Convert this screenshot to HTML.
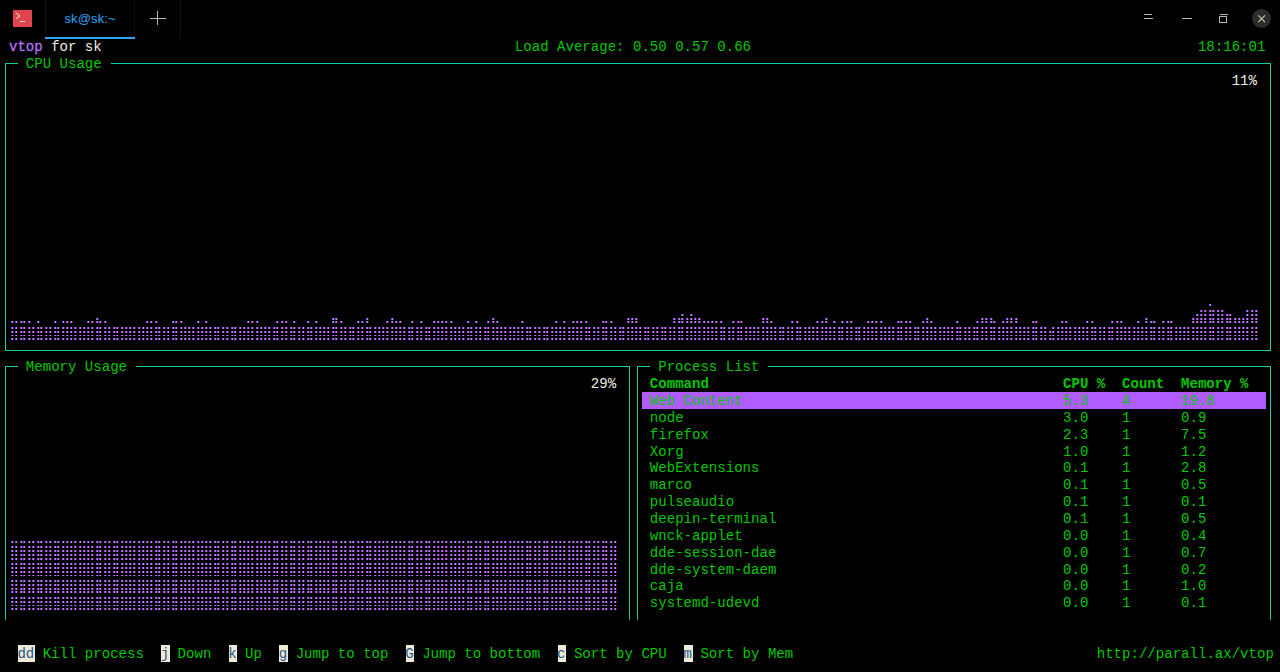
<!DOCTYPE html>
<html><head><meta charset="utf-8"><style>
html,body{margin:0;padding:0;background:#000;}
body{width:1280px;height:672px;position:relative;overflow:hidden;}
.t{position:absolute;white-space:pre;font-family:"Liberation Mono",monospace;font-size:14.0px;letter-spacing:0.032px;line-height:16.857px;}
.r{position:absolute;}
.ic{position:absolute;}
.ch{position:absolute;left:0;top:0;}
.tab{position:absolute;font-family:"Liberation Sans",sans-serif;font-size:13px;letter-spacing:0.15px;color:#2aa6f5;line-height:20px;white-space:pre;}
</style></head><body>
<div class="r" style="left:13px;top:10px;width:19px;height:17px;background:#e0444f"></div><svg class="ic" style="left:13px;top:10px" width="19" height="17" viewBox="0 0 19 17"><path d="M2.9 3.1 L7 5.9 L2.9 8.75" stroke="#f3ead8" stroke-width="1" fill="none"/><rect x="7" y="11" width="5" height="1" fill="#f3ead8"/></svg><div class="r" style="left:45px;top:0;width:1px;height:37px;background:#111211"></div><div class="r" style="left:134px;top:0;width:1px;height:37px;background:#111211"></div><div class="r" style="left:180px;top:0;width:1px;height:37px;background:#111211"></div><div class="r" style="left:45px;top:37px;width:90px;height:2px;background:#2aa6f5"></div><div class="tab" style="left:64.4px;top:8.6px;">sk@sk:~</div><div class="r" style="left:157px;top:11px;width:1px;height:14px;background:#b8b8b8"></div><div class="r" style="left:150px;top:18px;width:16px;height:1px;background:#b8b8b8"></div><div class="r" style="left:1144px;top:14px;width:8px;height:1px;background:#b4b4b4"></div><div class="r" style="left:1144px;top:18px;width:9px;height:1px;background:#b4b4b4"></div><div class="r" style="left:1182px;top:18px;width:10px;height:1px;background:#b4b4b4"></div><div class="r" style="left:1220px;top:14px;width:8px;height:1px;background:#b4b4b4"></div><div class="r" style="left:1219px;top:16px;width:6px;height:5px;border:1px solid #b4b4b4"></div><div class="r" style="left:1252px;top:9px;width:19px;height:19px;border-radius:50%;background:#2c2c2c"></div><svg class="ic" style="left:1252px;top:9px" width="19" height="19" viewBox="0 0 19 19"><path d="M6.2 6.4 L13 13.2 M13 6.4 L6.2 13.2" stroke="#d6cab4" stroke-width="1.05"/></svg>
<div class="t" style="left:8.97px;top:38.98px;color:#b874f8;-webkit-text-stroke:0.3px #b070f0;">vtop</div><div class="t" style="left:51.13px;top:38.98px;color:#f2eee0;">for sk</div><div class="t" style="left:514.91px;top:38.98px;color:#00c800;">Load Average: 0.50 0.57 0.66</div><div class="t" style="left:1197.94px;top:38.98px;color:#00c800;">18:16:01</div><div class="r" style="left:5.00px;top:63.00px;width:13.00px;height:1.00px;background:#16cea4;"></div><div class="r" style="left:111.00px;top:63.00px;width:1160.00px;height:1.00px;background:#16cea4;"></div><div class="r" style="left:5.00px;top:63.00px;width:1.00px;height:288.00px;background:#16cea4;"></div><div class="r" style="left:1270.00px;top:63.00px;width:1.00px;height:288.00px;background:#16cea4;"></div><div class="r" style="left:5.00px;top:350.00px;width:1266.00px;height:1.00px;background:#16cea4;"></div><div class="t" style="left:25.83px;top:55.84px;color:#00c800;">CPU Usage</div><div class="r" style="left:5.00px;top:366.00px;width:13.00px;height:1.00px;background:#16cea4;"></div><div class="r" style="left:136.00px;top:366.00px;width:494.00px;height:1.00px;background:#16cea4;"></div><div class="r" style="left:5.00px;top:366.00px;width:1.00px;height:254.00px;background:#16cea4;"></div><div class="r" style="left:629.00px;top:366.00px;width:1.00px;height:254.00px;background:#16cea4;"></div><div class="t" style="left:25.83px;top:359.26px;color:#00c800;">Memory Usage</div><div class="r" style="left:637.00px;top:366.00px;width:13.00px;height:1.00px;background:#16cea4;"></div><div class="r" style="left:768.00px;top:366.00px;width:503.00px;height:1.00px;background:#16cea4;"></div><div class="r" style="left:637.00px;top:366.00px;width:1.00px;height:254.00px;background:#16cea4;"></div><div class="r" style="left:1270.00px;top:366.00px;width:1.00px;height:254.00px;background:#16cea4;"></div><div class="t" style="left:658.26px;top:359.26px;color:#00c800;">Process List</div><div class="t" style="left:1231.67px;top:72.69px;color:#f2eee0;">11%</div><div class="t" style="left:590.80px;top:376.12px;color:#f2eee0;">29%</div><div class="t" style="left:649.83px;top:376.12px;color:#00c800;font-weight:bold;">Command</div><div class="t" style="left:1063.02px;top:376.12px;color:#00c800;font-weight:bold;">CPU %</div><div class="t" style="left:1122.04px;top:376.12px;color:#00c800;font-weight:bold;">Count</div><div class="t" style="left:1181.07px;top:376.12px;color:#00c800;font-weight:bold;">Memory %</div><div class="r" style="left:642.00px;top:392.04px;width:624.00px;height:16.86px;background:#b05cff;"></div><div class="t" style="left:649.83px;top:392.98px;color:#00c800;">Web Content</div><div class="t" style="left:1063.02px;top:392.98px;color:#00c800;">5.3</div><div class="t" style="left:1122.04px;top:392.98px;color:#00c800;">4</div><div class="t" style="left:1181.07px;top:392.98px;color:#00c800;">19.8</div><div class="t" style="left:649.83px;top:409.83px;color:#00c800;">node</div><div class="t" style="left:1063.02px;top:409.83px;color:#00c800;">3.0</div><div class="t" style="left:1122.04px;top:409.83px;color:#00c800;">1</div><div class="t" style="left:1181.07px;top:409.83px;color:#00c800;">0.9</div><div class="t" style="left:649.83px;top:426.69px;color:#00c800;">firefox</div><div class="t" style="left:1063.02px;top:426.69px;color:#00c800;">2.3</div><div class="t" style="left:1122.04px;top:426.69px;color:#00c800;">1</div><div class="t" style="left:1181.07px;top:426.69px;color:#00c800;">7.5</div><div class="t" style="left:649.83px;top:443.55px;color:#00c800;">Xorg</div><div class="t" style="left:1063.02px;top:443.55px;color:#00c800;">1.0</div><div class="t" style="left:1122.04px;top:443.55px;color:#00c800;">1</div><div class="t" style="left:1181.07px;top:443.55px;color:#00c800;">1.2</div><div class="t" style="left:649.83px;top:460.40px;color:#00c800;">WebExtensions</div><div class="t" style="left:1063.02px;top:460.40px;color:#00c800;">0.1</div><div class="t" style="left:1122.04px;top:460.40px;color:#00c800;">1</div><div class="t" style="left:1181.07px;top:460.40px;color:#00c800;">2.8</div><div class="t" style="left:649.83px;top:477.26px;color:#00c800;">marco</div><div class="t" style="left:1063.02px;top:477.26px;color:#00c800;">0.1</div><div class="t" style="left:1122.04px;top:477.26px;color:#00c800;">1</div><div class="t" style="left:1181.07px;top:477.26px;color:#00c800;">0.5</div><div class="t" style="left:649.83px;top:494.12px;color:#00c800;">pulseaudio</div><div class="t" style="left:1063.02px;top:494.12px;color:#00c800;">0.1</div><div class="t" style="left:1122.04px;top:494.12px;color:#00c800;">1</div><div class="t" style="left:1181.07px;top:494.12px;color:#00c800;">0.1</div><div class="t" style="left:649.83px;top:510.98px;color:#00c800;">deepin-terminal</div><div class="t" style="left:1063.02px;top:510.98px;color:#00c800;">0.1</div><div class="t" style="left:1122.04px;top:510.98px;color:#00c800;">1</div><div class="t" style="left:1181.07px;top:510.98px;color:#00c800;">0.5</div><div class="t" style="left:649.83px;top:527.83px;color:#00c800;">wnck-applet</div><div class="t" style="left:1063.02px;top:527.83px;color:#00c800;">0.0</div><div class="t" style="left:1122.04px;top:527.83px;color:#00c800;">1</div><div class="t" style="left:1181.07px;top:527.83px;color:#00c800;">0.4</div><div class="t" style="left:649.83px;top:544.69px;color:#00c800;">dde-session-dae</div><div class="t" style="left:1063.02px;top:544.69px;color:#00c800;">0.0</div><div class="t" style="left:1122.04px;top:544.69px;color:#00c800;">1</div><div class="t" style="left:1181.07px;top:544.69px;color:#00c800;">0.7</div><div class="t" style="left:649.83px;top:561.55px;color:#00c800;">dde-system-daem</div><div class="t" style="left:1063.02px;top:561.55px;color:#00c800;">0.0</div><div class="t" style="left:1122.04px;top:561.55px;color:#00c800;">1</div><div class="t" style="left:1181.07px;top:561.55px;color:#00c800;">0.2</div><div class="t" style="left:649.83px;top:578.40px;color:#00c800;">caja</div><div class="t" style="left:1063.02px;top:578.40px;color:#00c800;">0.0</div><div class="t" style="left:1122.04px;top:578.40px;color:#00c800;">1</div><div class="t" style="left:1181.07px;top:578.40px;color:#00c800;">1.0</div><div class="t" style="left:649.83px;top:595.26px;color:#00c800;">systemd-udevd</div><div class="t" style="left:1063.02px;top:595.26px;color:#00c800;">0.0</div><div class="t" style="left:1122.04px;top:595.26px;color:#00c800;">1</div><div class="t" style="left:1181.07px;top:595.26px;color:#00c800;">0.1</div><div class="r" style="left:18.00px;top:644.89px;width:16.86px;height:16.86px;background:#efe9d8;"></div><div class="t" style="left:17.40px;top:645.83px;color:#1d5a86;">dd</div><div class="t" style="left:34.26px;top:645.83px;color:#00c800;"> Kill process</div><div class="r" style="left:161.35px;top:644.89px;width:8.43px;height:16.86px;background:#efe9d8;"></div><div class="t" style="left:160.75px;top:645.83px;color:#1d5a86;">j</div><div class="t" style="left:169.18px;top:645.83px;color:#00c800;"> Down</div><div class="r" style="left:228.81px;top:644.89px;width:8.43px;height:16.86px;background:#efe9d8;"></div><div class="t" style="left:228.21px;top:645.83px;color:#1d5a86;">k</div><div class="t" style="left:236.64px;top:645.83px;color:#00c800;"> Up</div><div class="r" style="left:279.40px;top:644.89px;width:8.43px;height:16.86px;background:#efe9d8;"></div><div class="t" style="left:278.80px;top:645.83px;color:#1d5a86;">g</div><div class="t" style="left:287.24px;top:645.83px;color:#00c800;"> Jump to top</div><div class="r" style="left:405.89px;top:644.89px;width:8.43px;height:16.86px;background:#efe9d8;"></div><div class="t" style="left:405.29px;top:645.83px;color:#1d5a86;">G</div><div class="t" style="left:413.72px;top:645.83px;color:#00c800;"> Jump to bottom</div><div class="r" style="left:557.67px;top:644.89px;width:8.43px;height:16.86px;background:#efe9d8;"></div><div class="t" style="left:557.07px;top:645.83px;color:#1d5a86;">c</div><div class="t" style="left:565.51px;top:645.83px;color:#00c800;"> Sort by CPU</div><div class="r" style="left:684.16px;top:644.89px;width:8.43px;height:16.86px;background:#efe9d8;"></div><div class="t" style="left:683.56px;top:645.83px;color:#1d5a86;">m</div><div class="t" style="left:691.99px;top:645.83px;color:#00c800;"> Sort by Mem</div><div class="t" style="left:1096.75px;top:645.83px;color:#00c800;">http://parall.ax/vtop</div>
<svg class="ch" width="1280" height="672" viewBox="0 0 1280 672"><path d="M1209 304h1v2h-1zM1200 310h1v2h-1zm4 0h1v2h-1zm5 0h1v2h-1zm3 0h1v2h-1zm5 0h1v2h-1zm4 0h1v2h-1zm25 0h1v2h-1zm5 0h1v2h-1zm4 0h1v2h-1zM681 314h1v2h-1zm9 0h1v2h-1zm506 0h1v2h-1zm4 0h1v2h-1zm4 0h1v2h-1zm5 0h1v2h-1zm3 0h1v2h-1zm5 0h1v2h-1zm4 0h1v2h-1zm5 0h1v2h-1zm3 0h1v2h-1zm17 0h1v2h-1zm5 0h1v2h-1zm4 0h1v2h-1zM96 318h1v2h-1zm236 0h1v2h-1zm3 0h1v2h-1zm31 0h1v2h-1zm25 0h1v2h-1zm101 0h1v2h-1zm135 0h1v2h-1zm4 0h1v2h-1zm4 0h1v2h-1zm38 0h1v2h-1zm5 0h1v2h-1zm3 0h1v2h-1zm5 0h1v2h-1zm4 0h1v2h-1zm4 0h1v2h-1zm4 0h1v2h-1zm64 0h1v2h-1zm4 0h1v2h-1zm59 0h1v2h-1zm101 0h1v2h-1zm55 0h1v2h-1zm4 0h1v2h-1zm5 0h1v2h-1zm16 0h1v2h-1zm4 0h1v2h-1zm5 0h1v2h-1zm130 0h1v2h-1zm47 0h1v2h-1zm4 0h1v2h-1zm4 0h1v2h-1zm4 0h1v2h-1zm5 0h1v2h-1zm3 0h1v2h-1zm5 0h1v2h-1zm4 0h1v2h-1zm5 0h1v2h-1zm3 0h1v2h-1zm5 0h1v2h-1zm4 0h1v2h-1zm4 0h1v2h-1zm4 0h1v2h-1zm5 0h1v2h-1zm4 0h1v2h-1zM11 321h1v2h-1zm4 0h1v2h-1zm5 0h1v2h-1zm3 0h1v2h-1zm5 0h1v2h-1zm9 0h1v2h-1zm17 0h1v2h-1zm8 0h1v2h-1zm4 0h1v2h-1zm4 0h1v2h-1zm17 0h1v2h-1zm4 0h1v2h-1zm5 0h1v2h-1zm3 0h1v2h-1zm5 0h1v2h-1zm42 0h1v2h-1zm4 0h1v2h-1zm5 0h1v2h-1zm17 0h1v2h-1zm3 0h1v2h-1zm5 0h1v2h-1zm17 0h1v2h-1zm8 0h1v2h-1zm42 0h1v2h-1zm4 0h1v2h-1zm5 0h1v2h-1zm20 0h1v2h-1zm5 0h1v2h-1zm4 0h1v2h-1zm8 0h1v2h-1zm14 0h1v2h-1zm8 0h1v2h-1zm17 0h1v2h-1zm3 0h1v2h-1zm5 0h1v2h-1zm17 0h1v2h-1zm4 0h1v2h-1zm5 0h1v2h-1zm20 0h1v2h-1zm5 0h1v2h-1zm4 0h1v2h-1zm4 0h1v2h-1zm12 0h1v2h-1zm9 0h1v2h-1zm13 0h1v2h-1zm4 0h1v2h-1zm4 0h1v2h-1zm4 0h1v2h-1zm5 0h1v2h-1zm17 0h1v2h-1zm8 0h1v2h-1zm12 0h1v2h-1zm5 0h1v2h-1zm4 0h1v2h-1zm25 0h1v2h-1zm34 0h1v2h-1zm8 0h1v2h-1zm9 0h1v2h-1zm4 0h1v2h-1zm4 0h1v2h-1zm5 0h1v2h-1zm17 0h1v2h-1zm3 0h1v2h-1zm5 0h1v2h-1zm17 0h1v2h-1zm4 0h1v2h-1zm4 0h1v2h-1zm38 0h1v2h-1zm5 0h1v2h-1zm3 0h1v2h-1zm5 0h1v2h-1zm4 0h1v2h-1zm4 0h1v2h-1zm4 0h1v2h-1zm5 0h1v2h-1zm4 0h1v2h-1zm4 0h1v2h-1zm4 0h1v2h-1zm5 0h1v2h-1zm12 0h1v2h-1zm5 0h1v2h-1zm3 0h1v2h-1zm22 0h1v2h-1zm4 0h1v2h-1zm4 0h1v2h-1zm21 0h1v2h-1zm5 0h1v2h-1zm20 0h1v2h-1zm5 0h1v2h-1zm4 0h1v2h-1zm8 0h1v2h-1zm8 0h1v2h-1zm5 0h1v2h-1zm4 0h1v2h-1zm17 0h1v2h-1zm4 0h1v2h-1zm4 0h1v2h-1zm5 0h1v2h-1zm17 0h1v2h-1zm3 0h1v2h-1zm5 0h1v2h-1zm4 0h1v2h-1zm13 0h1v2h-1zm4 0h1v2h-1zm4 0h1v2h-1zm26 0h1v2h-1zm20 0h1v2h-1zm5 0h1v2h-1zm4 0h1v2h-1zm5 0h1v2h-1zm3 0h1v2h-1zm9 0h1v2h-1zm4 0h1v2h-1zm4 0h1v2h-1zm5 0h1v2h-1zm17 0h1v2h-1zm3 0h1v2h-1zm26 0h1v2h-1zm4 0h1v2h-1zm21 0h1v2h-1zm5 0h1v2h-1zm20 0h1v2h-1zm5 0h1v2h-1zm4 0h1v2h-1zm17 0h1v2h-1zm8 0h1v2h-1zm5 0h1v2h-1zm3 0h1v2h-1zm9 0h1v2h-1zm5 0h1v2h-1zm3 0h1v2h-1zm22 0h1v2h-1zm4 0h1v2h-1zm4 0h1v2h-1zm4 0h1v2h-1zm5 0h1v2h-1zm3 0h1v2h-1zm5 0h1v2h-1zm4 0h1v2h-1zm5 0h1v2h-1zm3 0h1v2h-1zm5 0h1v2h-1zm4 0h1v2h-1zm4 0h1v2h-1zm4 0h1v2h-1zm5 0h1v2h-1zm4 0h1v2h-1zM11 327h1v2h-1zm4 0h1v2h-1zm5 0h1v2h-1zm3 0h1v2h-1zm5 0h1v2h-1zm4 0h1v2h-1zm5 0h1v2h-1zm3 0h1v2h-1zm5 0h1v2h-1zm4 0h1v2h-1zm5 0h1v2h-1zm3 0h1v2h-1zm5 0h1v2h-1zm4 0h1v2h-1zm4 0h1v2h-1zm4 0h1v2h-1zm5 0h1v2h-1zm4 0h1v2h-1zm4 0h1v2h-1zm4 0h1v2h-1zm5 0h1v2h-1zm3 0h1v2h-1zm5 0h1v2h-1zm4 0h1v2h-1zm5 0h1v2h-1zm3 0h1v2h-1zm5 0h1v2h-1zm4 0h1v2h-1zm4 0h1v2h-1zm4 0h1v2h-1zm5 0h1v2h-1zm4 0h1v2h-1zm4 0h1v2h-1zm4 0h1v2h-1zm5 0h1v2h-1zm3 0h1v2h-1zm5 0h1v2h-1zm4 0h1v2h-1zm5 0h1v2h-1zm3 0h1v2h-1zm5 0h1v2h-1zm4 0h1v2h-1zm4 0h1v2h-1zm4 0h1v2h-1zm5 0h1v2h-1zm4 0h1v2h-1zm4 0h1v2h-1zm4 0h1v2h-1zm5 0h1v2h-1zm3 0h1v2h-1zm5 0h1v2h-1zm4 0h1v2h-1zm5 0h1v2h-1zm3 0h1v2h-1zm5 0h1v2h-1zm4 0h1v2h-1zm4 0h1v2h-1zm4 0h1v2h-1zm5 0h1v2h-1zm4 0h1v2h-1zm4 0h1v2h-1zm4 0h1v2h-1zm5 0h1v2h-1zm3 0h1v2h-1zm5 0h1v2h-1zm4 0h1v2h-1zm5 0h1v2h-1zm3 0h1v2h-1zm5 0h1v2h-1zm4 0h1v2h-1zm5 0h1v2h-1zm3 0h1v2h-1zm5 0h1v2h-1zm4 0h1v2h-1zm4 0h1v2h-1zm4 0h1v2h-1zm5 0h1v2h-1zm3 0h1v2h-1zm5 0h1v2h-1zm4 0h1v2h-1zm5 0h1v2h-1zm3 0h1v2h-1zm5 0h1v2h-1zm4 0h1v2h-1zm5 0h1v2h-1zm3 0h1v2h-1zm5 0h1v2h-1zm4 0h1v2h-1zm4 0h1v2h-1zm4 0h1v2h-1zm5 0h1v2h-1zm4 0h1v2h-1zm4 0h1v2h-1zm4 0h1v2h-1zm5 0h1v2h-1zm3 0h1v2h-1zm5 0h1v2h-1zm4 0h1v2h-1zm5 0h1v2h-1zm3 0h1v2h-1zm5 0h1v2h-1zm4 0h1v2h-1zm4 0h1v2h-1zm4 0h1v2h-1zm5 0h1v2h-1zm4 0h1v2h-1zm4 0h1v2h-1zm4 0h1v2h-1zm5 0h1v2h-1zm3 0h1v2h-1zm5 0h1v2h-1zm4 0h1v2h-1zm5 0h1v2h-1zm3 0h1v2h-1zm5 0h1v2h-1zm4 0h1v2h-1zm4 0h1v2h-1zm4 0h1v2h-1zm5 0h1v2h-1zm4 0h1v2h-1zm4 0h1v2h-1zm4 0h1v2h-1zm5 0h1v2h-1zm3 0h1v2h-1zm5 0h1v2h-1zm4 0h1v2h-1zm5 0h1v2h-1zm3 0h1v2h-1zm5 0h1v2h-1zm4 0h1v2h-1zm4 0h1v2h-1zm4 0h1v2h-1zm5 0h1v2h-1zm4 0h1v2h-1zm4 0h1v2h-1zm4 0h1v2h-1zm5 0h1v2h-1zm3 0h1v2h-1zm5 0h1v2h-1zm4 0h1v2h-1zm5 0h1v2h-1zm3 0h1v2h-1zm5 0h1v2h-1zm4 0h1v2h-1zm5 0h1v2h-1zm3 0h1v2h-1zm5 0h1v2h-1zm4 0h1v2h-1zm4 0h1v2h-1zm4 0h1v2h-1zm5 0h1v2h-1zm3 0h1v2h-1zm5 0h1v2h-1zm4 0h1v2h-1zm5 0h1v2h-1zm3 0h1v2h-1zm5 0h1v2h-1zm4 0h1v2h-1zm5 0h1v2h-1zm3 0h1v2h-1zm5 0h1v2h-1zm4 0h1v2h-1zm4 0h1v2h-1zm4 0h1v2h-1zm5 0h1v2h-1zm4 0h1v2h-1zm4 0h1v2h-1zm4 0h1v2h-1zm5 0h1v2h-1zm3 0h1v2h-1zm5 0h1v2h-1zm4 0h1v2h-1zm5 0h1v2h-1zm3 0h1v2h-1zm5 0h1v2h-1zm4 0h1v2h-1zm4 0h1v2h-1zm4 0h1v2h-1zm5 0h1v2h-1zm4 0h1v2h-1zm4 0h1v2h-1zm4 0h1v2h-1zm5 0h1v2h-1zm3 0h1v2h-1zm5 0h1v2h-1zm4 0h1v2h-1zm5 0h1v2h-1zm3 0h1v2h-1zm5 0h1v2h-1zm4 0h1v2h-1zm4 0h1v2h-1zm4 0h1v2h-1zm5 0h1v2h-1zm4 0h1v2h-1zm4 0h1v2h-1zm4 0h1v2h-1zm5 0h1v2h-1zm3 0h1v2h-1zm5 0h1v2h-1zm4 0h1v2h-1zm5 0h1v2h-1zm3 0h1v2h-1zm5 0h1v2h-1zm4 0h1v2h-1zm4 0h1v2h-1zm4 0h1v2h-1zm5 0h1v2h-1zm4 0h1v2h-1zm4 0h1v2h-1zm4 0h1v2h-1zm5 0h1v2h-1zm3 0h1v2h-1zm5 0h1v2h-1zm4 0h1v2h-1zm5 0h1v2h-1zm3 0h1v2h-1zm5 0h1v2h-1zm4 0h1v2h-1zm4 0h1v2h-1zm4 0h1v2h-1zm5 0h1v2h-1zm4 0h1v2h-1zm4 0h1v2h-1zm4 0h1v2h-1zm5 0h1v2h-1zm3 0h1v2h-1zm5 0h1v2h-1zm4 0h1v2h-1zm5 0h1v2h-1zm3 0h1v2h-1zm5 0h1v2h-1zm4 0h1v2h-1zm5 0h1v2h-1zm3 0h1v2h-1zm5 0h1v2h-1zm4 0h1v2h-1zm4 0h1v2h-1zm4 0h1v2h-1zm5 0h1v2h-1zm4 0h1v2h-1zm4 0h1v2h-1zm4 0h1v2h-1zm5 0h1v2h-1zm3 0h1v2h-1zm5 0h1v2h-1zm4 0h1v2h-1zm8 0h1v2h-1zm5 0h1v2h-1zm4 0h1v2h-1zm4 0h1v2h-1zm4 0h1v2h-1zm5 0h1v2h-1zm4 0h1v2h-1zm4 0h1v2h-1zm4 0h1v2h-1zm5 0h1v2h-1zm3 0h1v2h-1zm5 0h1v2h-1zm4 0h1v2h-1zm5 0h1v2h-1zm3 0h1v2h-1zm5 0h1v2h-1zm4 0h1v2h-1zm4 0h1v2h-1zm4 0h1v2h-1zm5 0h1v2h-1zm4 0h1v2h-1zm4 0h1v2h-1zm4 0h1v2h-1zm5 0h1v2h-1zm3 0h1v2h-1zm5 0h1v2h-1zm4 0h1v2h-1zm5 0h1v2h-1zm3 0h1v2h-1zm5 0h1v2h-1zm4 0h1v2h-1zm4 0h1v2h-1zm4 0h1v2h-1zm5 0h1v2h-1zm4 0h1v2h-1zm4 0h1v2h-1zm4 0h1v2h-1zm5 0h1v2h-1zm3 0h1v2h-1zm5 0h1v2h-1zm4 0h1v2h-1zm5 0h1v2h-1zm3 0h1v2h-1zm5 0h1v2h-1zm4 0h1v2h-1zm4 0h1v2h-1zm4 0h1v2h-1zm5 0h1v2h-1zm4 0h1v2h-1zM11 331h1v2h-1zm4 0h1v2h-1zm5 0h1v2h-1zm3 0h1v2h-1zm5 0h1v2h-1zm4 0h1v2h-1zm5 0h1v2h-1zm3 0h1v2h-1zm5 0h1v2h-1zm4 0h1v2h-1zm5 0h1v2h-1zm3 0h1v2h-1zm5 0h1v2h-1zm4 0h1v2h-1zm4 0h1v2h-1zm4 0h1v2h-1zm5 0h1v2h-1zm4 0h1v2h-1zm4 0h1v2h-1zm4 0h1v2h-1zm5 0h1v2h-1zm3 0h1v2h-1zm5 0h1v2h-1zm4 0h1v2h-1zm5 0h1v2h-1zm3 0h1v2h-1zm5 0h1v2h-1zm4 0h1v2h-1zm4 0h1v2h-1zm4 0h1v2h-1zm5 0h1v2h-1zm4 0h1v2h-1zm4 0h1v2h-1zm4 0h1v2h-1zm5 0h1v2h-1zm3 0h1v2h-1zm5 0h1v2h-1zm4 0h1v2h-1zm5 0h1v2h-1zm3 0h1v2h-1zm5 0h1v2h-1zm4 0h1v2h-1zm4 0h1v2h-1zm4 0h1v2h-1zm5 0h1v2h-1zm4 0h1v2h-1zm4 0h1v2h-1zm4 0h1v2h-1zm5 0h1v2h-1zm3 0h1v2h-1zm5 0h1v2h-1zm4 0h1v2h-1zm5 0h1v2h-1zm3 0h1v2h-1zm5 0h1v2h-1zm4 0h1v2h-1zm4 0h1v2h-1zm4 0h1v2h-1zm5 0h1v2h-1zm4 0h1v2h-1zm4 0h1v2h-1zm4 0h1v2h-1zm5 0h1v2h-1zm3 0h1v2h-1zm5 0h1v2h-1zm4 0h1v2h-1zm5 0h1v2h-1zm3 0h1v2h-1zm5 0h1v2h-1zm4 0h1v2h-1zm5 0h1v2h-1zm3 0h1v2h-1zm5 0h1v2h-1zm4 0h1v2h-1zm4 0h1v2h-1zm4 0h1v2h-1zm5 0h1v2h-1zm3 0h1v2h-1zm5 0h1v2h-1zm4 0h1v2h-1zm5 0h1v2h-1zm3 0h1v2h-1zm5 0h1v2h-1zm4 0h1v2h-1zm5 0h1v2h-1zm3 0h1v2h-1zm5 0h1v2h-1zm4 0h1v2h-1zm4 0h1v2h-1zm4 0h1v2h-1zm5 0h1v2h-1zm4 0h1v2h-1zm4 0h1v2h-1zm4 0h1v2h-1zm5 0h1v2h-1zm3 0h1v2h-1zm5 0h1v2h-1zm4 0h1v2h-1zm5 0h1v2h-1zm3 0h1v2h-1zm5 0h1v2h-1zm4 0h1v2h-1zm4 0h1v2h-1zm4 0h1v2h-1zm5 0h1v2h-1zm4 0h1v2h-1zm4 0h1v2h-1zm4 0h1v2h-1zm5 0h1v2h-1zm3 0h1v2h-1zm5 0h1v2h-1zm4 0h1v2h-1zm5 0h1v2h-1zm3 0h1v2h-1zm5 0h1v2h-1zm4 0h1v2h-1zm4 0h1v2h-1zm4 0h1v2h-1zm5 0h1v2h-1zm4 0h1v2h-1zm4 0h1v2h-1zm4 0h1v2h-1zm5 0h1v2h-1zm3 0h1v2h-1zm5 0h1v2h-1zm4 0h1v2h-1zm5 0h1v2h-1zm3 0h1v2h-1zm5 0h1v2h-1zm4 0h1v2h-1zm4 0h1v2h-1zm4 0h1v2h-1zm5 0h1v2h-1zm4 0h1v2h-1zm4 0h1v2h-1zm4 0h1v2h-1zm5 0h1v2h-1zm3 0h1v2h-1zm5 0h1v2h-1zm4 0h1v2h-1zm5 0h1v2h-1zm3 0h1v2h-1zm5 0h1v2h-1zm4 0h1v2h-1zm5 0h1v2h-1zm3 0h1v2h-1zm5 0h1v2h-1zm4 0h1v2h-1zm4 0h1v2h-1zm4 0h1v2h-1zm5 0h1v2h-1zm3 0h1v2h-1zm5 0h1v2h-1zm4 0h1v2h-1zm5 0h1v2h-1zm3 0h1v2h-1zm5 0h1v2h-1zm4 0h1v2h-1zm5 0h1v2h-1zm3 0h1v2h-1zm5 0h1v2h-1zm4 0h1v2h-1zm4 0h1v2h-1zm4 0h1v2h-1zm5 0h1v2h-1zm4 0h1v2h-1zm4 0h1v2h-1zm4 0h1v2h-1zm5 0h1v2h-1zm3 0h1v2h-1zm5 0h1v2h-1zm4 0h1v2h-1zm5 0h1v2h-1zm3 0h1v2h-1zm5 0h1v2h-1zm4 0h1v2h-1zm4 0h1v2h-1zm4 0h1v2h-1zm5 0h1v2h-1zm4 0h1v2h-1zm4 0h1v2h-1zm4 0h1v2h-1zm5 0h1v2h-1zm3 0h1v2h-1zm5 0h1v2h-1zm4 0h1v2h-1zm5 0h1v2h-1zm3 0h1v2h-1zm5 0h1v2h-1zm4 0h1v2h-1zm4 0h1v2h-1zm4 0h1v2h-1zm5 0h1v2h-1zm4 0h1v2h-1zm4 0h1v2h-1zm4 0h1v2h-1zm5 0h1v2h-1zm3 0h1v2h-1zm5 0h1v2h-1zm4 0h1v2h-1zm5 0h1v2h-1zm3 0h1v2h-1zm5 0h1v2h-1zm4 0h1v2h-1zm4 0h1v2h-1zm4 0h1v2h-1zm5 0h1v2h-1zm4 0h1v2h-1zm4 0h1v2h-1zm4 0h1v2h-1zm5 0h1v2h-1zm3 0h1v2h-1zm5 0h1v2h-1zm4 0h1v2h-1zm5 0h1v2h-1zm3 0h1v2h-1zm5 0h1v2h-1zm4 0h1v2h-1zm4 0h1v2h-1zm4 0h1v2h-1zm5 0h1v2h-1zm4 0h1v2h-1zm4 0h1v2h-1zm4 0h1v2h-1zm5 0h1v2h-1zm3 0h1v2h-1zm5 0h1v2h-1zm4 0h1v2h-1zm5 0h1v2h-1zm3 0h1v2h-1zm5 0h1v2h-1zm4 0h1v2h-1zm5 0h1v2h-1zm3 0h1v2h-1zm5 0h1v2h-1zm4 0h1v2h-1zm4 0h1v2h-1zm4 0h1v2h-1zm5 0h1v2h-1zm4 0h1v2h-1zm4 0h1v2h-1zm4 0h1v2h-1zm5 0h1v2h-1zm3 0h1v2h-1zm5 0h1v2h-1zm4 0h1v2h-1zm5 0h1v2h-1zm3 0h1v2h-1zm5 0h1v2h-1zm4 0h1v2h-1zm4 0h1v2h-1zm4 0h1v2h-1zm5 0h1v2h-1zm4 0h1v2h-1zm4 0h1v2h-1zm4 0h1v2h-1zm5 0h1v2h-1zm3 0h1v2h-1zm5 0h1v2h-1zm4 0h1v2h-1zm5 0h1v2h-1zm3 0h1v2h-1zm5 0h1v2h-1zm4 0h1v2h-1zm4 0h1v2h-1zm4 0h1v2h-1zm5 0h1v2h-1zm4 0h1v2h-1zm4 0h1v2h-1zm4 0h1v2h-1zm5 0h1v2h-1zm3 0h1v2h-1zm5 0h1v2h-1zm4 0h1v2h-1zm5 0h1v2h-1zm3 0h1v2h-1zm5 0h1v2h-1zm4 0h1v2h-1zm4 0h1v2h-1zm4 0h1v2h-1zm5 0h1v2h-1zm4 0h1v2h-1zm4 0h1v2h-1zm4 0h1v2h-1zm5 0h1v2h-1zm3 0h1v2h-1zm5 0h1v2h-1zm4 0h1v2h-1zm5 0h1v2h-1zm3 0h1v2h-1zm5 0h1v2h-1zm4 0h1v2h-1zm4 0h1v2h-1zm4 0h1v2h-1zm5 0h1v2h-1zm4 0h1v2h-1zM11 335h1v1h-1zm4 0h1v1h-1zm5 0h1v1h-1zm3 0h1v1h-1zm5 0h1v1h-1zm4 0h1v1h-1zm5 0h1v1h-1zm3 0h1v1h-1zm5 0h1v1h-1zm4 0h1v1h-1zm5 0h1v1h-1zm3 0h1v1h-1zm5 0h1v1h-1zm4 0h1v1h-1zm4 0h1v1h-1zm4 0h1v1h-1zm5 0h1v1h-1zm4 0h1v1h-1zm4 0h1v1h-1zm4 0h1v1h-1zm5 0h1v1h-1zm3 0h1v1h-1zm5 0h1v1h-1zm4 0h1v1h-1zm5 0h1v1h-1zm3 0h1v1h-1zm5 0h1v1h-1zm4 0h1v1h-1zm4 0h1v1h-1zm4 0h1v1h-1zm5 0h1v1h-1zm4 0h1v1h-1zm4 0h1v1h-1zm4 0h1v1h-1zm5 0h1v1h-1zm3 0h1v1h-1zm5 0h1v1h-1zm4 0h1v1h-1zm5 0h1v1h-1zm3 0h1v1h-1zm5 0h1v1h-1zm4 0h1v1h-1zm4 0h1v1h-1zm4 0h1v1h-1zm5 0h1v1h-1zm4 0h1v1h-1zm4 0h1v1h-1zm4 0h1v1h-1zm5 0h1v1h-1zm3 0h1v1h-1zm5 0h1v1h-1zm4 0h1v1h-1zm5 0h1v1h-1zm3 0h1v1h-1zm5 0h1v1h-1zm4 0h1v1h-1zm4 0h1v1h-1zm4 0h1v1h-1zm5 0h1v1h-1zm4 0h1v1h-1zm4 0h1v1h-1zm4 0h1v1h-1zm5 0h1v1h-1zm3 0h1v1h-1zm5 0h1v1h-1zm4 0h1v1h-1zm5 0h1v1h-1zm3 0h1v1h-1zm5 0h1v1h-1zm4 0h1v1h-1zm5 0h1v1h-1zm3 0h1v1h-1zm5 0h1v1h-1zm4 0h1v1h-1zm4 0h1v1h-1zm4 0h1v1h-1zm5 0h1v1h-1zm3 0h1v1h-1zm5 0h1v1h-1zm4 0h1v1h-1zm5 0h1v1h-1zm3 0h1v1h-1zm5 0h1v1h-1zm4 0h1v1h-1zm5 0h1v1h-1zm3 0h1v1h-1zm5 0h1v1h-1zm4 0h1v1h-1zm4 0h1v1h-1zm4 0h1v1h-1zm5 0h1v1h-1zm4 0h1v1h-1zm4 0h1v1h-1zm4 0h1v1h-1zm5 0h1v1h-1zm3 0h1v1h-1zm5 0h1v1h-1zm4 0h1v1h-1zm5 0h1v1h-1zm3 0h1v1h-1zm5 0h1v1h-1zm4 0h1v1h-1zm4 0h1v1h-1zm4 0h1v1h-1zm5 0h1v1h-1zm4 0h1v1h-1zm4 0h1v1h-1zm4 0h1v1h-1zm5 0h1v1h-1zm3 0h1v1h-1zm5 0h1v1h-1zm4 0h1v1h-1zm5 0h1v1h-1zm3 0h1v1h-1zm5 0h1v1h-1zm4 0h1v1h-1zm4 0h1v1h-1zm4 0h1v1h-1zm5 0h1v1h-1zm4 0h1v1h-1zm4 0h1v1h-1zm4 0h1v1h-1zm5 0h1v1h-1zm3 0h1v1h-1zm5 0h1v1h-1zm4 0h1v1h-1zm5 0h1v1h-1zm3 0h1v1h-1zm5 0h1v1h-1zm4 0h1v1h-1zm4 0h1v1h-1zm4 0h1v1h-1zm5 0h1v1h-1zm4 0h1v1h-1zm4 0h1v1h-1zm4 0h1v1h-1zm5 0h1v1h-1zm3 0h1v1h-1zm5 0h1v1h-1zm4 0h1v1h-1zm5 0h1v1h-1zm3 0h1v1h-1zm5 0h1v1h-1zm4 0h1v1h-1zm5 0h1v1h-1zm3 0h1v1h-1zm5 0h1v1h-1zm4 0h1v1h-1zm4 0h1v1h-1zm4 0h1v1h-1zm5 0h1v1h-1zm3 0h1v1h-1zm5 0h1v1h-1zm4 0h1v1h-1zm5 0h1v1h-1zm3 0h1v1h-1zm5 0h1v1h-1zm4 0h1v1h-1zm5 0h1v1h-1zm3 0h1v1h-1zm5 0h1v1h-1zm4 0h1v1h-1zm4 0h1v1h-1zm4 0h1v1h-1zm5 0h1v1h-1zm4 0h1v1h-1zm4 0h1v1h-1zm4 0h1v1h-1zm5 0h1v1h-1zm3 0h1v1h-1zm5 0h1v1h-1zm4 0h1v1h-1zm5 0h1v1h-1zm3 0h1v1h-1zm5 0h1v1h-1zm4 0h1v1h-1zm4 0h1v1h-1zm4 0h1v1h-1zm5 0h1v1h-1zm4 0h1v1h-1zm4 0h1v1h-1zm4 0h1v1h-1zm5 0h1v1h-1zm3 0h1v1h-1zm5 0h1v1h-1zm4 0h1v1h-1zm5 0h1v1h-1zm3 0h1v1h-1zm5 0h1v1h-1zm4 0h1v1h-1zm4 0h1v1h-1zm4 0h1v1h-1zm5 0h1v1h-1zm4 0h1v1h-1zm4 0h1v1h-1zm4 0h1v1h-1zm5 0h1v1h-1zm3 0h1v1h-1zm5 0h1v1h-1zm4 0h1v1h-1zm5 0h1v1h-1zm3 0h1v1h-1zm5 0h1v1h-1zm4 0h1v1h-1zm4 0h1v1h-1zm4 0h1v1h-1zm5 0h1v1h-1zm4 0h1v1h-1zm4 0h1v1h-1zm4 0h1v1h-1zm5 0h1v1h-1zm3 0h1v1h-1zm5 0h1v1h-1zm4 0h1v1h-1zm5 0h1v1h-1zm3 0h1v1h-1zm5 0h1v1h-1zm4 0h1v1h-1zm4 0h1v1h-1zm4 0h1v1h-1zm5 0h1v1h-1zm4 0h1v1h-1zm4 0h1v1h-1zm4 0h1v1h-1zm5 0h1v1h-1zm3 0h1v1h-1zm5 0h1v1h-1zm4 0h1v1h-1zm5 0h1v1h-1zm3 0h1v1h-1zm5 0h1v1h-1zm4 0h1v1h-1zm5 0h1v1h-1zm3 0h1v1h-1zm5 0h1v1h-1zm4 0h1v1h-1zm4 0h1v1h-1zm4 0h1v1h-1zm5 0h1v1h-1zm4 0h1v1h-1zm4 0h1v1h-1zm4 0h1v1h-1zm5 0h1v1h-1zm3 0h1v1h-1zm5 0h1v1h-1zm4 0h1v1h-1zm5 0h1v1h-1zm3 0h1v1h-1zm5 0h1v1h-1zm4 0h1v1h-1zm4 0h1v1h-1zm4 0h1v1h-1zm5 0h1v1h-1zm4 0h1v1h-1zm4 0h1v1h-1zm4 0h1v1h-1zm5 0h1v1h-1zm3 0h1v1h-1zm5 0h1v1h-1zm4 0h1v1h-1zm5 0h1v1h-1zm3 0h1v1h-1zm5 0h1v1h-1zm4 0h1v1h-1zm4 0h1v1h-1zm4 0h1v1h-1zm5 0h1v1h-1zm4 0h1v1h-1zm4 0h1v1h-1zm4 0h1v1h-1zm5 0h1v1h-1zm3 0h1v1h-1zm5 0h1v1h-1zm4 0h1v1h-1zm5 0h1v1h-1zm3 0h1v1h-1zm5 0h1v1h-1zm4 0h1v1h-1zm4 0h1v1h-1zm4 0h1v1h-1zm5 0h1v1h-1zm4 0h1v1h-1zm4 0h1v1h-1zm4 0h1v1h-1zm5 0h1v1h-1zm3 0h1v1h-1zm5 0h1v1h-1zm4 0h1v1h-1zm5 0h1v1h-1zm3 0h1v1h-1zm5 0h1v1h-1zm4 0h1v1h-1zm4 0h1v1h-1zm4 0h1v1h-1zm5 0h1v1h-1zm4 0h1v1h-1zM11 338h1v2h-1zm4 0h1v2h-1zm5 0h1v2h-1zm3 0h1v2h-1zm5 0h1v2h-1zm4 0h1v2h-1zm5 0h1v2h-1zm3 0h1v2h-1zm5 0h1v2h-1zm4 0h1v2h-1zm5 0h1v2h-1zm3 0h1v2h-1zm5 0h1v2h-1zm4 0h1v2h-1zm4 0h1v2h-1zm4 0h1v2h-1zm5 0h1v2h-1zm4 0h1v2h-1zm4 0h1v2h-1zm4 0h1v2h-1zm5 0h1v2h-1zm3 0h1v2h-1zm5 0h1v2h-1zm4 0h1v2h-1zm5 0h1v2h-1zm3 0h1v2h-1zm5 0h1v2h-1zm4 0h1v2h-1zm4 0h1v2h-1zm4 0h1v2h-1zm5 0h1v2h-1zm4 0h1v2h-1zm4 0h1v2h-1zm4 0h1v2h-1zm5 0h1v2h-1zm3 0h1v2h-1zm5 0h1v2h-1zm4 0h1v2h-1zm5 0h1v2h-1zm3 0h1v2h-1zm5 0h1v2h-1zm4 0h1v2h-1zm4 0h1v2h-1zm4 0h1v2h-1zm5 0h1v2h-1zm4 0h1v2h-1zm4 0h1v2h-1zm4 0h1v2h-1zm5 0h1v2h-1zm3 0h1v2h-1zm5 0h1v2h-1zm4 0h1v2h-1zm5 0h1v2h-1zm3 0h1v2h-1zm5 0h1v2h-1zm4 0h1v2h-1zm4 0h1v2h-1zm4 0h1v2h-1zm5 0h1v2h-1zm4 0h1v2h-1zm4 0h1v2h-1zm4 0h1v2h-1zm5 0h1v2h-1zm3 0h1v2h-1zm5 0h1v2h-1zm4 0h1v2h-1zm5 0h1v2h-1zm3 0h1v2h-1zm5 0h1v2h-1zm4 0h1v2h-1zm5 0h1v2h-1zm3 0h1v2h-1zm5 0h1v2h-1zm4 0h1v2h-1zm4 0h1v2h-1zm4 0h1v2h-1zm5 0h1v2h-1zm3 0h1v2h-1zm5 0h1v2h-1zm4 0h1v2h-1zm5 0h1v2h-1zm3 0h1v2h-1zm5 0h1v2h-1zm4 0h1v2h-1zm5 0h1v2h-1zm3 0h1v2h-1zm5 0h1v2h-1zm4 0h1v2h-1zm4 0h1v2h-1zm4 0h1v2h-1zm5 0h1v2h-1zm4 0h1v2h-1zm4 0h1v2h-1zm4 0h1v2h-1zm5 0h1v2h-1zm3 0h1v2h-1zm5 0h1v2h-1zm4 0h1v2h-1zm5 0h1v2h-1zm3 0h1v2h-1zm5 0h1v2h-1zm4 0h1v2h-1zm4 0h1v2h-1zm4 0h1v2h-1zm5 0h1v2h-1zm4 0h1v2h-1zm4 0h1v2h-1zm4 0h1v2h-1zm5 0h1v2h-1zm3 0h1v2h-1zm5 0h1v2h-1zm4 0h1v2h-1zm5 0h1v2h-1zm3 0h1v2h-1zm5 0h1v2h-1zm4 0h1v2h-1zm4 0h1v2h-1zm4 0h1v2h-1zm5 0h1v2h-1zm4 0h1v2h-1zm4 0h1v2h-1zm4 0h1v2h-1zm5 0h1v2h-1zm3 0h1v2h-1zm5 0h1v2h-1zm4 0h1v2h-1zm5 0h1v2h-1zm3 0h1v2h-1zm5 0h1v2h-1zm4 0h1v2h-1zm4 0h1v2h-1zm4 0h1v2h-1zm5 0h1v2h-1zm4 0h1v2h-1zm4 0h1v2h-1zm4 0h1v2h-1zm5 0h1v2h-1zm3 0h1v2h-1zm5 0h1v2h-1zm4 0h1v2h-1zm5 0h1v2h-1zm3 0h1v2h-1zm5 0h1v2h-1zm4 0h1v2h-1zm5 0h1v2h-1zm3 0h1v2h-1zm5 0h1v2h-1zm4 0h1v2h-1zm4 0h1v2h-1zm4 0h1v2h-1zm5 0h1v2h-1zm3 0h1v2h-1zm5 0h1v2h-1zm4 0h1v2h-1zm5 0h1v2h-1zm3 0h1v2h-1zm5 0h1v2h-1zm4 0h1v2h-1zm5 0h1v2h-1zm3 0h1v2h-1zm5 0h1v2h-1zm4 0h1v2h-1zm4 0h1v2h-1zm4 0h1v2h-1zm5 0h1v2h-1zm4 0h1v2h-1zm4 0h1v2h-1zm4 0h1v2h-1zm5 0h1v2h-1zm3 0h1v2h-1zm5 0h1v2h-1zm4 0h1v2h-1zm5 0h1v2h-1zm3 0h1v2h-1zm5 0h1v2h-1zm4 0h1v2h-1zm4 0h1v2h-1zm4 0h1v2h-1zm5 0h1v2h-1zm4 0h1v2h-1zm4 0h1v2h-1zm4 0h1v2h-1zm5 0h1v2h-1zm3 0h1v2h-1zm5 0h1v2h-1zm4 0h1v2h-1zm5 0h1v2h-1zm3 0h1v2h-1zm5 0h1v2h-1zm4 0h1v2h-1zm4 0h1v2h-1zm4 0h1v2h-1zm5 0h1v2h-1zm4 0h1v2h-1zm4 0h1v2h-1zm4 0h1v2h-1zm5 0h1v2h-1zm3 0h1v2h-1zm5 0h1v2h-1zm4 0h1v2h-1zm5 0h1v2h-1zm3 0h1v2h-1zm5 0h1v2h-1zm4 0h1v2h-1zm4 0h1v2h-1zm4 0h1v2h-1zm5 0h1v2h-1zm4 0h1v2h-1zm4 0h1v2h-1zm4 0h1v2h-1zm5 0h1v2h-1zm3 0h1v2h-1zm5 0h1v2h-1zm4 0h1v2h-1zm5 0h1v2h-1zm3 0h1v2h-1zm5 0h1v2h-1zm4 0h1v2h-1zm4 0h1v2h-1zm4 0h1v2h-1zm5 0h1v2h-1zm4 0h1v2h-1zm4 0h1v2h-1zm4 0h1v2h-1zm5 0h1v2h-1zm3 0h1v2h-1zm5 0h1v2h-1zm4 0h1v2h-1zm5 0h1v2h-1zm3 0h1v2h-1zm5 0h1v2h-1zm4 0h1v2h-1zm5 0h1v2h-1zm3 0h1v2h-1zm5 0h1v2h-1zm4 0h1v2h-1zm4 0h1v2h-1zm4 0h1v2h-1zm5 0h1v2h-1zm4 0h1v2h-1zm4 0h1v2h-1zm4 0h1v2h-1zm5 0h1v2h-1zm3 0h1v2h-1zm5 0h1v2h-1zm4 0h1v2h-1zm5 0h1v2h-1zm3 0h1v2h-1zm5 0h1v2h-1zm4 0h1v2h-1zm4 0h1v2h-1zm4 0h1v2h-1zm5 0h1v2h-1zm4 0h1v2h-1zm4 0h1v2h-1zm4 0h1v2h-1zm5 0h1v2h-1zm3 0h1v2h-1zm5 0h1v2h-1zm4 0h1v2h-1zm5 0h1v2h-1zm3 0h1v2h-1zm5 0h1v2h-1zm4 0h1v2h-1zm4 0h1v2h-1zm4 0h1v2h-1zm5 0h1v2h-1zm4 0h1v2h-1zm4 0h1v2h-1zm4 0h1v2h-1zm5 0h1v2h-1zm3 0h1v2h-1zm5 0h1v2h-1zm4 0h1v2h-1zm5 0h1v2h-1zm3 0h1v2h-1zm5 0h1v2h-1zm4 0h1v2h-1zm4 0h1v2h-1zm4 0h1v2h-1zm5 0h1v2h-1zm4 0h1v2h-1zm4 0h1v2h-1zm4 0h1v2h-1zm5 0h1v2h-1zm3 0h1v2h-1zm5 0h1v2h-1zm4 0h1v2h-1zm5 0h1v2h-1zm3 0h1v2h-1zm5 0h1v2h-1zm4 0h1v2h-1zm4 0h1v2h-1zm4 0h1v2h-1zm5 0h1v2h-1zm4 0h1v2h-1zM11 541h1v2h-1zm4 0h1v2h-1zm5 0h1v2h-1zm3 0h1v2h-1zm5 0h1v2h-1zm4 0h1v2h-1zm5 0h1v2h-1zm3 0h1v2h-1zm5 0h1v2h-1zm4 0h1v2h-1zm5 0h1v2h-1zm3 0h1v2h-1zm5 0h1v2h-1zm4 0h1v2h-1zm4 0h1v2h-1zm4 0h1v2h-1zm5 0h1v2h-1zm4 0h1v2h-1zm4 0h1v2h-1zm4 0h1v2h-1zm5 0h1v2h-1zm3 0h1v2h-1zm5 0h1v2h-1zm4 0h1v2h-1zm5 0h1v2h-1zm3 0h1v2h-1zm5 0h1v2h-1zm4 0h1v2h-1zm4 0h1v2h-1zm4 0h1v2h-1zm5 0h1v2h-1zm4 0h1v2h-1zm4 0h1v2h-1zm4 0h1v2h-1zm5 0h1v2h-1zm3 0h1v2h-1zm5 0h1v2h-1zm4 0h1v2h-1zm5 0h1v2h-1zm3 0h1v2h-1zm5 0h1v2h-1zm4 0h1v2h-1zm4 0h1v2h-1zm4 0h1v2h-1zm5 0h1v2h-1zm4 0h1v2h-1zm4 0h1v2h-1zm4 0h1v2h-1zm5 0h1v2h-1zm3 0h1v2h-1zm5 0h1v2h-1zm4 0h1v2h-1zm5 0h1v2h-1zm3 0h1v2h-1zm5 0h1v2h-1zm4 0h1v2h-1zm4 0h1v2h-1zm4 0h1v2h-1zm5 0h1v2h-1zm4 0h1v2h-1zm4 0h1v2h-1zm4 0h1v2h-1zm5 0h1v2h-1zm3 0h1v2h-1zm5 0h1v2h-1zm4 0h1v2h-1zm5 0h1v2h-1zm3 0h1v2h-1zm5 0h1v2h-1zm4 0h1v2h-1zm5 0h1v2h-1zm3 0h1v2h-1zm5 0h1v2h-1zm4 0h1v2h-1zm4 0h1v2h-1zm4 0h1v2h-1zm5 0h1v2h-1zm3 0h1v2h-1zm5 0h1v2h-1zm4 0h1v2h-1zm5 0h1v2h-1zm3 0h1v2h-1zm5 0h1v2h-1zm4 0h1v2h-1zm5 0h1v2h-1zm3 0h1v2h-1zm5 0h1v2h-1zm4 0h1v2h-1zm4 0h1v2h-1zm4 0h1v2h-1zm5 0h1v2h-1zm4 0h1v2h-1zm4 0h1v2h-1zm4 0h1v2h-1zm5 0h1v2h-1zm3 0h1v2h-1zm5 0h1v2h-1zm4 0h1v2h-1zm5 0h1v2h-1zm3 0h1v2h-1zm5 0h1v2h-1zm4 0h1v2h-1zm4 0h1v2h-1zm4 0h1v2h-1zm5 0h1v2h-1zm4 0h1v2h-1zm4 0h1v2h-1zm4 0h1v2h-1zm5 0h1v2h-1zm3 0h1v2h-1zm5 0h1v2h-1zm4 0h1v2h-1zm5 0h1v2h-1zm3 0h1v2h-1zm5 0h1v2h-1zm4 0h1v2h-1zm4 0h1v2h-1zm4 0h1v2h-1zm5 0h1v2h-1zm4 0h1v2h-1zm4 0h1v2h-1zm4 0h1v2h-1zm5 0h1v2h-1zm3 0h1v2h-1zm5 0h1v2h-1zm4 0h1v2h-1zm5 0h1v2h-1zm3 0h1v2h-1zm5 0h1v2h-1zm4 0h1v2h-1zm4 0h1v2h-1zm4 0h1v2h-1zm5 0h1v2h-1zm4 0h1v2h-1zm4 0h1v2h-1zm4 0h1v2h-1zm5 0h1v2h-1zm3 0h1v2h-1zm5 0h1v2h-1zm4 0h1v2h-1zm5 0h1v2h-1zm3 0h1v2h-1zm5 0h1v2h-1zm4 0h1v2h-1zM11 546h1v2h-1zm4 0h1v2h-1zm5 0h1v2h-1zm3 0h1v2h-1zm5 0h1v2h-1zm4 0h1v2h-1zm5 0h1v2h-1zm3 0h1v2h-1zm5 0h1v2h-1zm4 0h1v2h-1zm5 0h1v2h-1zm3 0h1v2h-1zm5 0h1v2h-1zm4 0h1v2h-1zm4 0h1v2h-1zm4 0h1v2h-1zm5 0h1v2h-1zm4 0h1v2h-1zm4 0h1v2h-1zm4 0h1v2h-1zm5 0h1v2h-1zm3 0h1v2h-1zm5 0h1v2h-1zm4 0h1v2h-1zm5 0h1v2h-1zm3 0h1v2h-1zm5 0h1v2h-1zm4 0h1v2h-1zm4 0h1v2h-1zm4 0h1v2h-1zm5 0h1v2h-1zm4 0h1v2h-1zm4 0h1v2h-1zm4 0h1v2h-1zm5 0h1v2h-1zm3 0h1v2h-1zm5 0h1v2h-1zm4 0h1v2h-1zm5 0h1v2h-1zm3 0h1v2h-1zm5 0h1v2h-1zm4 0h1v2h-1zm4 0h1v2h-1zm4 0h1v2h-1zm5 0h1v2h-1zm4 0h1v2h-1zm4 0h1v2h-1zm4 0h1v2h-1zm5 0h1v2h-1zm3 0h1v2h-1zm5 0h1v2h-1zm4 0h1v2h-1zm5 0h1v2h-1zm3 0h1v2h-1zm5 0h1v2h-1zm4 0h1v2h-1zm4 0h1v2h-1zm4 0h1v2h-1zm5 0h1v2h-1zm4 0h1v2h-1zm4 0h1v2h-1zm4 0h1v2h-1zm5 0h1v2h-1zm3 0h1v2h-1zm5 0h1v2h-1zm4 0h1v2h-1zm5 0h1v2h-1zm3 0h1v2h-1zm5 0h1v2h-1zm4 0h1v2h-1zm5 0h1v2h-1zm3 0h1v2h-1zm5 0h1v2h-1zm4 0h1v2h-1zm4 0h1v2h-1zm4 0h1v2h-1zm5 0h1v2h-1zm3 0h1v2h-1zm5 0h1v2h-1zm4 0h1v2h-1zm5 0h1v2h-1zm3 0h1v2h-1zm5 0h1v2h-1zm4 0h1v2h-1zm5 0h1v2h-1zm3 0h1v2h-1zm5 0h1v2h-1zm4 0h1v2h-1zm4 0h1v2h-1zm4 0h1v2h-1zm5 0h1v2h-1zm4 0h1v2h-1zm4 0h1v2h-1zm4 0h1v2h-1zm5 0h1v2h-1zm3 0h1v2h-1zm5 0h1v2h-1zm4 0h1v2h-1zm5 0h1v2h-1zm3 0h1v2h-1zm5 0h1v2h-1zm4 0h1v2h-1zm4 0h1v2h-1zm4 0h1v2h-1zm5 0h1v2h-1zm4 0h1v2h-1zm4 0h1v2h-1zm4 0h1v2h-1zm5 0h1v2h-1zm3 0h1v2h-1zm5 0h1v2h-1zm4 0h1v2h-1zm5 0h1v2h-1zm3 0h1v2h-1zm5 0h1v2h-1zm4 0h1v2h-1zm4 0h1v2h-1zm4 0h1v2h-1zm5 0h1v2h-1zm4 0h1v2h-1zm4 0h1v2h-1zm4 0h1v2h-1zm5 0h1v2h-1zm3 0h1v2h-1zm5 0h1v2h-1zm4 0h1v2h-1zm5 0h1v2h-1zm3 0h1v2h-1zm5 0h1v2h-1zm4 0h1v2h-1zm4 0h1v2h-1zm4 0h1v2h-1zm5 0h1v2h-1zm4 0h1v2h-1zm4 0h1v2h-1zm4 0h1v2h-1zm5 0h1v2h-1zm3 0h1v2h-1zm5 0h1v2h-1zm4 0h1v2h-1zm5 0h1v2h-1zm3 0h1v2h-1zm5 0h1v2h-1zm4 0h1v2h-1zM11 550h1v2h-1zm4 0h1v2h-1zm5 0h1v2h-1zm3 0h1v2h-1zm5 0h1v2h-1zm4 0h1v2h-1zm5 0h1v2h-1zm3 0h1v2h-1zm5 0h1v2h-1zm4 0h1v2h-1zm5 0h1v2h-1zm3 0h1v2h-1zm5 0h1v2h-1zm4 0h1v2h-1zm4 0h1v2h-1zm4 0h1v2h-1zm5 0h1v2h-1zm4 0h1v2h-1zm4 0h1v2h-1zm4 0h1v2h-1zm5 0h1v2h-1zm3 0h1v2h-1zm5 0h1v2h-1zm4 0h1v2h-1zm5 0h1v2h-1zm3 0h1v2h-1zm5 0h1v2h-1zm4 0h1v2h-1zm4 0h1v2h-1zm4 0h1v2h-1zm5 0h1v2h-1zm4 0h1v2h-1zm4 0h1v2h-1zm4 0h1v2h-1zm5 0h1v2h-1zm3 0h1v2h-1zm5 0h1v2h-1zm4 0h1v2h-1zm5 0h1v2h-1zm3 0h1v2h-1zm5 0h1v2h-1zm4 0h1v2h-1zm4 0h1v2h-1zm4 0h1v2h-1zm5 0h1v2h-1zm4 0h1v2h-1zm4 0h1v2h-1zm4 0h1v2h-1zm5 0h1v2h-1zm3 0h1v2h-1zm5 0h1v2h-1zm4 0h1v2h-1zm5 0h1v2h-1zm3 0h1v2h-1zm5 0h1v2h-1zm4 0h1v2h-1zm4 0h1v2h-1zm4 0h1v2h-1zm5 0h1v2h-1zm4 0h1v2h-1zm4 0h1v2h-1zm4 0h1v2h-1zm5 0h1v2h-1zm3 0h1v2h-1zm5 0h1v2h-1zm4 0h1v2h-1zm5 0h1v2h-1zm3 0h1v2h-1zm5 0h1v2h-1zm4 0h1v2h-1zm5 0h1v2h-1zm3 0h1v2h-1zm5 0h1v2h-1zm4 0h1v2h-1zm4 0h1v2h-1zm4 0h1v2h-1zm5 0h1v2h-1zm3 0h1v2h-1zm5 0h1v2h-1zm4 0h1v2h-1zm5 0h1v2h-1zm3 0h1v2h-1zm5 0h1v2h-1zm4 0h1v2h-1zm5 0h1v2h-1zm3 0h1v2h-1zm5 0h1v2h-1zm4 0h1v2h-1zm4 0h1v2h-1zm4 0h1v2h-1zm5 0h1v2h-1zm4 0h1v2h-1zm4 0h1v2h-1zm4 0h1v2h-1zm5 0h1v2h-1zm3 0h1v2h-1zm5 0h1v2h-1zm4 0h1v2h-1zm5 0h1v2h-1zm3 0h1v2h-1zm5 0h1v2h-1zm4 0h1v2h-1zm4 0h1v2h-1zm4 0h1v2h-1zm5 0h1v2h-1zm4 0h1v2h-1zm4 0h1v2h-1zm4 0h1v2h-1zm5 0h1v2h-1zm3 0h1v2h-1zm5 0h1v2h-1zm4 0h1v2h-1zm5 0h1v2h-1zm3 0h1v2h-1zm5 0h1v2h-1zm4 0h1v2h-1zm4 0h1v2h-1zm4 0h1v2h-1zm5 0h1v2h-1zm4 0h1v2h-1zm4 0h1v2h-1zm4 0h1v2h-1zm5 0h1v2h-1zm3 0h1v2h-1zm5 0h1v2h-1zm4 0h1v2h-1zm5 0h1v2h-1zm3 0h1v2h-1zm5 0h1v2h-1zm4 0h1v2h-1zm4 0h1v2h-1zm4 0h1v2h-1zm5 0h1v2h-1zm4 0h1v2h-1zm4 0h1v2h-1zm4 0h1v2h-1zm5 0h1v2h-1zm3 0h1v2h-1zm5 0h1v2h-1zm4 0h1v2h-1zm5 0h1v2h-1zm3 0h1v2h-1zm5 0h1v2h-1zm4 0h1v2h-1zM11 554h1v2h-1zm4 0h1v2h-1zm5 0h1v2h-1zm3 0h1v2h-1zm5 0h1v2h-1zm4 0h1v2h-1zm5 0h1v2h-1zm3 0h1v2h-1zm5 0h1v2h-1zm4 0h1v2h-1zm5 0h1v2h-1zm3 0h1v2h-1zm5 0h1v2h-1zm4 0h1v2h-1zm4 0h1v2h-1zm4 0h1v2h-1zm5 0h1v2h-1zm4 0h1v2h-1zm4 0h1v2h-1zm4 0h1v2h-1zm5 0h1v2h-1zm3 0h1v2h-1zm5 0h1v2h-1zm4 0h1v2h-1zm5 0h1v2h-1zm3 0h1v2h-1zm5 0h1v2h-1zm4 0h1v2h-1zm4 0h1v2h-1zm4 0h1v2h-1zm5 0h1v2h-1zm4 0h1v2h-1zm4 0h1v2h-1zm4 0h1v2h-1zm5 0h1v2h-1zm3 0h1v2h-1zm5 0h1v2h-1zm4 0h1v2h-1zm5 0h1v2h-1zm3 0h1v2h-1zm5 0h1v2h-1zm4 0h1v2h-1zm4 0h1v2h-1zm4 0h1v2h-1zm5 0h1v2h-1zm4 0h1v2h-1zm4 0h1v2h-1zm4 0h1v2h-1zm5 0h1v2h-1zm3 0h1v2h-1zm5 0h1v2h-1zm4 0h1v2h-1zm5 0h1v2h-1zm3 0h1v2h-1zm5 0h1v2h-1zm4 0h1v2h-1zm4 0h1v2h-1zm4 0h1v2h-1zm5 0h1v2h-1zm4 0h1v2h-1zm4 0h1v2h-1zm4 0h1v2h-1zm5 0h1v2h-1zm3 0h1v2h-1zm5 0h1v2h-1zm4 0h1v2h-1zm5 0h1v2h-1zm3 0h1v2h-1zm5 0h1v2h-1zm4 0h1v2h-1zm5 0h1v2h-1zm3 0h1v2h-1zm5 0h1v2h-1zm4 0h1v2h-1zm4 0h1v2h-1zm4 0h1v2h-1zm5 0h1v2h-1zm3 0h1v2h-1zm5 0h1v2h-1zm4 0h1v2h-1zm5 0h1v2h-1zm3 0h1v2h-1zm5 0h1v2h-1zm4 0h1v2h-1zm5 0h1v2h-1zm3 0h1v2h-1zm5 0h1v2h-1zm4 0h1v2h-1zm4 0h1v2h-1zm4 0h1v2h-1zm5 0h1v2h-1zm4 0h1v2h-1zm4 0h1v2h-1zm4 0h1v2h-1zm5 0h1v2h-1zm3 0h1v2h-1zm5 0h1v2h-1zm4 0h1v2h-1zm5 0h1v2h-1zm3 0h1v2h-1zm5 0h1v2h-1zm4 0h1v2h-1zm4 0h1v2h-1zm4 0h1v2h-1zm5 0h1v2h-1zm4 0h1v2h-1zm4 0h1v2h-1zm4 0h1v2h-1zm5 0h1v2h-1zm3 0h1v2h-1zm5 0h1v2h-1zm4 0h1v2h-1zm5 0h1v2h-1zm3 0h1v2h-1zm5 0h1v2h-1zm4 0h1v2h-1zm4 0h1v2h-1zm4 0h1v2h-1zm5 0h1v2h-1zm4 0h1v2h-1zm4 0h1v2h-1zm4 0h1v2h-1zm5 0h1v2h-1zm3 0h1v2h-1zm5 0h1v2h-1zm4 0h1v2h-1zm5 0h1v2h-1zm3 0h1v2h-1zm5 0h1v2h-1zm4 0h1v2h-1zm4 0h1v2h-1zm4 0h1v2h-1zm5 0h1v2h-1zm4 0h1v2h-1zm4 0h1v2h-1zm4 0h1v2h-1zm5 0h1v2h-1zm3 0h1v2h-1zm5 0h1v2h-1zm4 0h1v2h-1zm5 0h1v2h-1zm3 0h1v2h-1zm5 0h1v2h-1zm4 0h1v2h-1zM11 558h1v2h-1zm4 0h1v2h-1zm5 0h1v2h-1zm3 0h1v2h-1zm5 0h1v2h-1zm4 0h1v2h-1zm5 0h1v2h-1zm3 0h1v2h-1zm5 0h1v2h-1zm4 0h1v2h-1zm5 0h1v2h-1zm3 0h1v2h-1zm5 0h1v2h-1zm4 0h1v2h-1zm4 0h1v2h-1zm4 0h1v2h-1zm5 0h1v2h-1zm4 0h1v2h-1zm4 0h1v2h-1zm4 0h1v2h-1zm5 0h1v2h-1zm3 0h1v2h-1zm5 0h1v2h-1zm4 0h1v2h-1zm5 0h1v2h-1zm3 0h1v2h-1zm5 0h1v2h-1zm4 0h1v2h-1zm4 0h1v2h-1zm4 0h1v2h-1zm5 0h1v2h-1zm4 0h1v2h-1zm4 0h1v2h-1zm4 0h1v2h-1zm5 0h1v2h-1zm3 0h1v2h-1zm5 0h1v2h-1zm4 0h1v2h-1zm5 0h1v2h-1zm3 0h1v2h-1zm5 0h1v2h-1zm4 0h1v2h-1zm4 0h1v2h-1zm4 0h1v2h-1zm5 0h1v2h-1zm4 0h1v2h-1zm4 0h1v2h-1zm4 0h1v2h-1zm5 0h1v2h-1zm3 0h1v2h-1zm5 0h1v2h-1zm4 0h1v2h-1zm5 0h1v2h-1zm3 0h1v2h-1zm5 0h1v2h-1zm4 0h1v2h-1zm4 0h1v2h-1zm4 0h1v2h-1zm5 0h1v2h-1zm4 0h1v2h-1zm4 0h1v2h-1zm4 0h1v2h-1zm5 0h1v2h-1zm3 0h1v2h-1zm5 0h1v2h-1zm4 0h1v2h-1zm5 0h1v2h-1zm3 0h1v2h-1zm5 0h1v2h-1zm4 0h1v2h-1zm5 0h1v2h-1zm3 0h1v2h-1zm5 0h1v2h-1zm4 0h1v2h-1zm4 0h1v2h-1zm4 0h1v2h-1zm5 0h1v2h-1zm3 0h1v2h-1zm5 0h1v2h-1zm4 0h1v2h-1zm5 0h1v2h-1zm3 0h1v2h-1zm5 0h1v2h-1zm4 0h1v2h-1zm5 0h1v2h-1zm3 0h1v2h-1zm5 0h1v2h-1zm4 0h1v2h-1zm4 0h1v2h-1zm4 0h1v2h-1zm5 0h1v2h-1zm4 0h1v2h-1zm4 0h1v2h-1zm4 0h1v2h-1zm5 0h1v2h-1zm3 0h1v2h-1zm5 0h1v2h-1zm4 0h1v2h-1zm5 0h1v2h-1zm3 0h1v2h-1zm5 0h1v2h-1zm4 0h1v2h-1zm4 0h1v2h-1zm4 0h1v2h-1zm5 0h1v2h-1zm4 0h1v2h-1zm4 0h1v2h-1zm4 0h1v2h-1zm5 0h1v2h-1zm3 0h1v2h-1zm5 0h1v2h-1zm4 0h1v2h-1zm5 0h1v2h-1zm3 0h1v2h-1zm5 0h1v2h-1zm4 0h1v2h-1zm4 0h1v2h-1zm4 0h1v2h-1zm5 0h1v2h-1zm4 0h1v2h-1zm4 0h1v2h-1zm4 0h1v2h-1zm5 0h1v2h-1zm3 0h1v2h-1zm5 0h1v2h-1zm4 0h1v2h-1zm5 0h1v2h-1zm3 0h1v2h-1zm5 0h1v2h-1zm4 0h1v2h-1zm4 0h1v2h-1zm4 0h1v2h-1zm5 0h1v2h-1zm4 0h1v2h-1zm4 0h1v2h-1zm4 0h1v2h-1zm5 0h1v2h-1zm3 0h1v2h-1zm5 0h1v2h-1zm4 0h1v2h-1zm5 0h1v2h-1zm3 0h1v2h-1zm5 0h1v2h-1zm4 0h1v2h-1zM11 563h1v2h-1zm4 0h1v2h-1zm5 0h1v2h-1zm3 0h1v2h-1zm5 0h1v2h-1zm4 0h1v2h-1zm5 0h1v2h-1zm3 0h1v2h-1zm5 0h1v2h-1zm4 0h1v2h-1zm5 0h1v2h-1zm3 0h1v2h-1zm5 0h1v2h-1zm4 0h1v2h-1zm4 0h1v2h-1zm4 0h1v2h-1zm5 0h1v2h-1zm4 0h1v2h-1zm4 0h1v2h-1zm4 0h1v2h-1zm5 0h1v2h-1zm3 0h1v2h-1zm5 0h1v2h-1zm4 0h1v2h-1zm5 0h1v2h-1zm3 0h1v2h-1zm5 0h1v2h-1zm4 0h1v2h-1zm4 0h1v2h-1zm4 0h1v2h-1zm5 0h1v2h-1zm4 0h1v2h-1zm4 0h1v2h-1zm4 0h1v2h-1zm5 0h1v2h-1zm3 0h1v2h-1zm5 0h1v2h-1zm4 0h1v2h-1zm5 0h1v2h-1zm3 0h1v2h-1zm5 0h1v2h-1zm4 0h1v2h-1zm4 0h1v2h-1zm4 0h1v2h-1zm5 0h1v2h-1zm4 0h1v2h-1zm4 0h1v2h-1zm4 0h1v2h-1zm5 0h1v2h-1zm3 0h1v2h-1zm5 0h1v2h-1zm4 0h1v2h-1zm5 0h1v2h-1zm3 0h1v2h-1zm5 0h1v2h-1zm4 0h1v2h-1zm4 0h1v2h-1zm4 0h1v2h-1zm5 0h1v2h-1zm4 0h1v2h-1zm4 0h1v2h-1zm4 0h1v2h-1zm5 0h1v2h-1zm3 0h1v2h-1zm5 0h1v2h-1zm4 0h1v2h-1zm5 0h1v2h-1zm3 0h1v2h-1zm5 0h1v2h-1zm4 0h1v2h-1zm5 0h1v2h-1zm3 0h1v2h-1zm5 0h1v2h-1zm4 0h1v2h-1zm4 0h1v2h-1zm4 0h1v2h-1zm5 0h1v2h-1zm3 0h1v2h-1zm5 0h1v2h-1zm4 0h1v2h-1zm5 0h1v2h-1zm3 0h1v2h-1zm5 0h1v2h-1zm4 0h1v2h-1zm5 0h1v2h-1zm3 0h1v2h-1zm5 0h1v2h-1zm4 0h1v2h-1zm4 0h1v2h-1zm4 0h1v2h-1zm5 0h1v2h-1zm4 0h1v2h-1zm4 0h1v2h-1zm4 0h1v2h-1zm5 0h1v2h-1zm3 0h1v2h-1zm5 0h1v2h-1zm4 0h1v2h-1zm5 0h1v2h-1zm3 0h1v2h-1zm5 0h1v2h-1zm4 0h1v2h-1zm4 0h1v2h-1zm4 0h1v2h-1zm5 0h1v2h-1zm4 0h1v2h-1zm4 0h1v2h-1zm4 0h1v2h-1zm5 0h1v2h-1zm3 0h1v2h-1zm5 0h1v2h-1zm4 0h1v2h-1zm5 0h1v2h-1zm3 0h1v2h-1zm5 0h1v2h-1zm4 0h1v2h-1zm4 0h1v2h-1zm4 0h1v2h-1zm5 0h1v2h-1zm4 0h1v2h-1zm4 0h1v2h-1zm4 0h1v2h-1zm5 0h1v2h-1zm3 0h1v2h-1zm5 0h1v2h-1zm4 0h1v2h-1zm5 0h1v2h-1zm3 0h1v2h-1zm5 0h1v2h-1zm4 0h1v2h-1zm4 0h1v2h-1zm4 0h1v2h-1zm5 0h1v2h-1zm4 0h1v2h-1zm4 0h1v2h-1zm4 0h1v2h-1zm5 0h1v2h-1zm3 0h1v2h-1zm5 0h1v2h-1zm4 0h1v2h-1zm5 0h1v2h-1zm3 0h1v2h-1zm5 0h1v2h-1zm4 0h1v2h-1zM11 567h1v2h-1zm4 0h1v2h-1zm5 0h1v2h-1zm3 0h1v2h-1zm5 0h1v2h-1zm4 0h1v2h-1zm5 0h1v2h-1zm3 0h1v2h-1zm5 0h1v2h-1zm4 0h1v2h-1zm5 0h1v2h-1zm3 0h1v2h-1zm5 0h1v2h-1zm4 0h1v2h-1zm4 0h1v2h-1zm4 0h1v2h-1zm5 0h1v2h-1zm4 0h1v2h-1zm4 0h1v2h-1zm4 0h1v2h-1zm5 0h1v2h-1zm3 0h1v2h-1zm5 0h1v2h-1zm4 0h1v2h-1zm5 0h1v2h-1zm3 0h1v2h-1zm5 0h1v2h-1zm4 0h1v2h-1zm4 0h1v2h-1zm4 0h1v2h-1zm5 0h1v2h-1zm4 0h1v2h-1zm4 0h1v2h-1zm4 0h1v2h-1zm5 0h1v2h-1zm3 0h1v2h-1zm5 0h1v2h-1zm4 0h1v2h-1zm5 0h1v2h-1zm3 0h1v2h-1zm5 0h1v2h-1zm4 0h1v2h-1zm4 0h1v2h-1zm4 0h1v2h-1zm5 0h1v2h-1zm4 0h1v2h-1zm4 0h1v2h-1zm4 0h1v2h-1zm5 0h1v2h-1zm3 0h1v2h-1zm5 0h1v2h-1zm4 0h1v2h-1zm5 0h1v2h-1zm3 0h1v2h-1zm5 0h1v2h-1zm4 0h1v2h-1zm4 0h1v2h-1zm4 0h1v2h-1zm5 0h1v2h-1zm4 0h1v2h-1zm4 0h1v2h-1zm4 0h1v2h-1zm5 0h1v2h-1zm3 0h1v2h-1zm5 0h1v2h-1zm4 0h1v2h-1zm5 0h1v2h-1zm3 0h1v2h-1zm5 0h1v2h-1zm4 0h1v2h-1zm5 0h1v2h-1zm3 0h1v2h-1zm5 0h1v2h-1zm4 0h1v2h-1zm4 0h1v2h-1zm4 0h1v2h-1zm5 0h1v2h-1zm3 0h1v2h-1zm5 0h1v2h-1zm4 0h1v2h-1zm5 0h1v2h-1zm3 0h1v2h-1zm5 0h1v2h-1zm4 0h1v2h-1zm5 0h1v2h-1zm3 0h1v2h-1zm5 0h1v2h-1zm4 0h1v2h-1zm4 0h1v2h-1zm4 0h1v2h-1zm5 0h1v2h-1zm4 0h1v2h-1zm4 0h1v2h-1zm4 0h1v2h-1zm5 0h1v2h-1zm3 0h1v2h-1zm5 0h1v2h-1zm4 0h1v2h-1zm5 0h1v2h-1zm3 0h1v2h-1zm5 0h1v2h-1zm4 0h1v2h-1zm4 0h1v2h-1zm4 0h1v2h-1zm5 0h1v2h-1zm4 0h1v2h-1zm4 0h1v2h-1zm4 0h1v2h-1zm5 0h1v2h-1zm3 0h1v2h-1zm5 0h1v2h-1zm4 0h1v2h-1zm5 0h1v2h-1zm3 0h1v2h-1zm5 0h1v2h-1zm4 0h1v2h-1zm4 0h1v2h-1zm4 0h1v2h-1zm5 0h1v2h-1zm4 0h1v2h-1zm4 0h1v2h-1zm4 0h1v2h-1zm5 0h1v2h-1zm3 0h1v2h-1zm5 0h1v2h-1zm4 0h1v2h-1zm5 0h1v2h-1zm3 0h1v2h-1zm5 0h1v2h-1zm4 0h1v2h-1zm4 0h1v2h-1zm4 0h1v2h-1zm5 0h1v2h-1zm4 0h1v2h-1zm4 0h1v2h-1zm4 0h1v2h-1zm5 0h1v2h-1zm3 0h1v2h-1zm5 0h1v2h-1zm4 0h1v2h-1zm5 0h1v2h-1zm3 0h1v2h-1zm5 0h1v2h-1zm4 0h1v2h-1zM11 571h1v2h-1zm4 0h1v2h-1zm5 0h1v2h-1zm3 0h1v2h-1zm5 0h1v2h-1zm4 0h1v2h-1zm5 0h1v2h-1zm3 0h1v2h-1zm5 0h1v2h-1zm4 0h1v2h-1zm5 0h1v2h-1zm3 0h1v2h-1zm5 0h1v2h-1zm4 0h1v2h-1zm4 0h1v2h-1zm4 0h1v2h-1zm5 0h1v2h-1zm4 0h1v2h-1zm4 0h1v2h-1zm4 0h1v2h-1zm5 0h1v2h-1zm3 0h1v2h-1zm5 0h1v2h-1zm4 0h1v2h-1zm5 0h1v2h-1zm3 0h1v2h-1zm5 0h1v2h-1zm4 0h1v2h-1zm4 0h1v2h-1zm4 0h1v2h-1zm5 0h1v2h-1zm4 0h1v2h-1zm4 0h1v2h-1zm4 0h1v2h-1zm5 0h1v2h-1zm3 0h1v2h-1zm5 0h1v2h-1zm4 0h1v2h-1zm5 0h1v2h-1zm3 0h1v2h-1zm5 0h1v2h-1zm4 0h1v2h-1zm4 0h1v2h-1zm4 0h1v2h-1zm5 0h1v2h-1zm4 0h1v2h-1zm4 0h1v2h-1zm4 0h1v2h-1zm5 0h1v2h-1zm3 0h1v2h-1zm5 0h1v2h-1zm4 0h1v2h-1zm5 0h1v2h-1zm3 0h1v2h-1zm5 0h1v2h-1zm4 0h1v2h-1zm4 0h1v2h-1zm4 0h1v2h-1zm5 0h1v2h-1zm4 0h1v2h-1zm4 0h1v2h-1zm4 0h1v2h-1zm5 0h1v2h-1zm3 0h1v2h-1zm5 0h1v2h-1zm4 0h1v2h-1zm5 0h1v2h-1zm3 0h1v2h-1zm5 0h1v2h-1zm4 0h1v2h-1zm5 0h1v2h-1zm3 0h1v2h-1zm5 0h1v2h-1zm4 0h1v2h-1zm4 0h1v2h-1zm4 0h1v2h-1zm5 0h1v2h-1zm3 0h1v2h-1zm5 0h1v2h-1zm4 0h1v2h-1zm5 0h1v2h-1zm3 0h1v2h-1zm5 0h1v2h-1zm4 0h1v2h-1zm5 0h1v2h-1zm3 0h1v2h-1zm5 0h1v2h-1zm4 0h1v2h-1zm4 0h1v2h-1zm4 0h1v2h-1zm5 0h1v2h-1zm4 0h1v2h-1zm4 0h1v2h-1zm4 0h1v2h-1zm5 0h1v2h-1zm3 0h1v2h-1zm5 0h1v2h-1zm4 0h1v2h-1zm5 0h1v2h-1zm3 0h1v2h-1zm5 0h1v2h-1zm4 0h1v2h-1zm4 0h1v2h-1zm4 0h1v2h-1zm5 0h1v2h-1zm4 0h1v2h-1zm4 0h1v2h-1zm4 0h1v2h-1zm5 0h1v2h-1zm3 0h1v2h-1zm5 0h1v2h-1zm4 0h1v2h-1zm5 0h1v2h-1zm3 0h1v2h-1zm5 0h1v2h-1zm4 0h1v2h-1zm4 0h1v2h-1zm4 0h1v2h-1zm5 0h1v2h-1zm4 0h1v2h-1zm4 0h1v2h-1zm4 0h1v2h-1zm5 0h1v2h-1zm3 0h1v2h-1zm5 0h1v2h-1zm4 0h1v2h-1zm5 0h1v2h-1zm3 0h1v2h-1zm5 0h1v2h-1zm4 0h1v2h-1zm4 0h1v2h-1zm4 0h1v2h-1zm5 0h1v2h-1zm4 0h1v2h-1zm4 0h1v2h-1zm4 0h1v2h-1zm5 0h1v2h-1zm3 0h1v2h-1zm5 0h1v2h-1zm4 0h1v2h-1zm5 0h1v2h-1zm3 0h1v2h-1zm5 0h1v2h-1zm4 0h1v2h-1zM11 575h1v1h-1zm4 0h1v1h-1zm5 0h1v1h-1zm3 0h1v1h-1zm5 0h1v1h-1zm4 0h1v1h-1zm5 0h1v1h-1zm3 0h1v1h-1zm5 0h1v1h-1zm4 0h1v1h-1zm5 0h1v1h-1zm3 0h1v1h-1zm5 0h1v1h-1zm4 0h1v1h-1zm4 0h1v1h-1zm4 0h1v1h-1zm5 0h1v1h-1zm4 0h1v1h-1zm4 0h1v1h-1zm4 0h1v1h-1zm5 0h1v1h-1zm3 0h1v1h-1zm5 0h1v1h-1zm4 0h1v1h-1zm5 0h1v1h-1zm3 0h1v1h-1zm5 0h1v1h-1zm4 0h1v1h-1zm4 0h1v1h-1zm4 0h1v1h-1zm5 0h1v1h-1zm4 0h1v1h-1zm4 0h1v1h-1zm4 0h1v1h-1zm5 0h1v1h-1zm3 0h1v1h-1zm5 0h1v1h-1zm4 0h1v1h-1zm5 0h1v1h-1zm3 0h1v1h-1zm5 0h1v1h-1zm4 0h1v1h-1zm4 0h1v1h-1zm4 0h1v1h-1zm5 0h1v1h-1zm4 0h1v1h-1zm4 0h1v1h-1zm4 0h1v1h-1zm5 0h1v1h-1zm3 0h1v1h-1zm5 0h1v1h-1zm4 0h1v1h-1zm5 0h1v1h-1zm3 0h1v1h-1zm5 0h1v1h-1zm4 0h1v1h-1zm4 0h1v1h-1zm4 0h1v1h-1zm5 0h1v1h-1zm4 0h1v1h-1zm4 0h1v1h-1zm4 0h1v1h-1zm5 0h1v1h-1zm3 0h1v1h-1zm5 0h1v1h-1zm4 0h1v1h-1zm5 0h1v1h-1zm3 0h1v1h-1zm5 0h1v1h-1zm4 0h1v1h-1zm5 0h1v1h-1zm3 0h1v1h-1zm5 0h1v1h-1zm4 0h1v1h-1zm4 0h1v1h-1zm4 0h1v1h-1zm5 0h1v1h-1zm3 0h1v1h-1zm5 0h1v1h-1zm4 0h1v1h-1zm5 0h1v1h-1zm3 0h1v1h-1zm5 0h1v1h-1zm4 0h1v1h-1zm5 0h1v1h-1zm3 0h1v1h-1zm5 0h1v1h-1zm4 0h1v1h-1zm4 0h1v1h-1zm4 0h1v1h-1zm5 0h1v1h-1zm4 0h1v1h-1zm4 0h1v1h-1zm4 0h1v1h-1zm5 0h1v1h-1zm3 0h1v1h-1zm5 0h1v1h-1zm4 0h1v1h-1zm5 0h1v1h-1zm3 0h1v1h-1zm5 0h1v1h-1zm4 0h1v1h-1zm4 0h1v1h-1zm4 0h1v1h-1zm5 0h1v1h-1zm4 0h1v1h-1zm4 0h1v1h-1zm4 0h1v1h-1zm5 0h1v1h-1zm3 0h1v1h-1zm5 0h1v1h-1zm4 0h1v1h-1zm5 0h1v1h-1zm3 0h1v1h-1zm5 0h1v1h-1zm4 0h1v1h-1zm4 0h1v1h-1zm4 0h1v1h-1zm5 0h1v1h-1zm4 0h1v1h-1zm4 0h1v1h-1zm4 0h1v1h-1zm5 0h1v1h-1zm3 0h1v1h-1zm5 0h1v1h-1zm4 0h1v1h-1zm5 0h1v1h-1zm3 0h1v1h-1zm5 0h1v1h-1zm4 0h1v1h-1zm4 0h1v1h-1zm4 0h1v1h-1zm5 0h1v1h-1zm4 0h1v1h-1zm4 0h1v1h-1zm4 0h1v1h-1zm5 0h1v1h-1zm3 0h1v1h-1zm5 0h1v1h-1zm4 0h1v1h-1zm5 0h1v1h-1zm3 0h1v1h-1zm5 0h1v1h-1zm4 0h1v1h-1zM11 580h1v2h-1zm4 0h1v2h-1zm5 0h1v2h-1zm3 0h1v2h-1zm5 0h1v2h-1zm4 0h1v2h-1zm5 0h1v2h-1zm3 0h1v2h-1zm5 0h1v2h-1zm4 0h1v2h-1zm5 0h1v2h-1zm3 0h1v2h-1zm5 0h1v2h-1zm4 0h1v2h-1zm4 0h1v2h-1zm4 0h1v2h-1zm5 0h1v2h-1zm4 0h1v2h-1zm4 0h1v2h-1zm4 0h1v2h-1zm5 0h1v2h-1zm3 0h1v2h-1zm5 0h1v2h-1zm4 0h1v2h-1zm5 0h1v2h-1zm3 0h1v2h-1zm5 0h1v2h-1zm4 0h1v2h-1zm4 0h1v2h-1zm4 0h1v2h-1zm5 0h1v2h-1zm4 0h1v2h-1zm4 0h1v2h-1zm4 0h1v2h-1zm5 0h1v2h-1zm3 0h1v2h-1zm5 0h1v2h-1zm4 0h1v2h-1zm5 0h1v2h-1zm3 0h1v2h-1zm5 0h1v2h-1zm4 0h1v2h-1zm4 0h1v2h-1zm4 0h1v2h-1zm5 0h1v2h-1zm4 0h1v2h-1zm4 0h1v2h-1zm4 0h1v2h-1zm5 0h1v2h-1zm3 0h1v2h-1zm5 0h1v2h-1zm4 0h1v2h-1zm5 0h1v2h-1zm3 0h1v2h-1zm5 0h1v2h-1zm4 0h1v2h-1zm4 0h1v2h-1zm4 0h1v2h-1zm5 0h1v2h-1zm4 0h1v2h-1zm4 0h1v2h-1zm4 0h1v2h-1zm5 0h1v2h-1zm3 0h1v2h-1zm5 0h1v2h-1zm4 0h1v2h-1zm5 0h1v2h-1zm3 0h1v2h-1zm5 0h1v2h-1zm4 0h1v2h-1zm5 0h1v2h-1zm3 0h1v2h-1zm5 0h1v2h-1zm4 0h1v2h-1zm4 0h1v2h-1zm4 0h1v2h-1zm5 0h1v2h-1zm3 0h1v2h-1zm5 0h1v2h-1zm4 0h1v2h-1zm5 0h1v2h-1zm3 0h1v2h-1zm5 0h1v2h-1zm4 0h1v2h-1zm5 0h1v2h-1zm3 0h1v2h-1zm5 0h1v2h-1zm4 0h1v2h-1zm4 0h1v2h-1zm4 0h1v2h-1zm5 0h1v2h-1zm4 0h1v2h-1zm4 0h1v2h-1zm4 0h1v2h-1zm5 0h1v2h-1zm3 0h1v2h-1zm5 0h1v2h-1zm4 0h1v2h-1zm5 0h1v2h-1zm3 0h1v2h-1zm5 0h1v2h-1zm4 0h1v2h-1zm4 0h1v2h-1zm4 0h1v2h-1zm5 0h1v2h-1zm4 0h1v2h-1zm4 0h1v2h-1zm4 0h1v2h-1zm5 0h1v2h-1zm3 0h1v2h-1zm5 0h1v2h-1zm4 0h1v2h-1zm5 0h1v2h-1zm3 0h1v2h-1zm5 0h1v2h-1zm4 0h1v2h-1zm4 0h1v2h-1zm4 0h1v2h-1zm5 0h1v2h-1zm4 0h1v2h-1zm4 0h1v2h-1zm4 0h1v2h-1zm5 0h1v2h-1zm3 0h1v2h-1zm5 0h1v2h-1zm4 0h1v2h-1zm5 0h1v2h-1zm3 0h1v2h-1zm5 0h1v2h-1zm4 0h1v2h-1zm4 0h1v2h-1zm4 0h1v2h-1zm5 0h1v2h-1zm4 0h1v2h-1zm4 0h1v2h-1zm4 0h1v2h-1zm5 0h1v2h-1zm3 0h1v2h-1zm5 0h1v2h-1zm4 0h1v2h-1zm5 0h1v2h-1zm3 0h1v2h-1zm5 0h1v2h-1zm4 0h1v2h-1zM11 584h1v2h-1zm4 0h1v2h-1zm5 0h1v2h-1zm3 0h1v2h-1zm5 0h1v2h-1zm4 0h1v2h-1zm5 0h1v2h-1zm3 0h1v2h-1zm5 0h1v2h-1zm4 0h1v2h-1zm5 0h1v2h-1zm3 0h1v2h-1zm5 0h1v2h-1zm4 0h1v2h-1zm4 0h1v2h-1zm4 0h1v2h-1zm5 0h1v2h-1zm4 0h1v2h-1zm4 0h1v2h-1zm4 0h1v2h-1zm5 0h1v2h-1zm3 0h1v2h-1zm5 0h1v2h-1zm4 0h1v2h-1zm5 0h1v2h-1zm3 0h1v2h-1zm5 0h1v2h-1zm4 0h1v2h-1zm4 0h1v2h-1zm4 0h1v2h-1zm5 0h1v2h-1zm4 0h1v2h-1zm4 0h1v2h-1zm4 0h1v2h-1zm5 0h1v2h-1zm3 0h1v2h-1zm5 0h1v2h-1zm4 0h1v2h-1zm5 0h1v2h-1zm3 0h1v2h-1zm5 0h1v2h-1zm4 0h1v2h-1zm4 0h1v2h-1zm4 0h1v2h-1zm5 0h1v2h-1zm4 0h1v2h-1zm4 0h1v2h-1zm4 0h1v2h-1zm5 0h1v2h-1zm3 0h1v2h-1zm5 0h1v2h-1zm4 0h1v2h-1zm5 0h1v2h-1zm3 0h1v2h-1zm5 0h1v2h-1zm4 0h1v2h-1zm4 0h1v2h-1zm4 0h1v2h-1zm5 0h1v2h-1zm4 0h1v2h-1zm4 0h1v2h-1zm4 0h1v2h-1zm5 0h1v2h-1zm3 0h1v2h-1zm5 0h1v2h-1zm4 0h1v2h-1zm5 0h1v2h-1zm3 0h1v2h-1zm5 0h1v2h-1zm4 0h1v2h-1zm5 0h1v2h-1zm3 0h1v2h-1zm5 0h1v2h-1zm4 0h1v2h-1zm4 0h1v2h-1zm4 0h1v2h-1zm5 0h1v2h-1zm3 0h1v2h-1zm5 0h1v2h-1zm4 0h1v2h-1zm5 0h1v2h-1zm3 0h1v2h-1zm5 0h1v2h-1zm4 0h1v2h-1zm5 0h1v2h-1zm3 0h1v2h-1zm5 0h1v2h-1zm4 0h1v2h-1zm4 0h1v2h-1zm4 0h1v2h-1zm5 0h1v2h-1zm4 0h1v2h-1zm4 0h1v2h-1zm4 0h1v2h-1zm5 0h1v2h-1zm3 0h1v2h-1zm5 0h1v2h-1zm4 0h1v2h-1zm5 0h1v2h-1zm3 0h1v2h-1zm5 0h1v2h-1zm4 0h1v2h-1zm4 0h1v2h-1zm4 0h1v2h-1zm5 0h1v2h-1zm4 0h1v2h-1zm4 0h1v2h-1zm4 0h1v2h-1zm5 0h1v2h-1zm3 0h1v2h-1zm5 0h1v2h-1zm4 0h1v2h-1zm5 0h1v2h-1zm3 0h1v2h-1zm5 0h1v2h-1zm4 0h1v2h-1zm4 0h1v2h-1zm4 0h1v2h-1zm5 0h1v2h-1zm4 0h1v2h-1zm4 0h1v2h-1zm4 0h1v2h-1zm5 0h1v2h-1zm3 0h1v2h-1zm5 0h1v2h-1zm4 0h1v2h-1zm5 0h1v2h-1zm3 0h1v2h-1zm5 0h1v2h-1zm4 0h1v2h-1zm4 0h1v2h-1zm4 0h1v2h-1zm5 0h1v2h-1zm4 0h1v2h-1zm4 0h1v2h-1zm4 0h1v2h-1zm5 0h1v2h-1zm3 0h1v2h-1zm5 0h1v2h-1zm4 0h1v2h-1zm5 0h1v2h-1zm3 0h1v2h-1zm5 0h1v2h-1zm4 0h1v2h-1zM11 588h1v2h-1zm4 0h1v2h-1zm5 0h1v2h-1zm3 0h1v2h-1zm5 0h1v2h-1zm4 0h1v2h-1zm5 0h1v2h-1zm3 0h1v2h-1zm5 0h1v2h-1zm4 0h1v2h-1zm5 0h1v2h-1zm3 0h1v2h-1zm5 0h1v2h-1zm4 0h1v2h-1zm4 0h1v2h-1zm4 0h1v2h-1zm5 0h1v2h-1zm4 0h1v2h-1zm4 0h1v2h-1zm4 0h1v2h-1zm5 0h1v2h-1zm3 0h1v2h-1zm5 0h1v2h-1zm4 0h1v2h-1zm5 0h1v2h-1zm3 0h1v2h-1zm5 0h1v2h-1zm4 0h1v2h-1zm4 0h1v2h-1zm4 0h1v2h-1zm5 0h1v2h-1zm4 0h1v2h-1zm4 0h1v2h-1zm4 0h1v2h-1zm5 0h1v2h-1zm3 0h1v2h-1zm5 0h1v2h-1zm4 0h1v2h-1zm5 0h1v2h-1zm3 0h1v2h-1zm5 0h1v2h-1zm4 0h1v2h-1zm4 0h1v2h-1zm4 0h1v2h-1zm5 0h1v2h-1zm4 0h1v2h-1zm4 0h1v2h-1zm4 0h1v2h-1zm5 0h1v2h-1zm3 0h1v2h-1zm5 0h1v2h-1zm4 0h1v2h-1zm5 0h1v2h-1zm3 0h1v2h-1zm5 0h1v2h-1zm4 0h1v2h-1zm4 0h1v2h-1zm4 0h1v2h-1zm5 0h1v2h-1zm4 0h1v2h-1zm4 0h1v2h-1zm4 0h1v2h-1zm5 0h1v2h-1zm3 0h1v2h-1zm5 0h1v2h-1zm4 0h1v2h-1zm5 0h1v2h-1zm3 0h1v2h-1zm5 0h1v2h-1zm4 0h1v2h-1zm5 0h1v2h-1zm3 0h1v2h-1zm5 0h1v2h-1zm4 0h1v2h-1zm4 0h1v2h-1zm4 0h1v2h-1zm5 0h1v2h-1zm3 0h1v2h-1zm5 0h1v2h-1zm4 0h1v2h-1zm5 0h1v2h-1zm3 0h1v2h-1zm5 0h1v2h-1zm4 0h1v2h-1zm5 0h1v2h-1zm3 0h1v2h-1zm5 0h1v2h-1zm4 0h1v2h-1zm4 0h1v2h-1zm4 0h1v2h-1zm5 0h1v2h-1zm4 0h1v2h-1zm4 0h1v2h-1zm4 0h1v2h-1zm5 0h1v2h-1zm3 0h1v2h-1zm5 0h1v2h-1zm4 0h1v2h-1zm5 0h1v2h-1zm3 0h1v2h-1zm5 0h1v2h-1zm4 0h1v2h-1zm4 0h1v2h-1zm4 0h1v2h-1zm5 0h1v2h-1zm4 0h1v2h-1zm4 0h1v2h-1zm4 0h1v2h-1zm5 0h1v2h-1zm3 0h1v2h-1zm5 0h1v2h-1zm4 0h1v2h-1zm5 0h1v2h-1zm3 0h1v2h-1zm5 0h1v2h-1zm4 0h1v2h-1zm4 0h1v2h-1zm4 0h1v2h-1zm5 0h1v2h-1zm4 0h1v2h-1zm4 0h1v2h-1zm4 0h1v2h-1zm5 0h1v2h-1zm3 0h1v2h-1zm5 0h1v2h-1zm4 0h1v2h-1zm5 0h1v2h-1zm3 0h1v2h-1zm5 0h1v2h-1zm4 0h1v2h-1zm4 0h1v2h-1zm4 0h1v2h-1zm5 0h1v2h-1zm4 0h1v2h-1zm4 0h1v2h-1zm4 0h1v2h-1zm5 0h1v2h-1zm3 0h1v2h-1zm5 0h1v2h-1zm4 0h1v2h-1zm5 0h1v2h-1zm3 0h1v2h-1zm5 0h1v2h-1zm4 0h1v2h-1zM11 591h1v2h-1zm4 0h1v2h-1zm5 0h1v2h-1zm3 0h1v2h-1zm5 0h1v2h-1zm4 0h1v2h-1zm5 0h1v2h-1zm3 0h1v2h-1zm5 0h1v2h-1zm4 0h1v2h-1zm5 0h1v2h-1zm3 0h1v2h-1zm5 0h1v2h-1zm4 0h1v2h-1zm4 0h1v2h-1zm4 0h1v2h-1zm5 0h1v2h-1zm4 0h1v2h-1zm4 0h1v2h-1zm4 0h1v2h-1zm5 0h1v2h-1zm3 0h1v2h-1zm5 0h1v2h-1zm4 0h1v2h-1zm5 0h1v2h-1zm3 0h1v2h-1zm5 0h1v2h-1zm4 0h1v2h-1zm4 0h1v2h-1zm4 0h1v2h-1zm5 0h1v2h-1zm4 0h1v2h-1zm4 0h1v2h-1zm4 0h1v2h-1zm5 0h1v2h-1zm3 0h1v2h-1zm5 0h1v2h-1zm4 0h1v2h-1zm5 0h1v2h-1zm3 0h1v2h-1zm5 0h1v2h-1zm4 0h1v2h-1zm4 0h1v2h-1zm4 0h1v2h-1zm5 0h1v2h-1zm4 0h1v2h-1zm4 0h1v2h-1zm4 0h1v2h-1zm5 0h1v2h-1zm3 0h1v2h-1zm5 0h1v2h-1zm4 0h1v2h-1zm5 0h1v2h-1zm3 0h1v2h-1zm5 0h1v2h-1zm4 0h1v2h-1zm4 0h1v2h-1zm4 0h1v2h-1zm5 0h1v2h-1zm4 0h1v2h-1zm4 0h1v2h-1zm4 0h1v2h-1zm5 0h1v2h-1zm3 0h1v2h-1zm5 0h1v2h-1zm4 0h1v2h-1zm5 0h1v2h-1zm3 0h1v2h-1zm5 0h1v2h-1zm4 0h1v2h-1zm5 0h1v2h-1zm3 0h1v2h-1zm5 0h1v2h-1zm4 0h1v2h-1zm4 0h1v2h-1zm4 0h1v2h-1zm5 0h1v2h-1zm3 0h1v2h-1zm5 0h1v2h-1zm4 0h1v2h-1zm5 0h1v2h-1zm3 0h1v2h-1zm5 0h1v2h-1zm4 0h1v2h-1zm5 0h1v2h-1zm3 0h1v2h-1zm5 0h1v2h-1zm4 0h1v2h-1zm4 0h1v2h-1zm4 0h1v2h-1zm5 0h1v2h-1zm4 0h1v2h-1zm4 0h1v2h-1zm4 0h1v2h-1zm5 0h1v2h-1zm3 0h1v2h-1zm5 0h1v2h-1zm4 0h1v2h-1zm5 0h1v2h-1zm3 0h1v2h-1zm5 0h1v2h-1zm4 0h1v2h-1zm4 0h1v2h-1zm4 0h1v2h-1zm5 0h1v2h-1zm4 0h1v2h-1zm4 0h1v2h-1zm4 0h1v2h-1zm5 0h1v2h-1zm3 0h1v2h-1zm5 0h1v2h-1zm4 0h1v2h-1zm5 0h1v2h-1zm3 0h1v2h-1zm5 0h1v2h-1zm4 0h1v2h-1zm4 0h1v2h-1zm4 0h1v2h-1zm5 0h1v2h-1zm4 0h1v2h-1zm4 0h1v2h-1zm4 0h1v2h-1zm5 0h1v2h-1zm3 0h1v2h-1zm5 0h1v2h-1zm4 0h1v2h-1zm5 0h1v2h-1zm3 0h1v2h-1zm5 0h1v2h-1zm4 0h1v2h-1zm4 0h1v2h-1zm4 0h1v2h-1zm5 0h1v2h-1zm4 0h1v2h-1zm4 0h1v2h-1zm4 0h1v2h-1zm5 0h1v2h-1zm3 0h1v2h-1zm5 0h1v2h-1zm4 0h1v2h-1zm5 0h1v2h-1zm3 0h1v2h-1zm5 0h1v2h-1zm4 0h1v2h-1zM11 597h1v2h-1zm4 0h1v2h-1zm5 0h1v2h-1zm3 0h1v2h-1zm5 0h1v2h-1zm4 0h1v2h-1zm5 0h1v2h-1zm3 0h1v2h-1zm5 0h1v2h-1zm4 0h1v2h-1zm5 0h1v2h-1zm3 0h1v2h-1zm5 0h1v2h-1zm4 0h1v2h-1zm4 0h1v2h-1zm4 0h1v2h-1zm5 0h1v2h-1zm4 0h1v2h-1zm4 0h1v2h-1zm4 0h1v2h-1zm5 0h1v2h-1zm3 0h1v2h-1zm5 0h1v2h-1zm4 0h1v2h-1zm5 0h1v2h-1zm3 0h1v2h-1zm5 0h1v2h-1zm4 0h1v2h-1zm4 0h1v2h-1zm4 0h1v2h-1zm5 0h1v2h-1zm4 0h1v2h-1zm4 0h1v2h-1zm4 0h1v2h-1zm5 0h1v2h-1zm3 0h1v2h-1zm5 0h1v2h-1zm4 0h1v2h-1zm5 0h1v2h-1zm3 0h1v2h-1zm5 0h1v2h-1zm4 0h1v2h-1zm4 0h1v2h-1zm4 0h1v2h-1zm5 0h1v2h-1zm4 0h1v2h-1zm4 0h1v2h-1zm4 0h1v2h-1zm5 0h1v2h-1zm3 0h1v2h-1zm5 0h1v2h-1zm4 0h1v2h-1zm5 0h1v2h-1zm3 0h1v2h-1zm5 0h1v2h-1zm4 0h1v2h-1zm4 0h1v2h-1zm4 0h1v2h-1zm5 0h1v2h-1zm4 0h1v2h-1zm4 0h1v2h-1zm4 0h1v2h-1zm5 0h1v2h-1zm3 0h1v2h-1zm5 0h1v2h-1zm4 0h1v2h-1zm5 0h1v2h-1zm3 0h1v2h-1zm5 0h1v2h-1zm4 0h1v2h-1zm5 0h1v2h-1zm3 0h1v2h-1zm5 0h1v2h-1zm4 0h1v2h-1zm4 0h1v2h-1zm4 0h1v2h-1zm5 0h1v2h-1zm3 0h1v2h-1zm5 0h1v2h-1zm4 0h1v2h-1zm5 0h1v2h-1zm3 0h1v2h-1zm5 0h1v2h-1zm4 0h1v2h-1zm5 0h1v2h-1zm3 0h1v2h-1zm5 0h1v2h-1zm4 0h1v2h-1zm4 0h1v2h-1zm4 0h1v2h-1zm5 0h1v2h-1zm4 0h1v2h-1zm4 0h1v2h-1zm4 0h1v2h-1zm5 0h1v2h-1zm3 0h1v2h-1zm5 0h1v2h-1zm4 0h1v2h-1zm5 0h1v2h-1zm3 0h1v2h-1zm5 0h1v2h-1zm4 0h1v2h-1zm4 0h1v2h-1zm4 0h1v2h-1zm5 0h1v2h-1zm4 0h1v2h-1zm4 0h1v2h-1zm4 0h1v2h-1zm5 0h1v2h-1zm3 0h1v2h-1zm5 0h1v2h-1zm4 0h1v2h-1zm5 0h1v2h-1zm3 0h1v2h-1zm5 0h1v2h-1zm4 0h1v2h-1zm4 0h1v2h-1zm4 0h1v2h-1zm5 0h1v2h-1zm4 0h1v2h-1zm4 0h1v2h-1zm4 0h1v2h-1zm5 0h1v2h-1zm3 0h1v2h-1zm5 0h1v2h-1zm4 0h1v2h-1zm5 0h1v2h-1zm3 0h1v2h-1zm5 0h1v2h-1zm4 0h1v2h-1zm4 0h1v2h-1zm4 0h1v2h-1zm5 0h1v2h-1zm4 0h1v2h-1zm4 0h1v2h-1zm4 0h1v2h-1zm5 0h1v2h-1zm3 0h1v2h-1zm5 0h1v2h-1zm4 0h1v2h-1zm5 0h1v2h-1zm3 0h1v2h-1zm5 0h1v2h-1zm4 0h1v2h-1zM11 601h1v2h-1zm4 0h1v2h-1zm5 0h1v2h-1zm3 0h1v2h-1zm5 0h1v2h-1zm4 0h1v2h-1zm5 0h1v2h-1zm3 0h1v2h-1zm5 0h1v2h-1zm4 0h1v2h-1zm5 0h1v2h-1zm3 0h1v2h-1zm5 0h1v2h-1zm4 0h1v2h-1zm4 0h1v2h-1zm4 0h1v2h-1zm5 0h1v2h-1zm4 0h1v2h-1zm4 0h1v2h-1zm4 0h1v2h-1zm5 0h1v2h-1zm3 0h1v2h-1zm5 0h1v2h-1zm4 0h1v2h-1zm5 0h1v2h-1zm3 0h1v2h-1zm5 0h1v2h-1zm4 0h1v2h-1zm4 0h1v2h-1zm4 0h1v2h-1zm5 0h1v2h-1zm4 0h1v2h-1zm4 0h1v2h-1zm4 0h1v2h-1zm5 0h1v2h-1zm3 0h1v2h-1zm5 0h1v2h-1zm4 0h1v2h-1zm5 0h1v2h-1zm3 0h1v2h-1zm5 0h1v2h-1zm4 0h1v2h-1zm4 0h1v2h-1zm4 0h1v2h-1zm5 0h1v2h-1zm4 0h1v2h-1zm4 0h1v2h-1zm4 0h1v2h-1zm5 0h1v2h-1zm3 0h1v2h-1zm5 0h1v2h-1zm4 0h1v2h-1zm5 0h1v2h-1zm3 0h1v2h-1zm5 0h1v2h-1zm4 0h1v2h-1zm4 0h1v2h-1zm4 0h1v2h-1zm5 0h1v2h-1zm4 0h1v2h-1zm4 0h1v2h-1zm4 0h1v2h-1zm5 0h1v2h-1zm3 0h1v2h-1zm5 0h1v2h-1zm4 0h1v2h-1zm5 0h1v2h-1zm3 0h1v2h-1zm5 0h1v2h-1zm4 0h1v2h-1zm5 0h1v2h-1zm3 0h1v2h-1zm5 0h1v2h-1zm4 0h1v2h-1zm4 0h1v2h-1zm4 0h1v2h-1zm5 0h1v2h-1zm3 0h1v2h-1zm5 0h1v2h-1zm4 0h1v2h-1zm5 0h1v2h-1zm3 0h1v2h-1zm5 0h1v2h-1zm4 0h1v2h-1zm5 0h1v2h-1zm3 0h1v2h-1zm5 0h1v2h-1zm4 0h1v2h-1zm4 0h1v2h-1zm4 0h1v2h-1zm5 0h1v2h-1zm4 0h1v2h-1zm4 0h1v2h-1zm4 0h1v2h-1zm5 0h1v2h-1zm3 0h1v2h-1zm5 0h1v2h-1zm4 0h1v2h-1zm5 0h1v2h-1zm3 0h1v2h-1zm5 0h1v2h-1zm4 0h1v2h-1zm4 0h1v2h-1zm4 0h1v2h-1zm5 0h1v2h-1zm4 0h1v2h-1zm4 0h1v2h-1zm4 0h1v2h-1zm5 0h1v2h-1zm3 0h1v2h-1zm5 0h1v2h-1zm4 0h1v2h-1zm5 0h1v2h-1zm3 0h1v2h-1zm5 0h1v2h-1zm4 0h1v2h-1zm4 0h1v2h-1zm4 0h1v2h-1zm5 0h1v2h-1zm4 0h1v2h-1zm4 0h1v2h-1zm4 0h1v2h-1zm5 0h1v2h-1zm3 0h1v2h-1zm5 0h1v2h-1zm4 0h1v2h-1zm5 0h1v2h-1zm3 0h1v2h-1zm5 0h1v2h-1zm4 0h1v2h-1zm4 0h1v2h-1zm4 0h1v2h-1zm5 0h1v2h-1zm4 0h1v2h-1zm4 0h1v2h-1zm4 0h1v2h-1zm5 0h1v2h-1zm3 0h1v2h-1zm5 0h1v2h-1zm4 0h1v2h-1zm5 0h1v2h-1zm3 0h1v2h-1zm5 0h1v2h-1zm4 0h1v2h-1zM11 605h1v1h-1zm4 0h1v1h-1zm5 0h1v1h-1zm3 0h1v1h-1zm5 0h1v1h-1zm4 0h1v1h-1zm5 0h1v1h-1zm3 0h1v1h-1zm5 0h1v1h-1zm4 0h1v1h-1zm5 0h1v1h-1zm3 0h1v1h-1zm5 0h1v1h-1zm4 0h1v1h-1zm4 0h1v1h-1zm4 0h1v1h-1zm5 0h1v1h-1zm4 0h1v1h-1zm4 0h1v1h-1zm4 0h1v1h-1zm5 0h1v1h-1zm3 0h1v1h-1zm5 0h1v1h-1zm4 0h1v1h-1zm5 0h1v1h-1zm3 0h1v1h-1zm5 0h1v1h-1zm4 0h1v1h-1zm4 0h1v1h-1zm4 0h1v1h-1zm5 0h1v1h-1zm4 0h1v1h-1zm4 0h1v1h-1zm4 0h1v1h-1zm5 0h1v1h-1zm3 0h1v1h-1zm5 0h1v1h-1zm4 0h1v1h-1zm5 0h1v1h-1zm3 0h1v1h-1zm5 0h1v1h-1zm4 0h1v1h-1zm4 0h1v1h-1zm4 0h1v1h-1zm5 0h1v1h-1zm4 0h1v1h-1zm4 0h1v1h-1zm4 0h1v1h-1zm5 0h1v1h-1zm3 0h1v1h-1zm5 0h1v1h-1zm4 0h1v1h-1zm5 0h1v1h-1zm3 0h1v1h-1zm5 0h1v1h-1zm4 0h1v1h-1zm4 0h1v1h-1zm4 0h1v1h-1zm5 0h1v1h-1zm4 0h1v1h-1zm4 0h1v1h-1zm4 0h1v1h-1zm5 0h1v1h-1zm3 0h1v1h-1zm5 0h1v1h-1zm4 0h1v1h-1zm5 0h1v1h-1zm3 0h1v1h-1zm5 0h1v1h-1zm4 0h1v1h-1zm5 0h1v1h-1zm3 0h1v1h-1zm5 0h1v1h-1zm4 0h1v1h-1zm4 0h1v1h-1zm4 0h1v1h-1zm5 0h1v1h-1zm3 0h1v1h-1zm5 0h1v1h-1zm4 0h1v1h-1zm5 0h1v1h-1zm3 0h1v1h-1zm5 0h1v1h-1zm4 0h1v1h-1zm5 0h1v1h-1zm3 0h1v1h-1zm5 0h1v1h-1zm4 0h1v1h-1zm4 0h1v1h-1zm4 0h1v1h-1zm5 0h1v1h-1zm4 0h1v1h-1zm4 0h1v1h-1zm4 0h1v1h-1zm5 0h1v1h-1zm3 0h1v1h-1zm5 0h1v1h-1zm4 0h1v1h-1zm5 0h1v1h-1zm3 0h1v1h-1zm5 0h1v1h-1zm4 0h1v1h-1zm4 0h1v1h-1zm4 0h1v1h-1zm5 0h1v1h-1zm4 0h1v1h-1zm4 0h1v1h-1zm4 0h1v1h-1zm5 0h1v1h-1zm3 0h1v1h-1zm5 0h1v1h-1zm4 0h1v1h-1zm5 0h1v1h-1zm3 0h1v1h-1zm5 0h1v1h-1zm4 0h1v1h-1zm4 0h1v1h-1zm4 0h1v1h-1zm5 0h1v1h-1zm4 0h1v1h-1zm4 0h1v1h-1zm4 0h1v1h-1zm5 0h1v1h-1zm3 0h1v1h-1zm5 0h1v1h-1zm4 0h1v1h-1zm5 0h1v1h-1zm3 0h1v1h-1zm5 0h1v1h-1zm4 0h1v1h-1zm4 0h1v1h-1zm4 0h1v1h-1zm5 0h1v1h-1zm4 0h1v1h-1zm4 0h1v1h-1zm4 0h1v1h-1zm5 0h1v1h-1zm3 0h1v1h-1zm5 0h1v1h-1zm4 0h1v1h-1zm5 0h1v1h-1zm3 0h1v1h-1zm5 0h1v1h-1zm4 0h1v1h-1zM11 608h1v2h-1zm4 0h1v2h-1zm5 0h1v2h-1zm3 0h1v2h-1zm5 0h1v2h-1zm4 0h1v2h-1zm5 0h1v2h-1zm3 0h1v2h-1zm5 0h1v2h-1zm4 0h1v2h-1zm5 0h1v2h-1zm3 0h1v2h-1zm5 0h1v2h-1zm4 0h1v2h-1zm4 0h1v2h-1zm4 0h1v2h-1zm5 0h1v2h-1zm4 0h1v2h-1zm4 0h1v2h-1zm4 0h1v2h-1zm5 0h1v2h-1zm3 0h1v2h-1zm5 0h1v2h-1zm4 0h1v2h-1zm5 0h1v2h-1zm3 0h1v2h-1zm5 0h1v2h-1zm4 0h1v2h-1zm4 0h1v2h-1zm4 0h1v2h-1zm5 0h1v2h-1zm4 0h1v2h-1zm4 0h1v2h-1zm4 0h1v2h-1zm5 0h1v2h-1zm3 0h1v2h-1zm5 0h1v2h-1zm4 0h1v2h-1zm5 0h1v2h-1zm3 0h1v2h-1zm5 0h1v2h-1zm4 0h1v2h-1zm4 0h1v2h-1zm4 0h1v2h-1zm5 0h1v2h-1zm4 0h1v2h-1zm4 0h1v2h-1zm4 0h1v2h-1zm5 0h1v2h-1zm3 0h1v2h-1zm5 0h1v2h-1zm4 0h1v2h-1zm5 0h1v2h-1zm3 0h1v2h-1zm5 0h1v2h-1zm4 0h1v2h-1zm4 0h1v2h-1zm4 0h1v2h-1zm5 0h1v2h-1zm4 0h1v2h-1zm4 0h1v2h-1zm4 0h1v2h-1zm5 0h1v2h-1zm3 0h1v2h-1zm5 0h1v2h-1zm4 0h1v2h-1zm5 0h1v2h-1zm3 0h1v2h-1zm5 0h1v2h-1zm4 0h1v2h-1zm5 0h1v2h-1zm3 0h1v2h-1zm5 0h1v2h-1zm4 0h1v2h-1zm4 0h1v2h-1zm4 0h1v2h-1zm5 0h1v2h-1zm3 0h1v2h-1zm5 0h1v2h-1zm4 0h1v2h-1zm5 0h1v2h-1zm3 0h1v2h-1zm5 0h1v2h-1zm4 0h1v2h-1zm5 0h1v2h-1zm3 0h1v2h-1zm5 0h1v2h-1zm4 0h1v2h-1zm4 0h1v2h-1zm4 0h1v2h-1zm5 0h1v2h-1zm4 0h1v2h-1zm4 0h1v2h-1zm4 0h1v2h-1zm5 0h1v2h-1zm3 0h1v2h-1zm5 0h1v2h-1zm4 0h1v2h-1zm5 0h1v2h-1zm3 0h1v2h-1zm5 0h1v2h-1zm4 0h1v2h-1zm4 0h1v2h-1zm4 0h1v2h-1zm5 0h1v2h-1zm4 0h1v2h-1zm4 0h1v2h-1zm4 0h1v2h-1zm5 0h1v2h-1zm3 0h1v2h-1zm5 0h1v2h-1zm4 0h1v2h-1zm5 0h1v2h-1zm3 0h1v2h-1zm5 0h1v2h-1zm4 0h1v2h-1zm4 0h1v2h-1zm4 0h1v2h-1zm5 0h1v2h-1zm4 0h1v2h-1zm4 0h1v2h-1zm4 0h1v2h-1zm5 0h1v2h-1zm3 0h1v2h-1zm5 0h1v2h-1zm4 0h1v2h-1zm5 0h1v2h-1zm3 0h1v2h-1zm5 0h1v2h-1zm4 0h1v2h-1zm4 0h1v2h-1zm4 0h1v2h-1zm5 0h1v2h-1zm4 0h1v2h-1zm4 0h1v2h-1zm4 0h1v2h-1zm5 0h1v2h-1zm3 0h1v2h-1zm5 0h1v2h-1zm4 0h1v2h-1zm5 0h1v2h-1zm3 0h1v2h-1zm5 0h1v2h-1zm4 0h1v2h-1z" fill="#6a52ff"/><path transform="translate(1 0)" d="M1209 304h1v2h-1zM1200 310h1v2h-1zm4 0h1v2h-1zm5 0h1v2h-1zm3 0h1v2h-1zm5 0h1v2h-1zm4 0h1v2h-1zm25 0h1v2h-1zm5 0h1v2h-1zm4 0h1v2h-1zM681 314h1v2h-1zm9 0h1v2h-1zm506 0h1v2h-1zm4 0h1v2h-1zm4 0h1v2h-1zm5 0h1v2h-1zm3 0h1v2h-1zm5 0h1v2h-1zm4 0h1v2h-1zm5 0h1v2h-1zm3 0h1v2h-1zm17 0h1v2h-1zm5 0h1v2h-1zm4 0h1v2h-1zM96 318h1v2h-1zm236 0h1v2h-1zm3 0h1v2h-1zm31 0h1v2h-1zm25 0h1v2h-1zm101 0h1v2h-1zm135 0h1v2h-1zm4 0h1v2h-1zm4 0h1v2h-1zm38 0h1v2h-1zm5 0h1v2h-1zm3 0h1v2h-1zm5 0h1v2h-1zm4 0h1v2h-1zm4 0h1v2h-1zm4 0h1v2h-1zm64 0h1v2h-1zm4 0h1v2h-1zm59 0h1v2h-1zm101 0h1v2h-1zm55 0h1v2h-1zm4 0h1v2h-1zm5 0h1v2h-1zm16 0h1v2h-1zm4 0h1v2h-1zm5 0h1v2h-1zm130 0h1v2h-1zm47 0h1v2h-1zm4 0h1v2h-1zm4 0h1v2h-1zm4 0h1v2h-1zm5 0h1v2h-1zm3 0h1v2h-1zm5 0h1v2h-1zm4 0h1v2h-1zm5 0h1v2h-1zm3 0h1v2h-1zm5 0h1v2h-1zm4 0h1v2h-1zm4 0h1v2h-1zm4 0h1v2h-1zm5 0h1v2h-1zm4 0h1v2h-1zM11 321h1v2h-1zm4 0h1v2h-1zm5 0h1v2h-1zm3 0h1v2h-1zm5 0h1v2h-1zm9 0h1v2h-1zm17 0h1v2h-1zm8 0h1v2h-1zm4 0h1v2h-1zm4 0h1v2h-1zm17 0h1v2h-1zm4 0h1v2h-1zm5 0h1v2h-1zm3 0h1v2h-1zm5 0h1v2h-1zm42 0h1v2h-1zm4 0h1v2h-1zm5 0h1v2h-1zm17 0h1v2h-1zm3 0h1v2h-1zm5 0h1v2h-1zm17 0h1v2h-1zm8 0h1v2h-1zm42 0h1v2h-1zm4 0h1v2h-1zm5 0h1v2h-1zm20 0h1v2h-1zm5 0h1v2h-1zm4 0h1v2h-1zm8 0h1v2h-1zm14 0h1v2h-1zm8 0h1v2h-1zm17 0h1v2h-1zm3 0h1v2h-1zm5 0h1v2h-1zm17 0h1v2h-1zm4 0h1v2h-1zm5 0h1v2h-1zm20 0h1v2h-1zm5 0h1v2h-1zm4 0h1v2h-1zm4 0h1v2h-1zm12 0h1v2h-1zm9 0h1v2h-1zm13 0h1v2h-1zm4 0h1v2h-1zm4 0h1v2h-1zm4 0h1v2h-1zm5 0h1v2h-1zm17 0h1v2h-1zm8 0h1v2h-1zm12 0h1v2h-1zm5 0h1v2h-1zm4 0h1v2h-1zm25 0h1v2h-1zm34 0h1v2h-1zm8 0h1v2h-1zm9 0h1v2h-1zm4 0h1v2h-1zm4 0h1v2h-1zm5 0h1v2h-1zm17 0h1v2h-1zm3 0h1v2h-1zm5 0h1v2h-1zm17 0h1v2h-1zm4 0h1v2h-1zm4 0h1v2h-1zm38 0h1v2h-1zm5 0h1v2h-1zm3 0h1v2h-1zm5 0h1v2h-1zm4 0h1v2h-1zm4 0h1v2h-1zm4 0h1v2h-1zm5 0h1v2h-1zm4 0h1v2h-1zm4 0h1v2h-1zm4 0h1v2h-1zm5 0h1v2h-1zm12 0h1v2h-1zm5 0h1v2h-1zm3 0h1v2h-1zm22 0h1v2h-1zm4 0h1v2h-1zm4 0h1v2h-1zm21 0h1v2h-1zm5 0h1v2h-1zm20 0h1v2h-1zm5 0h1v2h-1zm4 0h1v2h-1zm8 0h1v2h-1zm8 0h1v2h-1zm5 0h1v2h-1zm4 0h1v2h-1zm17 0h1v2h-1zm4 0h1v2h-1zm4 0h1v2h-1zm5 0h1v2h-1zm17 0h1v2h-1zm3 0h1v2h-1zm5 0h1v2h-1zm4 0h1v2h-1zm13 0h1v2h-1zm4 0h1v2h-1zm4 0h1v2h-1zm26 0h1v2h-1zm20 0h1v2h-1zm5 0h1v2h-1zm4 0h1v2h-1zm5 0h1v2h-1zm3 0h1v2h-1zm9 0h1v2h-1zm4 0h1v2h-1zm4 0h1v2h-1zm5 0h1v2h-1zm17 0h1v2h-1zm3 0h1v2h-1zm26 0h1v2h-1zm4 0h1v2h-1zm21 0h1v2h-1zm5 0h1v2h-1zm20 0h1v2h-1zm5 0h1v2h-1zm4 0h1v2h-1zm17 0h1v2h-1zm8 0h1v2h-1zm5 0h1v2h-1zm3 0h1v2h-1zm9 0h1v2h-1zm5 0h1v2h-1zm3 0h1v2h-1zm22 0h1v2h-1zm4 0h1v2h-1zm4 0h1v2h-1zm4 0h1v2h-1zm5 0h1v2h-1zm3 0h1v2h-1zm5 0h1v2h-1zm4 0h1v2h-1zm5 0h1v2h-1zm3 0h1v2h-1zm5 0h1v2h-1zm4 0h1v2h-1zm4 0h1v2h-1zm4 0h1v2h-1zm5 0h1v2h-1zm4 0h1v2h-1zM11 327h1v2h-1zm4 0h1v2h-1zm5 0h1v2h-1zm3 0h1v2h-1zm5 0h1v2h-1zm4 0h1v2h-1zm5 0h1v2h-1zm3 0h1v2h-1zm5 0h1v2h-1zm4 0h1v2h-1zm5 0h1v2h-1zm3 0h1v2h-1zm5 0h1v2h-1zm4 0h1v2h-1zm4 0h1v2h-1zm4 0h1v2h-1zm5 0h1v2h-1zm4 0h1v2h-1zm4 0h1v2h-1zm4 0h1v2h-1zm5 0h1v2h-1zm3 0h1v2h-1zm5 0h1v2h-1zm4 0h1v2h-1zm5 0h1v2h-1zm3 0h1v2h-1zm5 0h1v2h-1zm4 0h1v2h-1zm4 0h1v2h-1zm4 0h1v2h-1zm5 0h1v2h-1zm4 0h1v2h-1zm4 0h1v2h-1zm4 0h1v2h-1zm5 0h1v2h-1zm3 0h1v2h-1zm5 0h1v2h-1zm4 0h1v2h-1zm5 0h1v2h-1zm3 0h1v2h-1zm5 0h1v2h-1zm4 0h1v2h-1zm4 0h1v2h-1zm4 0h1v2h-1zm5 0h1v2h-1zm4 0h1v2h-1zm4 0h1v2h-1zm4 0h1v2h-1zm5 0h1v2h-1zm3 0h1v2h-1zm5 0h1v2h-1zm4 0h1v2h-1zm5 0h1v2h-1zm3 0h1v2h-1zm5 0h1v2h-1zm4 0h1v2h-1zm4 0h1v2h-1zm4 0h1v2h-1zm5 0h1v2h-1zm4 0h1v2h-1zm4 0h1v2h-1zm4 0h1v2h-1zm5 0h1v2h-1zm3 0h1v2h-1zm5 0h1v2h-1zm4 0h1v2h-1zm5 0h1v2h-1zm3 0h1v2h-1zm5 0h1v2h-1zm4 0h1v2h-1zm5 0h1v2h-1zm3 0h1v2h-1zm5 0h1v2h-1zm4 0h1v2h-1zm4 0h1v2h-1zm4 0h1v2h-1zm5 0h1v2h-1zm3 0h1v2h-1zm5 0h1v2h-1zm4 0h1v2h-1zm5 0h1v2h-1zm3 0h1v2h-1zm5 0h1v2h-1zm4 0h1v2h-1zm5 0h1v2h-1zm3 0h1v2h-1zm5 0h1v2h-1zm4 0h1v2h-1zm4 0h1v2h-1zm4 0h1v2h-1zm5 0h1v2h-1zm4 0h1v2h-1zm4 0h1v2h-1zm4 0h1v2h-1zm5 0h1v2h-1zm3 0h1v2h-1zm5 0h1v2h-1zm4 0h1v2h-1zm5 0h1v2h-1zm3 0h1v2h-1zm5 0h1v2h-1zm4 0h1v2h-1zm4 0h1v2h-1zm4 0h1v2h-1zm5 0h1v2h-1zm4 0h1v2h-1zm4 0h1v2h-1zm4 0h1v2h-1zm5 0h1v2h-1zm3 0h1v2h-1zm5 0h1v2h-1zm4 0h1v2h-1zm5 0h1v2h-1zm3 0h1v2h-1zm5 0h1v2h-1zm4 0h1v2h-1zm4 0h1v2h-1zm4 0h1v2h-1zm5 0h1v2h-1zm4 0h1v2h-1zm4 0h1v2h-1zm4 0h1v2h-1zm5 0h1v2h-1zm3 0h1v2h-1zm5 0h1v2h-1zm4 0h1v2h-1zm5 0h1v2h-1zm3 0h1v2h-1zm5 0h1v2h-1zm4 0h1v2h-1zm4 0h1v2h-1zm4 0h1v2h-1zm5 0h1v2h-1zm4 0h1v2h-1zm4 0h1v2h-1zm4 0h1v2h-1zm5 0h1v2h-1zm3 0h1v2h-1zm5 0h1v2h-1zm4 0h1v2h-1zm5 0h1v2h-1zm3 0h1v2h-1zm5 0h1v2h-1zm4 0h1v2h-1zm5 0h1v2h-1zm3 0h1v2h-1zm5 0h1v2h-1zm4 0h1v2h-1zm4 0h1v2h-1zm4 0h1v2h-1zm5 0h1v2h-1zm3 0h1v2h-1zm5 0h1v2h-1zm4 0h1v2h-1zm5 0h1v2h-1zm3 0h1v2h-1zm5 0h1v2h-1zm4 0h1v2h-1zm5 0h1v2h-1zm3 0h1v2h-1zm5 0h1v2h-1zm4 0h1v2h-1zm4 0h1v2h-1zm4 0h1v2h-1zm5 0h1v2h-1zm4 0h1v2h-1zm4 0h1v2h-1zm4 0h1v2h-1zm5 0h1v2h-1zm3 0h1v2h-1zm5 0h1v2h-1zm4 0h1v2h-1zm5 0h1v2h-1zm3 0h1v2h-1zm5 0h1v2h-1zm4 0h1v2h-1zm4 0h1v2h-1zm4 0h1v2h-1zm5 0h1v2h-1zm4 0h1v2h-1zm4 0h1v2h-1zm4 0h1v2h-1zm5 0h1v2h-1zm3 0h1v2h-1zm5 0h1v2h-1zm4 0h1v2h-1zm5 0h1v2h-1zm3 0h1v2h-1zm5 0h1v2h-1zm4 0h1v2h-1zm4 0h1v2h-1zm4 0h1v2h-1zm5 0h1v2h-1zm4 0h1v2h-1zm4 0h1v2h-1zm4 0h1v2h-1zm5 0h1v2h-1zm3 0h1v2h-1zm5 0h1v2h-1zm4 0h1v2h-1zm5 0h1v2h-1zm3 0h1v2h-1zm5 0h1v2h-1zm4 0h1v2h-1zm4 0h1v2h-1zm4 0h1v2h-1zm5 0h1v2h-1zm4 0h1v2h-1zm4 0h1v2h-1zm4 0h1v2h-1zm5 0h1v2h-1zm3 0h1v2h-1zm5 0h1v2h-1zm4 0h1v2h-1zm5 0h1v2h-1zm3 0h1v2h-1zm5 0h1v2h-1zm4 0h1v2h-1zm4 0h1v2h-1zm4 0h1v2h-1zm5 0h1v2h-1zm4 0h1v2h-1zm4 0h1v2h-1zm4 0h1v2h-1zm5 0h1v2h-1zm3 0h1v2h-1zm5 0h1v2h-1zm4 0h1v2h-1zm5 0h1v2h-1zm3 0h1v2h-1zm5 0h1v2h-1zm4 0h1v2h-1zm5 0h1v2h-1zm3 0h1v2h-1zm5 0h1v2h-1zm4 0h1v2h-1zm4 0h1v2h-1zm4 0h1v2h-1zm5 0h1v2h-1zm4 0h1v2h-1zm4 0h1v2h-1zm4 0h1v2h-1zm5 0h1v2h-1zm3 0h1v2h-1zm5 0h1v2h-1zm4 0h1v2h-1zm8 0h1v2h-1zm5 0h1v2h-1zm4 0h1v2h-1zm4 0h1v2h-1zm4 0h1v2h-1zm5 0h1v2h-1zm4 0h1v2h-1zm4 0h1v2h-1zm4 0h1v2h-1zm5 0h1v2h-1zm3 0h1v2h-1zm5 0h1v2h-1zm4 0h1v2h-1zm5 0h1v2h-1zm3 0h1v2h-1zm5 0h1v2h-1zm4 0h1v2h-1zm4 0h1v2h-1zm4 0h1v2h-1zm5 0h1v2h-1zm4 0h1v2h-1zm4 0h1v2h-1zm4 0h1v2h-1zm5 0h1v2h-1zm3 0h1v2h-1zm5 0h1v2h-1zm4 0h1v2h-1zm5 0h1v2h-1zm3 0h1v2h-1zm5 0h1v2h-1zm4 0h1v2h-1zm4 0h1v2h-1zm4 0h1v2h-1zm5 0h1v2h-1zm4 0h1v2h-1zm4 0h1v2h-1zm4 0h1v2h-1zm5 0h1v2h-1zm3 0h1v2h-1zm5 0h1v2h-1zm4 0h1v2h-1zm5 0h1v2h-1zm3 0h1v2h-1zm5 0h1v2h-1zm4 0h1v2h-1zm4 0h1v2h-1zm4 0h1v2h-1zm5 0h1v2h-1zm4 0h1v2h-1zM11 331h1v2h-1zm4 0h1v2h-1zm5 0h1v2h-1zm3 0h1v2h-1zm5 0h1v2h-1zm4 0h1v2h-1zm5 0h1v2h-1zm3 0h1v2h-1zm5 0h1v2h-1zm4 0h1v2h-1zm5 0h1v2h-1zm3 0h1v2h-1zm5 0h1v2h-1zm4 0h1v2h-1zm4 0h1v2h-1zm4 0h1v2h-1zm5 0h1v2h-1zm4 0h1v2h-1zm4 0h1v2h-1zm4 0h1v2h-1zm5 0h1v2h-1zm3 0h1v2h-1zm5 0h1v2h-1zm4 0h1v2h-1zm5 0h1v2h-1zm3 0h1v2h-1zm5 0h1v2h-1zm4 0h1v2h-1zm4 0h1v2h-1zm4 0h1v2h-1zm5 0h1v2h-1zm4 0h1v2h-1zm4 0h1v2h-1zm4 0h1v2h-1zm5 0h1v2h-1zm3 0h1v2h-1zm5 0h1v2h-1zm4 0h1v2h-1zm5 0h1v2h-1zm3 0h1v2h-1zm5 0h1v2h-1zm4 0h1v2h-1zm4 0h1v2h-1zm4 0h1v2h-1zm5 0h1v2h-1zm4 0h1v2h-1zm4 0h1v2h-1zm4 0h1v2h-1zm5 0h1v2h-1zm3 0h1v2h-1zm5 0h1v2h-1zm4 0h1v2h-1zm5 0h1v2h-1zm3 0h1v2h-1zm5 0h1v2h-1zm4 0h1v2h-1zm4 0h1v2h-1zm4 0h1v2h-1zm5 0h1v2h-1zm4 0h1v2h-1zm4 0h1v2h-1zm4 0h1v2h-1zm5 0h1v2h-1zm3 0h1v2h-1zm5 0h1v2h-1zm4 0h1v2h-1zm5 0h1v2h-1zm3 0h1v2h-1zm5 0h1v2h-1zm4 0h1v2h-1zm5 0h1v2h-1zm3 0h1v2h-1zm5 0h1v2h-1zm4 0h1v2h-1zm4 0h1v2h-1zm4 0h1v2h-1zm5 0h1v2h-1zm3 0h1v2h-1zm5 0h1v2h-1zm4 0h1v2h-1zm5 0h1v2h-1zm3 0h1v2h-1zm5 0h1v2h-1zm4 0h1v2h-1zm5 0h1v2h-1zm3 0h1v2h-1zm5 0h1v2h-1zm4 0h1v2h-1zm4 0h1v2h-1zm4 0h1v2h-1zm5 0h1v2h-1zm4 0h1v2h-1zm4 0h1v2h-1zm4 0h1v2h-1zm5 0h1v2h-1zm3 0h1v2h-1zm5 0h1v2h-1zm4 0h1v2h-1zm5 0h1v2h-1zm3 0h1v2h-1zm5 0h1v2h-1zm4 0h1v2h-1zm4 0h1v2h-1zm4 0h1v2h-1zm5 0h1v2h-1zm4 0h1v2h-1zm4 0h1v2h-1zm4 0h1v2h-1zm5 0h1v2h-1zm3 0h1v2h-1zm5 0h1v2h-1zm4 0h1v2h-1zm5 0h1v2h-1zm3 0h1v2h-1zm5 0h1v2h-1zm4 0h1v2h-1zm4 0h1v2h-1zm4 0h1v2h-1zm5 0h1v2h-1zm4 0h1v2h-1zm4 0h1v2h-1zm4 0h1v2h-1zm5 0h1v2h-1zm3 0h1v2h-1zm5 0h1v2h-1zm4 0h1v2h-1zm5 0h1v2h-1zm3 0h1v2h-1zm5 0h1v2h-1zm4 0h1v2h-1zm4 0h1v2h-1zm4 0h1v2h-1zm5 0h1v2h-1zm4 0h1v2h-1zm4 0h1v2h-1zm4 0h1v2h-1zm5 0h1v2h-1zm3 0h1v2h-1zm5 0h1v2h-1zm4 0h1v2h-1zm5 0h1v2h-1zm3 0h1v2h-1zm5 0h1v2h-1zm4 0h1v2h-1zm5 0h1v2h-1zm3 0h1v2h-1zm5 0h1v2h-1zm4 0h1v2h-1zm4 0h1v2h-1zm4 0h1v2h-1zm5 0h1v2h-1zm3 0h1v2h-1zm5 0h1v2h-1zm4 0h1v2h-1zm5 0h1v2h-1zm3 0h1v2h-1zm5 0h1v2h-1zm4 0h1v2h-1zm5 0h1v2h-1zm3 0h1v2h-1zm5 0h1v2h-1zm4 0h1v2h-1zm4 0h1v2h-1zm4 0h1v2h-1zm5 0h1v2h-1zm4 0h1v2h-1zm4 0h1v2h-1zm4 0h1v2h-1zm5 0h1v2h-1zm3 0h1v2h-1zm5 0h1v2h-1zm4 0h1v2h-1zm5 0h1v2h-1zm3 0h1v2h-1zm5 0h1v2h-1zm4 0h1v2h-1zm4 0h1v2h-1zm4 0h1v2h-1zm5 0h1v2h-1zm4 0h1v2h-1zm4 0h1v2h-1zm4 0h1v2h-1zm5 0h1v2h-1zm3 0h1v2h-1zm5 0h1v2h-1zm4 0h1v2h-1zm5 0h1v2h-1zm3 0h1v2h-1zm5 0h1v2h-1zm4 0h1v2h-1zm4 0h1v2h-1zm4 0h1v2h-1zm5 0h1v2h-1zm4 0h1v2h-1zm4 0h1v2h-1zm4 0h1v2h-1zm5 0h1v2h-1zm3 0h1v2h-1zm5 0h1v2h-1zm4 0h1v2h-1zm5 0h1v2h-1zm3 0h1v2h-1zm5 0h1v2h-1zm4 0h1v2h-1zm4 0h1v2h-1zm4 0h1v2h-1zm5 0h1v2h-1zm4 0h1v2h-1zm4 0h1v2h-1zm4 0h1v2h-1zm5 0h1v2h-1zm3 0h1v2h-1zm5 0h1v2h-1zm4 0h1v2h-1zm5 0h1v2h-1zm3 0h1v2h-1zm5 0h1v2h-1zm4 0h1v2h-1zm4 0h1v2h-1zm4 0h1v2h-1zm5 0h1v2h-1zm4 0h1v2h-1zm4 0h1v2h-1zm4 0h1v2h-1zm5 0h1v2h-1zm3 0h1v2h-1zm5 0h1v2h-1zm4 0h1v2h-1zm5 0h1v2h-1zm3 0h1v2h-1zm5 0h1v2h-1zm4 0h1v2h-1zm5 0h1v2h-1zm3 0h1v2h-1zm5 0h1v2h-1zm4 0h1v2h-1zm4 0h1v2h-1zm4 0h1v2h-1zm5 0h1v2h-1zm4 0h1v2h-1zm4 0h1v2h-1zm4 0h1v2h-1zm5 0h1v2h-1zm3 0h1v2h-1zm5 0h1v2h-1zm4 0h1v2h-1zm5 0h1v2h-1zm3 0h1v2h-1zm5 0h1v2h-1zm4 0h1v2h-1zm4 0h1v2h-1zm4 0h1v2h-1zm5 0h1v2h-1zm4 0h1v2h-1zm4 0h1v2h-1zm4 0h1v2h-1zm5 0h1v2h-1zm3 0h1v2h-1zm5 0h1v2h-1zm4 0h1v2h-1zm5 0h1v2h-1zm3 0h1v2h-1zm5 0h1v2h-1zm4 0h1v2h-1zm4 0h1v2h-1zm4 0h1v2h-1zm5 0h1v2h-1zm4 0h1v2h-1zm4 0h1v2h-1zm4 0h1v2h-1zm5 0h1v2h-1zm3 0h1v2h-1zm5 0h1v2h-1zm4 0h1v2h-1zm5 0h1v2h-1zm3 0h1v2h-1zm5 0h1v2h-1zm4 0h1v2h-1zm4 0h1v2h-1zm4 0h1v2h-1zm5 0h1v2h-1zm4 0h1v2h-1zm4 0h1v2h-1zm4 0h1v2h-1zm5 0h1v2h-1zm3 0h1v2h-1zm5 0h1v2h-1zm4 0h1v2h-1zm5 0h1v2h-1zm3 0h1v2h-1zm5 0h1v2h-1zm4 0h1v2h-1zm4 0h1v2h-1zm4 0h1v2h-1zm5 0h1v2h-1zm4 0h1v2h-1zM11 335h1v1h-1zm4 0h1v1h-1zm5 0h1v1h-1zm3 0h1v1h-1zm5 0h1v1h-1zm4 0h1v1h-1zm5 0h1v1h-1zm3 0h1v1h-1zm5 0h1v1h-1zm4 0h1v1h-1zm5 0h1v1h-1zm3 0h1v1h-1zm5 0h1v1h-1zm4 0h1v1h-1zm4 0h1v1h-1zm4 0h1v1h-1zm5 0h1v1h-1zm4 0h1v1h-1zm4 0h1v1h-1zm4 0h1v1h-1zm5 0h1v1h-1zm3 0h1v1h-1zm5 0h1v1h-1zm4 0h1v1h-1zm5 0h1v1h-1zm3 0h1v1h-1zm5 0h1v1h-1zm4 0h1v1h-1zm4 0h1v1h-1zm4 0h1v1h-1zm5 0h1v1h-1zm4 0h1v1h-1zm4 0h1v1h-1zm4 0h1v1h-1zm5 0h1v1h-1zm3 0h1v1h-1zm5 0h1v1h-1zm4 0h1v1h-1zm5 0h1v1h-1zm3 0h1v1h-1zm5 0h1v1h-1zm4 0h1v1h-1zm4 0h1v1h-1zm4 0h1v1h-1zm5 0h1v1h-1zm4 0h1v1h-1zm4 0h1v1h-1zm4 0h1v1h-1zm5 0h1v1h-1zm3 0h1v1h-1zm5 0h1v1h-1zm4 0h1v1h-1zm5 0h1v1h-1zm3 0h1v1h-1zm5 0h1v1h-1zm4 0h1v1h-1zm4 0h1v1h-1zm4 0h1v1h-1zm5 0h1v1h-1zm4 0h1v1h-1zm4 0h1v1h-1zm4 0h1v1h-1zm5 0h1v1h-1zm3 0h1v1h-1zm5 0h1v1h-1zm4 0h1v1h-1zm5 0h1v1h-1zm3 0h1v1h-1zm5 0h1v1h-1zm4 0h1v1h-1zm5 0h1v1h-1zm3 0h1v1h-1zm5 0h1v1h-1zm4 0h1v1h-1zm4 0h1v1h-1zm4 0h1v1h-1zm5 0h1v1h-1zm3 0h1v1h-1zm5 0h1v1h-1zm4 0h1v1h-1zm5 0h1v1h-1zm3 0h1v1h-1zm5 0h1v1h-1zm4 0h1v1h-1zm5 0h1v1h-1zm3 0h1v1h-1zm5 0h1v1h-1zm4 0h1v1h-1zm4 0h1v1h-1zm4 0h1v1h-1zm5 0h1v1h-1zm4 0h1v1h-1zm4 0h1v1h-1zm4 0h1v1h-1zm5 0h1v1h-1zm3 0h1v1h-1zm5 0h1v1h-1zm4 0h1v1h-1zm5 0h1v1h-1zm3 0h1v1h-1zm5 0h1v1h-1zm4 0h1v1h-1zm4 0h1v1h-1zm4 0h1v1h-1zm5 0h1v1h-1zm4 0h1v1h-1zm4 0h1v1h-1zm4 0h1v1h-1zm5 0h1v1h-1zm3 0h1v1h-1zm5 0h1v1h-1zm4 0h1v1h-1zm5 0h1v1h-1zm3 0h1v1h-1zm5 0h1v1h-1zm4 0h1v1h-1zm4 0h1v1h-1zm4 0h1v1h-1zm5 0h1v1h-1zm4 0h1v1h-1zm4 0h1v1h-1zm4 0h1v1h-1zm5 0h1v1h-1zm3 0h1v1h-1zm5 0h1v1h-1zm4 0h1v1h-1zm5 0h1v1h-1zm3 0h1v1h-1zm5 0h1v1h-1zm4 0h1v1h-1zm4 0h1v1h-1zm4 0h1v1h-1zm5 0h1v1h-1zm4 0h1v1h-1zm4 0h1v1h-1zm4 0h1v1h-1zm5 0h1v1h-1zm3 0h1v1h-1zm5 0h1v1h-1zm4 0h1v1h-1zm5 0h1v1h-1zm3 0h1v1h-1zm5 0h1v1h-1zm4 0h1v1h-1zm5 0h1v1h-1zm3 0h1v1h-1zm5 0h1v1h-1zm4 0h1v1h-1zm4 0h1v1h-1zm4 0h1v1h-1zm5 0h1v1h-1zm3 0h1v1h-1zm5 0h1v1h-1zm4 0h1v1h-1zm5 0h1v1h-1zm3 0h1v1h-1zm5 0h1v1h-1zm4 0h1v1h-1zm5 0h1v1h-1zm3 0h1v1h-1zm5 0h1v1h-1zm4 0h1v1h-1zm4 0h1v1h-1zm4 0h1v1h-1zm5 0h1v1h-1zm4 0h1v1h-1zm4 0h1v1h-1zm4 0h1v1h-1zm5 0h1v1h-1zm3 0h1v1h-1zm5 0h1v1h-1zm4 0h1v1h-1zm5 0h1v1h-1zm3 0h1v1h-1zm5 0h1v1h-1zm4 0h1v1h-1zm4 0h1v1h-1zm4 0h1v1h-1zm5 0h1v1h-1zm4 0h1v1h-1zm4 0h1v1h-1zm4 0h1v1h-1zm5 0h1v1h-1zm3 0h1v1h-1zm5 0h1v1h-1zm4 0h1v1h-1zm5 0h1v1h-1zm3 0h1v1h-1zm5 0h1v1h-1zm4 0h1v1h-1zm4 0h1v1h-1zm4 0h1v1h-1zm5 0h1v1h-1zm4 0h1v1h-1zm4 0h1v1h-1zm4 0h1v1h-1zm5 0h1v1h-1zm3 0h1v1h-1zm5 0h1v1h-1zm4 0h1v1h-1zm5 0h1v1h-1zm3 0h1v1h-1zm5 0h1v1h-1zm4 0h1v1h-1zm4 0h1v1h-1zm4 0h1v1h-1zm5 0h1v1h-1zm4 0h1v1h-1zm4 0h1v1h-1zm4 0h1v1h-1zm5 0h1v1h-1zm3 0h1v1h-1zm5 0h1v1h-1zm4 0h1v1h-1zm5 0h1v1h-1zm3 0h1v1h-1zm5 0h1v1h-1zm4 0h1v1h-1zm4 0h1v1h-1zm4 0h1v1h-1zm5 0h1v1h-1zm4 0h1v1h-1zm4 0h1v1h-1zm4 0h1v1h-1zm5 0h1v1h-1zm3 0h1v1h-1zm5 0h1v1h-1zm4 0h1v1h-1zm5 0h1v1h-1zm3 0h1v1h-1zm5 0h1v1h-1zm4 0h1v1h-1zm5 0h1v1h-1zm3 0h1v1h-1zm5 0h1v1h-1zm4 0h1v1h-1zm4 0h1v1h-1zm4 0h1v1h-1zm5 0h1v1h-1zm4 0h1v1h-1zm4 0h1v1h-1zm4 0h1v1h-1zm5 0h1v1h-1zm3 0h1v1h-1zm5 0h1v1h-1zm4 0h1v1h-1zm5 0h1v1h-1zm3 0h1v1h-1zm5 0h1v1h-1zm4 0h1v1h-1zm4 0h1v1h-1zm4 0h1v1h-1zm5 0h1v1h-1zm4 0h1v1h-1zm4 0h1v1h-1zm4 0h1v1h-1zm5 0h1v1h-1zm3 0h1v1h-1zm5 0h1v1h-1zm4 0h1v1h-1zm5 0h1v1h-1zm3 0h1v1h-1zm5 0h1v1h-1zm4 0h1v1h-1zm4 0h1v1h-1zm4 0h1v1h-1zm5 0h1v1h-1zm4 0h1v1h-1zm4 0h1v1h-1zm4 0h1v1h-1zm5 0h1v1h-1zm3 0h1v1h-1zm5 0h1v1h-1zm4 0h1v1h-1zm5 0h1v1h-1zm3 0h1v1h-1zm5 0h1v1h-1zm4 0h1v1h-1zm4 0h1v1h-1zm4 0h1v1h-1zm5 0h1v1h-1zm4 0h1v1h-1zm4 0h1v1h-1zm4 0h1v1h-1zm5 0h1v1h-1zm3 0h1v1h-1zm5 0h1v1h-1zm4 0h1v1h-1zm5 0h1v1h-1zm3 0h1v1h-1zm5 0h1v1h-1zm4 0h1v1h-1zm4 0h1v1h-1zm4 0h1v1h-1zm5 0h1v1h-1zm4 0h1v1h-1zM11 338h1v2h-1zm4 0h1v2h-1zm5 0h1v2h-1zm3 0h1v2h-1zm5 0h1v2h-1zm4 0h1v2h-1zm5 0h1v2h-1zm3 0h1v2h-1zm5 0h1v2h-1zm4 0h1v2h-1zm5 0h1v2h-1zm3 0h1v2h-1zm5 0h1v2h-1zm4 0h1v2h-1zm4 0h1v2h-1zm4 0h1v2h-1zm5 0h1v2h-1zm4 0h1v2h-1zm4 0h1v2h-1zm4 0h1v2h-1zm5 0h1v2h-1zm3 0h1v2h-1zm5 0h1v2h-1zm4 0h1v2h-1zm5 0h1v2h-1zm3 0h1v2h-1zm5 0h1v2h-1zm4 0h1v2h-1zm4 0h1v2h-1zm4 0h1v2h-1zm5 0h1v2h-1zm4 0h1v2h-1zm4 0h1v2h-1zm4 0h1v2h-1zm5 0h1v2h-1zm3 0h1v2h-1zm5 0h1v2h-1zm4 0h1v2h-1zm5 0h1v2h-1zm3 0h1v2h-1zm5 0h1v2h-1zm4 0h1v2h-1zm4 0h1v2h-1zm4 0h1v2h-1zm5 0h1v2h-1zm4 0h1v2h-1zm4 0h1v2h-1zm4 0h1v2h-1zm5 0h1v2h-1zm3 0h1v2h-1zm5 0h1v2h-1zm4 0h1v2h-1zm5 0h1v2h-1zm3 0h1v2h-1zm5 0h1v2h-1zm4 0h1v2h-1zm4 0h1v2h-1zm4 0h1v2h-1zm5 0h1v2h-1zm4 0h1v2h-1zm4 0h1v2h-1zm4 0h1v2h-1zm5 0h1v2h-1zm3 0h1v2h-1zm5 0h1v2h-1zm4 0h1v2h-1zm5 0h1v2h-1zm3 0h1v2h-1zm5 0h1v2h-1zm4 0h1v2h-1zm5 0h1v2h-1zm3 0h1v2h-1zm5 0h1v2h-1zm4 0h1v2h-1zm4 0h1v2h-1zm4 0h1v2h-1zm5 0h1v2h-1zm3 0h1v2h-1zm5 0h1v2h-1zm4 0h1v2h-1zm5 0h1v2h-1zm3 0h1v2h-1zm5 0h1v2h-1zm4 0h1v2h-1zm5 0h1v2h-1zm3 0h1v2h-1zm5 0h1v2h-1zm4 0h1v2h-1zm4 0h1v2h-1zm4 0h1v2h-1zm5 0h1v2h-1zm4 0h1v2h-1zm4 0h1v2h-1zm4 0h1v2h-1zm5 0h1v2h-1zm3 0h1v2h-1zm5 0h1v2h-1zm4 0h1v2h-1zm5 0h1v2h-1zm3 0h1v2h-1zm5 0h1v2h-1zm4 0h1v2h-1zm4 0h1v2h-1zm4 0h1v2h-1zm5 0h1v2h-1zm4 0h1v2h-1zm4 0h1v2h-1zm4 0h1v2h-1zm5 0h1v2h-1zm3 0h1v2h-1zm5 0h1v2h-1zm4 0h1v2h-1zm5 0h1v2h-1zm3 0h1v2h-1zm5 0h1v2h-1zm4 0h1v2h-1zm4 0h1v2h-1zm4 0h1v2h-1zm5 0h1v2h-1zm4 0h1v2h-1zm4 0h1v2h-1zm4 0h1v2h-1zm5 0h1v2h-1zm3 0h1v2h-1zm5 0h1v2h-1zm4 0h1v2h-1zm5 0h1v2h-1zm3 0h1v2h-1zm5 0h1v2h-1zm4 0h1v2h-1zm4 0h1v2h-1zm4 0h1v2h-1zm5 0h1v2h-1zm4 0h1v2h-1zm4 0h1v2h-1zm4 0h1v2h-1zm5 0h1v2h-1zm3 0h1v2h-1zm5 0h1v2h-1zm4 0h1v2h-1zm5 0h1v2h-1zm3 0h1v2h-1zm5 0h1v2h-1zm4 0h1v2h-1zm5 0h1v2h-1zm3 0h1v2h-1zm5 0h1v2h-1zm4 0h1v2h-1zm4 0h1v2h-1zm4 0h1v2h-1zm5 0h1v2h-1zm3 0h1v2h-1zm5 0h1v2h-1zm4 0h1v2h-1zm5 0h1v2h-1zm3 0h1v2h-1zm5 0h1v2h-1zm4 0h1v2h-1zm5 0h1v2h-1zm3 0h1v2h-1zm5 0h1v2h-1zm4 0h1v2h-1zm4 0h1v2h-1zm4 0h1v2h-1zm5 0h1v2h-1zm4 0h1v2h-1zm4 0h1v2h-1zm4 0h1v2h-1zm5 0h1v2h-1zm3 0h1v2h-1zm5 0h1v2h-1zm4 0h1v2h-1zm5 0h1v2h-1zm3 0h1v2h-1zm5 0h1v2h-1zm4 0h1v2h-1zm4 0h1v2h-1zm4 0h1v2h-1zm5 0h1v2h-1zm4 0h1v2h-1zm4 0h1v2h-1zm4 0h1v2h-1zm5 0h1v2h-1zm3 0h1v2h-1zm5 0h1v2h-1zm4 0h1v2h-1zm5 0h1v2h-1zm3 0h1v2h-1zm5 0h1v2h-1zm4 0h1v2h-1zm4 0h1v2h-1zm4 0h1v2h-1zm5 0h1v2h-1zm4 0h1v2h-1zm4 0h1v2h-1zm4 0h1v2h-1zm5 0h1v2h-1zm3 0h1v2h-1zm5 0h1v2h-1zm4 0h1v2h-1zm5 0h1v2h-1zm3 0h1v2h-1zm5 0h1v2h-1zm4 0h1v2h-1zm4 0h1v2h-1zm4 0h1v2h-1zm5 0h1v2h-1zm4 0h1v2h-1zm4 0h1v2h-1zm4 0h1v2h-1zm5 0h1v2h-1zm3 0h1v2h-1zm5 0h1v2h-1zm4 0h1v2h-1zm5 0h1v2h-1zm3 0h1v2h-1zm5 0h1v2h-1zm4 0h1v2h-1zm4 0h1v2h-1zm4 0h1v2h-1zm5 0h1v2h-1zm4 0h1v2h-1zm4 0h1v2h-1zm4 0h1v2h-1zm5 0h1v2h-1zm3 0h1v2h-1zm5 0h1v2h-1zm4 0h1v2h-1zm5 0h1v2h-1zm3 0h1v2h-1zm5 0h1v2h-1zm4 0h1v2h-1zm5 0h1v2h-1zm3 0h1v2h-1zm5 0h1v2h-1zm4 0h1v2h-1zm4 0h1v2h-1zm4 0h1v2h-1zm5 0h1v2h-1zm4 0h1v2h-1zm4 0h1v2h-1zm4 0h1v2h-1zm5 0h1v2h-1zm3 0h1v2h-1zm5 0h1v2h-1zm4 0h1v2h-1zm5 0h1v2h-1zm3 0h1v2h-1zm5 0h1v2h-1zm4 0h1v2h-1zm4 0h1v2h-1zm4 0h1v2h-1zm5 0h1v2h-1zm4 0h1v2h-1zm4 0h1v2h-1zm4 0h1v2h-1zm5 0h1v2h-1zm3 0h1v2h-1zm5 0h1v2h-1zm4 0h1v2h-1zm5 0h1v2h-1zm3 0h1v2h-1zm5 0h1v2h-1zm4 0h1v2h-1zm4 0h1v2h-1zm4 0h1v2h-1zm5 0h1v2h-1zm4 0h1v2h-1zm4 0h1v2h-1zm4 0h1v2h-1zm5 0h1v2h-1zm3 0h1v2h-1zm5 0h1v2h-1zm4 0h1v2h-1zm5 0h1v2h-1zm3 0h1v2h-1zm5 0h1v2h-1zm4 0h1v2h-1zm4 0h1v2h-1zm4 0h1v2h-1zm5 0h1v2h-1zm4 0h1v2h-1zm4 0h1v2h-1zm4 0h1v2h-1zm5 0h1v2h-1zm3 0h1v2h-1zm5 0h1v2h-1zm4 0h1v2h-1zm5 0h1v2h-1zm3 0h1v2h-1zm5 0h1v2h-1zm4 0h1v2h-1zm4 0h1v2h-1zm4 0h1v2h-1zm5 0h1v2h-1zm4 0h1v2h-1zM11 541h1v2h-1zm4 0h1v2h-1zm5 0h1v2h-1zm3 0h1v2h-1zm5 0h1v2h-1zm4 0h1v2h-1zm5 0h1v2h-1zm3 0h1v2h-1zm5 0h1v2h-1zm4 0h1v2h-1zm5 0h1v2h-1zm3 0h1v2h-1zm5 0h1v2h-1zm4 0h1v2h-1zm4 0h1v2h-1zm4 0h1v2h-1zm5 0h1v2h-1zm4 0h1v2h-1zm4 0h1v2h-1zm4 0h1v2h-1zm5 0h1v2h-1zm3 0h1v2h-1zm5 0h1v2h-1zm4 0h1v2h-1zm5 0h1v2h-1zm3 0h1v2h-1zm5 0h1v2h-1zm4 0h1v2h-1zm4 0h1v2h-1zm4 0h1v2h-1zm5 0h1v2h-1zm4 0h1v2h-1zm4 0h1v2h-1zm4 0h1v2h-1zm5 0h1v2h-1zm3 0h1v2h-1zm5 0h1v2h-1zm4 0h1v2h-1zm5 0h1v2h-1zm3 0h1v2h-1zm5 0h1v2h-1zm4 0h1v2h-1zm4 0h1v2h-1zm4 0h1v2h-1zm5 0h1v2h-1zm4 0h1v2h-1zm4 0h1v2h-1zm4 0h1v2h-1zm5 0h1v2h-1zm3 0h1v2h-1zm5 0h1v2h-1zm4 0h1v2h-1zm5 0h1v2h-1zm3 0h1v2h-1zm5 0h1v2h-1zm4 0h1v2h-1zm4 0h1v2h-1zm4 0h1v2h-1zm5 0h1v2h-1zm4 0h1v2h-1zm4 0h1v2h-1zm4 0h1v2h-1zm5 0h1v2h-1zm3 0h1v2h-1zm5 0h1v2h-1zm4 0h1v2h-1zm5 0h1v2h-1zm3 0h1v2h-1zm5 0h1v2h-1zm4 0h1v2h-1zm5 0h1v2h-1zm3 0h1v2h-1zm5 0h1v2h-1zm4 0h1v2h-1zm4 0h1v2h-1zm4 0h1v2h-1zm5 0h1v2h-1zm3 0h1v2h-1zm5 0h1v2h-1zm4 0h1v2h-1zm5 0h1v2h-1zm3 0h1v2h-1zm5 0h1v2h-1zm4 0h1v2h-1zm5 0h1v2h-1zm3 0h1v2h-1zm5 0h1v2h-1zm4 0h1v2h-1zm4 0h1v2h-1zm4 0h1v2h-1zm5 0h1v2h-1zm4 0h1v2h-1zm4 0h1v2h-1zm4 0h1v2h-1zm5 0h1v2h-1zm3 0h1v2h-1zm5 0h1v2h-1zm4 0h1v2h-1zm5 0h1v2h-1zm3 0h1v2h-1zm5 0h1v2h-1zm4 0h1v2h-1zm4 0h1v2h-1zm4 0h1v2h-1zm5 0h1v2h-1zm4 0h1v2h-1zm4 0h1v2h-1zm4 0h1v2h-1zm5 0h1v2h-1zm3 0h1v2h-1zm5 0h1v2h-1zm4 0h1v2h-1zm5 0h1v2h-1zm3 0h1v2h-1zm5 0h1v2h-1zm4 0h1v2h-1zm4 0h1v2h-1zm4 0h1v2h-1zm5 0h1v2h-1zm4 0h1v2h-1zm4 0h1v2h-1zm4 0h1v2h-1zm5 0h1v2h-1zm3 0h1v2h-1zm5 0h1v2h-1zm4 0h1v2h-1zm5 0h1v2h-1zm3 0h1v2h-1zm5 0h1v2h-1zm4 0h1v2h-1zm4 0h1v2h-1zm4 0h1v2h-1zm5 0h1v2h-1zm4 0h1v2h-1zm4 0h1v2h-1zm4 0h1v2h-1zm5 0h1v2h-1zm3 0h1v2h-1zm5 0h1v2h-1zm4 0h1v2h-1zm5 0h1v2h-1zm3 0h1v2h-1zm5 0h1v2h-1zm4 0h1v2h-1zM11 546h1v2h-1zm4 0h1v2h-1zm5 0h1v2h-1zm3 0h1v2h-1zm5 0h1v2h-1zm4 0h1v2h-1zm5 0h1v2h-1zm3 0h1v2h-1zm5 0h1v2h-1zm4 0h1v2h-1zm5 0h1v2h-1zm3 0h1v2h-1zm5 0h1v2h-1zm4 0h1v2h-1zm4 0h1v2h-1zm4 0h1v2h-1zm5 0h1v2h-1zm4 0h1v2h-1zm4 0h1v2h-1zm4 0h1v2h-1zm5 0h1v2h-1zm3 0h1v2h-1zm5 0h1v2h-1zm4 0h1v2h-1zm5 0h1v2h-1zm3 0h1v2h-1zm5 0h1v2h-1zm4 0h1v2h-1zm4 0h1v2h-1zm4 0h1v2h-1zm5 0h1v2h-1zm4 0h1v2h-1zm4 0h1v2h-1zm4 0h1v2h-1zm5 0h1v2h-1zm3 0h1v2h-1zm5 0h1v2h-1zm4 0h1v2h-1zm5 0h1v2h-1zm3 0h1v2h-1zm5 0h1v2h-1zm4 0h1v2h-1zm4 0h1v2h-1zm4 0h1v2h-1zm5 0h1v2h-1zm4 0h1v2h-1zm4 0h1v2h-1zm4 0h1v2h-1zm5 0h1v2h-1zm3 0h1v2h-1zm5 0h1v2h-1zm4 0h1v2h-1zm5 0h1v2h-1zm3 0h1v2h-1zm5 0h1v2h-1zm4 0h1v2h-1zm4 0h1v2h-1zm4 0h1v2h-1zm5 0h1v2h-1zm4 0h1v2h-1zm4 0h1v2h-1zm4 0h1v2h-1zm5 0h1v2h-1zm3 0h1v2h-1zm5 0h1v2h-1zm4 0h1v2h-1zm5 0h1v2h-1zm3 0h1v2h-1zm5 0h1v2h-1zm4 0h1v2h-1zm5 0h1v2h-1zm3 0h1v2h-1zm5 0h1v2h-1zm4 0h1v2h-1zm4 0h1v2h-1zm4 0h1v2h-1zm5 0h1v2h-1zm3 0h1v2h-1zm5 0h1v2h-1zm4 0h1v2h-1zm5 0h1v2h-1zm3 0h1v2h-1zm5 0h1v2h-1zm4 0h1v2h-1zm5 0h1v2h-1zm3 0h1v2h-1zm5 0h1v2h-1zm4 0h1v2h-1zm4 0h1v2h-1zm4 0h1v2h-1zm5 0h1v2h-1zm4 0h1v2h-1zm4 0h1v2h-1zm4 0h1v2h-1zm5 0h1v2h-1zm3 0h1v2h-1zm5 0h1v2h-1zm4 0h1v2h-1zm5 0h1v2h-1zm3 0h1v2h-1zm5 0h1v2h-1zm4 0h1v2h-1zm4 0h1v2h-1zm4 0h1v2h-1zm5 0h1v2h-1zm4 0h1v2h-1zm4 0h1v2h-1zm4 0h1v2h-1zm5 0h1v2h-1zm3 0h1v2h-1zm5 0h1v2h-1zm4 0h1v2h-1zm5 0h1v2h-1zm3 0h1v2h-1zm5 0h1v2h-1zm4 0h1v2h-1zm4 0h1v2h-1zm4 0h1v2h-1zm5 0h1v2h-1zm4 0h1v2h-1zm4 0h1v2h-1zm4 0h1v2h-1zm5 0h1v2h-1zm3 0h1v2h-1zm5 0h1v2h-1zm4 0h1v2h-1zm5 0h1v2h-1zm3 0h1v2h-1zm5 0h1v2h-1zm4 0h1v2h-1zm4 0h1v2h-1zm4 0h1v2h-1zm5 0h1v2h-1zm4 0h1v2h-1zm4 0h1v2h-1zm4 0h1v2h-1zm5 0h1v2h-1zm3 0h1v2h-1zm5 0h1v2h-1zm4 0h1v2h-1zm5 0h1v2h-1zm3 0h1v2h-1zm5 0h1v2h-1zm4 0h1v2h-1zM11 550h1v2h-1zm4 0h1v2h-1zm5 0h1v2h-1zm3 0h1v2h-1zm5 0h1v2h-1zm4 0h1v2h-1zm5 0h1v2h-1zm3 0h1v2h-1zm5 0h1v2h-1zm4 0h1v2h-1zm5 0h1v2h-1zm3 0h1v2h-1zm5 0h1v2h-1zm4 0h1v2h-1zm4 0h1v2h-1zm4 0h1v2h-1zm5 0h1v2h-1zm4 0h1v2h-1zm4 0h1v2h-1zm4 0h1v2h-1zm5 0h1v2h-1zm3 0h1v2h-1zm5 0h1v2h-1zm4 0h1v2h-1zm5 0h1v2h-1zm3 0h1v2h-1zm5 0h1v2h-1zm4 0h1v2h-1zm4 0h1v2h-1zm4 0h1v2h-1zm5 0h1v2h-1zm4 0h1v2h-1zm4 0h1v2h-1zm4 0h1v2h-1zm5 0h1v2h-1zm3 0h1v2h-1zm5 0h1v2h-1zm4 0h1v2h-1zm5 0h1v2h-1zm3 0h1v2h-1zm5 0h1v2h-1zm4 0h1v2h-1zm4 0h1v2h-1zm4 0h1v2h-1zm5 0h1v2h-1zm4 0h1v2h-1zm4 0h1v2h-1zm4 0h1v2h-1zm5 0h1v2h-1zm3 0h1v2h-1zm5 0h1v2h-1zm4 0h1v2h-1zm5 0h1v2h-1zm3 0h1v2h-1zm5 0h1v2h-1zm4 0h1v2h-1zm4 0h1v2h-1zm4 0h1v2h-1zm5 0h1v2h-1zm4 0h1v2h-1zm4 0h1v2h-1zm4 0h1v2h-1zm5 0h1v2h-1zm3 0h1v2h-1zm5 0h1v2h-1zm4 0h1v2h-1zm5 0h1v2h-1zm3 0h1v2h-1zm5 0h1v2h-1zm4 0h1v2h-1zm5 0h1v2h-1zm3 0h1v2h-1zm5 0h1v2h-1zm4 0h1v2h-1zm4 0h1v2h-1zm4 0h1v2h-1zm5 0h1v2h-1zm3 0h1v2h-1zm5 0h1v2h-1zm4 0h1v2h-1zm5 0h1v2h-1zm3 0h1v2h-1zm5 0h1v2h-1zm4 0h1v2h-1zm5 0h1v2h-1zm3 0h1v2h-1zm5 0h1v2h-1zm4 0h1v2h-1zm4 0h1v2h-1zm4 0h1v2h-1zm5 0h1v2h-1zm4 0h1v2h-1zm4 0h1v2h-1zm4 0h1v2h-1zm5 0h1v2h-1zm3 0h1v2h-1zm5 0h1v2h-1zm4 0h1v2h-1zm5 0h1v2h-1zm3 0h1v2h-1zm5 0h1v2h-1zm4 0h1v2h-1zm4 0h1v2h-1zm4 0h1v2h-1zm5 0h1v2h-1zm4 0h1v2h-1zm4 0h1v2h-1zm4 0h1v2h-1zm5 0h1v2h-1zm3 0h1v2h-1zm5 0h1v2h-1zm4 0h1v2h-1zm5 0h1v2h-1zm3 0h1v2h-1zm5 0h1v2h-1zm4 0h1v2h-1zm4 0h1v2h-1zm4 0h1v2h-1zm5 0h1v2h-1zm4 0h1v2h-1zm4 0h1v2h-1zm4 0h1v2h-1zm5 0h1v2h-1zm3 0h1v2h-1zm5 0h1v2h-1zm4 0h1v2h-1zm5 0h1v2h-1zm3 0h1v2h-1zm5 0h1v2h-1zm4 0h1v2h-1zm4 0h1v2h-1zm4 0h1v2h-1zm5 0h1v2h-1zm4 0h1v2h-1zm4 0h1v2h-1zm4 0h1v2h-1zm5 0h1v2h-1zm3 0h1v2h-1zm5 0h1v2h-1zm4 0h1v2h-1zm5 0h1v2h-1zm3 0h1v2h-1zm5 0h1v2h-1zm4 0h1v2h-1zM11 554h1v2h-1zm4 0h1v2h-1zm5 0h1v2h-1zm3 0h1v2h-1zm5 0h1v2h-1zm4 0h1v2h-1zm5 0h1v2h-1zm3 0h1v2h-1zm5 0h1v2h-1zm4 0h1v2h-1zm5 0h1v2h-1zm3 0h1v2h-1zm5 0h1v2h-1zm4 0h1v2h-1zm4 0h1v2h-1zm4 0h1v2h-1zm5 0h1v2h-1zm4 0h1v2h-1zm4 0h1v2h-1zm4 0h1v2h-1zm5 0h1v2h-1zm3 0h1v2h-1zm5 0h1v2h-1zm4 0h1v2h-1zm5 0h1v2h-1zm3 0h1v2h-1zm5 0h1v2h-1zm4 0h1v2h-1zm4 0h1v2h-1zm4 0h1v2h-1zm5 0h1v2h-1zm4 0h1v2h-1zm4 0h1v2h-1zm4 0h1v2h-1zm5 0h1v2h-1zm3 0h1v2h-1zm5 0h1v2h-1zm4 0h1v2h-1zm5 0h1v2h-1zm3 0h1v2h-1zm5 0h1v2h-1zm4 0h1v2h-1zm4 0h1v2h-1zm4 0h1v2h-1zm5 0h1v2h-1zm4 0h1v2h-1zm4 0h1v2h-1zm4 0h1v2h-1zm5 0h1v2h-1zm3 0h1v2h-1zm5 0h1v2h-1zm4 0h1v2h-1zm5 0h1v2h-1zm3 0h1v2h-1zm5 0h1v2h-1zm4 0h1v2h-1zm4 0h1v2h-1zm4 0h1v2h-1zm5 0h1v2h-1zm4 0h1v2h-1zm4 0h1v2h-1zm4 0h1v2h-1zm5 0h1v2h-1zm3 0h1v2h-1zm5 0h1v2h-1zm4 0h1v2h-1zm5 0h1v2h-1zm3 0h1v2h-1zm5 0h1v2h-1zm4 0h1v2h-1zm5 0h1v2h-1zm3 0h1v2h-1zm5 0h1v2h-1zm4 0h1v2h-1zm4 0h1v2h-1zm4 0h1v2h-1zm5 0h1v2h-1zm3 0h1v2h-1zm5 0h1v2h-1zm4 0h1v2h-1zm5 0h1v2h-1zm3 0h1v2h-1zm5 0h1v2h-1zm4 0h1v2h-1zm5 0h1v2h-1zm3 0h1v2h-1zm5 0h1v2h-1zm4 0h1v2h-1zm4 0h1v2h-1zm4 0h1v2h-1zm5 0h1v2h-1zm4 0h1v2h-1zm4 0h1v2h-1zm4 0h1v2h-1zm5 0h1v2h-1zm3 0h1v2h-1zm5 0h1v2h-1zm4 0h1v2h-1zm5 0h1v2h-1zm3 0h1v2h-1zm5 0h1v2h-1zm4 0h1v2h-1zm4 0h1v2h-1zm4 0h1v2h-1zm5 0h1v2h-1zm4 0h1v2h-1zm4 0h1v2h-1zm4 0h1v2h-1zm5 0h1v2h-1zm3 0h1v2h-1zm5 0h1v2h-1zm4 0h1v2h-1zm5 0h1v2h-1zm3 0h1v2h-1zm5 0h1v2h-1zm4 0h1v2h-1zm4 0h1v2h-1zm4 0h1v2h-1zm5 0h1v2h-1zm4 0h1v2h-1zm4 0h1v2h-1zm4 0h1v2h-1zm5 0h1v2h-1zm3 0h1v2h-1zm5 0h1v2h-1zm4 0h1v2h-1zm5 0h1v2h-1zm3 0h1v2h-1zm5 0h1v2h-1zm4 0h1v2h-1zm4 0h1v2h-1zm4 0h1v2h-1zm5 0h1v2h-1zm4 0h1v2h-1zm4 0h1v2h-1zm4 0h1v2h-1zm5 0h1v2h-1zm3 0h1v2h-1zm5 0h1v2h-1zm4 0h1v2h-1zm5 0h1v2h-1zm3 0h1v2h-1zm5 0h1v2h-1zm4 0h1v2h-1zM11 558h1v2h-1zm4 0h1v2h-1zm5 0h1v2h-1zm3 0h1v2h-1zm5 0h1v2h-1zm4 0h1v2h-1zm5 0h1v2h-1zm3 0h1v2h-1zm5 0h1v2h-1zm4 0h1v2h-1zm5 0h1v2h-1zm3 0h1v2h-1zm5 0h1v2h-1zm4 0h1v2h-1zm4 0h1v2h-1zm4 0h1v2h-1zm5 0h1v2h-1zm4 0h1v2h-1zm4 0h1v2h-1zm4 0h1v2h-1zm5 0h1v2h-1zm3 0h1v2h-1zm5 0h1v2h-1zm4 0h1v2h-1zm5 0h1v2h-1zm3 0h1v2h-1zm5 0h1v2h-1zm4 0h1v2h-1zm4 0h1v2h-1zm4 0h1v2h-1zm5 0h1v2h-1zm4 0h1v2h-1zm4 0h1v2h-1zm4 0h1v2h-1zm5 0h1v2h-1zm3 0h1v2h-1zm5 0h1v2h-1zm4 0h1v2h-1zm5 0h1v2h-1zm3 0h1v2h-1zm5 0h1v2h-1zm4 0h1v2h-1zm4 0h1v2h-1zm4 0h1v2h-1zm5 0h1v2h-1zm4 0h1v2h-1zm4 0h1v2h-1zm4 0h1v2h-1zm5 0h1v2h-1zm3 0h1v2h-1zm5 0h1v2h-1zm4 0h1v2h-1zm5 0h1v2h-1zm3 0h1v2h-1zm5 0h1v2h-1zm4 0h1v2h-1zm4 0h1v2h-1zm4 0h1v2h-1zm5 0h1v2h-1zm4 0h1v2h-1zm4 0h1v2h-1zm4 0h1v2h-1zm5 0h1v2h-1zm3 0h1v2h-1zm5 0h1v2h-1zm4 0h1v2h-1zm5 0h1v2h-1zm3 0h1v2h-1zm5 0h1v2h-1zm4 0h1v2h-1zm5 0h1v2h-1zm3 0h1v2h-1zm5 0h1v2h-1zm4 0h1v2h-1zm4 0h1v2h-1zm4 0h1v2h-1zm5 0h1v2h-1zm3 0h1v2h-1zm5 0h1v2h-1zm4 0h1v2h-1zm5 0h1v2h-1zm3 0h1v2h-1zm5 0h1v2h-1zm4 0h1v2h-1zm5 0h1v2h-1zm3 0h1v2h-1zm5 0h1v2h-1zm4 0h1v2h-1zm4 0h1v2h-1zm4 0h1v2h-1zm5 0h1v2h-1zm4 0h1v2h-1zm4 0h1v2h-1zm4 0h1v2h-1zm5 0h1v2h-1zm3 0h1v2h-1zm5 0h1v2h-1zm4 0h1v2h-1zm5 0h1v2h-1zm3 0h1v2h-1zm5 0h1v2h-1zm4 0h1v2h-1zm4 0h1v2h-1zm4 0h1v2h-1zm5 0h1v2h-1zm4 0h1v2h-1zm4 0h1v2h-1zm4 0h1v2h-1zm5 0h1v2h-1zm3 0h1v2h-1zm5 0h1v2h-1zm4 0h1v2h-1zm5 0h1v2h-1zm3 0h1v2h-1zm5 0h1v2h-1zm4 0h1v2h-1zm4 0h1v2h-1zm4 0h1v2h-1zm5 0h1v2h-1zm4 0h1v2h-1zm4 0h1v2h-1zm4 0h1v2h-1zm5 0h1v2h-1zm3 0h1v2h-1zm5 0h1v2h-1zm4 0h1v2h-1zm5 0h1v2h-1zm3 0h1v2h-1zm5 0h1v2h-1zm4 0h1v2h-1zm4 0h1v2h-1zm4 0h1v2h-1zm5 0h1v2h-1zm4 0h1v2h-1zm4 0h1v2h-1zm4 0h1v2h-1zm5 0h1v2h-1zm3 0h1v2h-1zm5 0h1v2h-1zm4 0h1v2h-1zm5 0h1v2h-1zm3 0h1v2h-1zm5 0h1v2h-1zm4 0h1v2h-1zM11 563h1v2h-1zm4 0h1v2h-1zm5 0h1v2h-1zm3 0h1v2h-1zm5 0h1v2h-1zm4 0h1v2h-1zm5 0h1v2h-1zm3 0h1v2h-1zm5 0h1v2h-1zm4 0h1v2h-1zm5 0h1v2h-1zm3 0h1v2h-1zm5 0h1v2h-1zm4 0h1v2h-1zm4 0h1v2h-1zm4 0h1v2h-1zm5 0h1v2h-1zm4 0h1v2h-1zm4 0h1v2h-1zm4 0h1v2h-1zm5 0h1v2h-1zm3 0h1v2h-1zm5 0h1v2h-1zm4 0h1v2h-1zm5 0h1v2h-1zm3 0h1v2h-1zm5 0h1v2h-1zm4 0h1v2h-1zm4 0h1v2h-1zm4 0h1v2h-1zm5 0h1v2h-1zm4 0h1v2h-1zm4 0h1v2h-1zm4 0h1v2h-1zm5 0h1v2h-1zm3 0h1v2h-1zm5 0h1v2h-1zm4 0h1v2h-1zm5 0h1v2h-1zm3 0h1v2h-1zm5 0h1v2h-1zm4 0h1v2h-1zm4 0h1v2h-1zm4 0h1v2h-1zm5 0h1v2h-1zm4 0h1v2h-1zm4 0h1v2h-1zm4 0h1v2h-1zm5 0h1v2h-1zm3 0h1v2h-1zm5 0h1v2h-1zm4 0h1v2h-1zm5 0h1v2h-1zm3 0h1v2h-1zm5 0h1v2h-1zm4 0h1v2h-1zm4 0h1v2h-1zm4 0h1v2h-1zm5 0h1v2h-1zm4 0h1v2h-1zm4 0h1v2h-1zm4 0h1v2h-1zm5 0h1v2h-1zm3 0h1v2h-1zm5 0h1v2h-1zm4 0h1v2h-1zm5 0h1v2h-1zm3 0h1v2h-1zm5 0h1v2h-1zm4 0h1v2h-1zm5 0h1v2h-1zm3 0h1v2h-1zm5 0h1v2h-1zm4 0h1v2h-1zm4 0h1v2h-1zm4 0h1v2h-1zm5 0h1v2h-1zm3 0h1v2h-1zm5 0h1v2h-1zm4 0h1v2h-1zm5 0h1v2h-1zm3 0h1v2h-1zm5 0h1v2h-1zm4 0h1v2h-1zm5 0h1v2h-1zm3 0h1v2h-1zm5 0h1v2h-1zm4 0h1v2h-1zm4 0h1v2h-1zm4 0h1v2h-1zm5 0h1v2h-1zm4 0h1v2h-1zm4 0h1v2h-1zm4 0h1v2h-1zm5 0h1v2h-1zm3 0h1v2h-1zm5 0h1v2h-1zm4 0h1v2h-1zm5 0h1v2h-1zm3 0h1v2h-1zm5 0h1v2h-1zm4 0h1v2h-1zm4 0h1v2h-1zm4 0h1v2h-1zm5 0h1v2h-1zm4 0h1v2h-1zm4 0h1v2h-1zm4 0h1v2h-1zm5 0h1v2h-1zm3 0h1v2h-1zm5 0h1v2h-1zm4 0h1v2h-1zm5 0h1v2h-1zm3 0h1v2h-1zm5 0h1v2h-1zm4 0h1v2h-1zm4 0h1v2h-1zm4 0h1v2h-1zm5 0h1v2h-1zm4 0h1v2h-1zm4 0h1v2h-1zm4 0h1v2h-1zm5 0h1v2h-1zm3 0h1v2h-1zm5 0h1v2h-1zm4 0h1v2h-1zm5 0h1v2h-1zm3 0h1v2h-1zm5 0h1v2h-1zm4 0h1v2h-1zm4 0h1v2h-1zm4 0h1v2h-1zm5 0h1v2h-1zm4 0h1v2h-1zm4 0h1v2h-1zm4 0h1v2h-1zm5 0h1v2h-1zm3 0h1v2h-1zm5 0h1v2h-1zm4 0h1v2h-1zm5 0h1v2h-1zm3 0h1v2h-1zm5 0h1v2h-1zm4 0h1v2h-1zM11 567h1v2h-1zm4 0h1v2h-1zm5 0h1v2h-1zm3 0h1v2h-1zm5 0h1v2h-1zm4 0h1v2h-1zm5 0h1v2h-1zm3 0h1v2h-1zm5 0h1v2h-1zm4 0h1v2h-1zm5 0h1v2h-1zm3 0h1v2h-1zm5 0h1v2h-1zm4 0h1v2h-1zm4 0h1v2h-1zm4 0h1v2h-1zm5 0h1v2h-1zm4 0h1v2h-1zm4 0h1v2h-1zm4 0h1v2h-1zm5 0h1v2h-1zm3 0h1v2h-1zm5 0h1v2h-1zm4 0h1v2h-1zm5 0h1v2h-1zm3 0h1v2h-1zm5 0h1v2h-1zm4 0h1v2h-1zm4 0h1v2h-1zm4 0h1v2h-1zm5 0h1v2h-1zm4 0h1v2h-1zm4 0h1v2h-1zm4 0h1v2h-1zm5 0h1v2h-1zm3 0h1v2h-1zm5 0h1v2h-1zm4 0h1v2h-1zm5 0h1v2h-1zm3 0h1v2h-1zm5 0h1v2h-1zm4 0h1v2h-1zm4 0h1v2h-1zm4 0h1v2h-1zm5 0h1v2h-1zm4 0h1v2h-1zm4 0h1v2h-1zm4 0h1v2h-1zm5 0h1v2h-1zm3 0h1v2h-1zm5 0h1v2h-1zm4 0h1v2h-1zm5 0h1v2h-1zm3 0h1v2h-1zm5 0h1v2h-1zm4 0h1v2h-1zm4 0h1v2h-1zm4 0h1v2h-1zm5 0h1v2h-1zm4 0h1v2h-1zm4 0h1v2h-1zm4 0h1v2h-1zm5 0h1v2h-1zm3 0h1v2h-1zm5 0h1v2h-1zm4 0h1v2h-1zm5 0h1v2h-1zm3 0h1v2h-1zm5 0h1v2h-1zm4 0h1v2h-1zm5 0h1v2h-1zm3 0h1v2h-1zm5 0h1v2h-1zm4 0h1v2h-1zm4 0h1v2h-1zm4 0h1v2h-1zm5 0h1v2h-1zm3 0h1v2h-1zm5 0h1v2h-1zm4 0h1v2h-1zm5 0h1v2h-1zm3 0h1v2h-1zm5 0h1v2h-1zm4 0h1v2h-1zm5 0h1v2h-1zm3 0h1v2h-1zm5 0h1v2h-1zm4 0h1v2h-1zm4 0h1v2h-1zm4 0h1v2h-1zm5 0h1v2h-1zm4 0h1v2h-1zm4 0h1v2h-1zm4 0h1v2h-1zm5 0h1v2h-1zm3 0h1v2h-1zm5 0h1v2h-1zm4 0h1v2h-1zm5 0h1v2h-1zm3 0h1v2h-1zm5 0h1v2h-1zm4 0h1v2h-1zm4 0h1v2h-1zm4 0h1v2h-1zm5 0h1v2h-1zm4 0h1v2h-1zm4 0h1v2h-1zm4 0h1v2h-1zm5 0h1v2h-1zm3 0h1v2h-1zm5 0h1v2h-1zm4 0h1v2h-1zm5 0h1v2h-1zm3 0h1v2h-1zm5 0h1v2h-1zm4 0h1v2h-1zm4 0h1v2h-1zm4 0h1v2h-1zm5 0h1v2h-1zm4 0h1v2h-1zm4 0h1v2h-1zm4 0h1v2h-1zm5 0h1v2h-1zm3 0h1v2h-1zm5 0h1v2h-1zm4 0h1v2h-1zm5 0h1v2h-1zm3 0h1v2h-1zm5 0h1v2h-1zm4 0h1v2h-1zm4 0h1v2h-1zm4 0h1v2h-1zm5 0h1v2h-1zm4 0h1v2h-1zm4 0h1v2h-1zm4 0h1v2h-1zm5 0h1v2h-1zm3 0h1v2h-1zm5 0h1v2h-1zm4 0h1v2h-1zm5 0h1v2h-1zm3 0h1v2h-1zm5 0h1v2h-1zm4 0h1v2h-1zM11 571h1v2h-1zm4 0h1v2h-1zm5 0h1v2h-1zm3 0h1v2h-1zm5 0h1v2h-1zm4 0h1v2h-1zm5 0h1v2h-1zm3 0h1v2h-1zm5 0h1v2h-1zm4 0h1v2h-1zm5 0h1v2h-1zm3 0h1v2h-1zm5 0h1v2h-1zm4 0h1v2h-1zm4 0h1v2h-1zm4 0h1v2h-1zm5 0h1v2h-1zm4 0h1v2h-1zm4 0h1v2h-1zm4 0h1v2h-1zm5 0h1v2h-1zm3 0h1v2h-1zm5 0h1v2h-1zm4 0h1v2h-1zm5 0h1v2h-1zm3 0h1v2h-1zm5 0h1v2h-1zm4 0h1v2h-1zm4 0h1v2h-1zm4 0h1v2h-1zm5 0h1v2h-1zm4 0h1v2h-1zm4 0h1v2h-1zm4 0h1v2h-1zm5 0h1v2h-1zm3 0h1v2h-1zm5 0h1v2h-1zm4 0h1v2h-1zm5 0h1v2h-1zm3 0h1v2h-1zm5 0h1v2h-1zm4 0h1v2h-1zm4 0h1v2h-1zm4 0h1v2h-1zm5 0h1v2h-1zm4 0h1v2h-1zm4 0h1v2h-1zm4 0h1v2h-1zm5 0h1v2h-1zm3 0h1v2h-1zm5 0h1v2h-1zm4 0h1v2h-1zm5 0h1v2h-1zm3 0h1v2h-1zm5 0h1v2h-1zm4 0h1v2h-1zm4 0h1v2h-1zm4 0h1v2h-1zm5 0h1v2h-1zm4 0h1v2h-1zm4 0h1v2h-1zm4 0h1v2h-1zm5 0h1v2h-1zm3 0h1v2h-1zm5 0h1v2h-1zm4 0h1v2h-1zm5 0h1v2h-1zm3 0h1v2h-1zm5 0h1v2h-1zm4 0h1v2h-1zm5 0h1v2h-1zm3 0h1v2h-1zm5 0h1v2h-1zm4 0h1v2h-1zm4 0h1v2h-1zm4 0h1v2h-1zm5 0h1v2h-1zm3 0h1v2h-1zm5 0h1v2h-1zm4 0h1v2h-1zm5 0h1v2h-1zm3 0h1v2h-1zm5 0h1v2h-1zm4 0h1v2h-1zm5 0h1v2h-1zm3 0h1v2h-1zm5 0h1v2h-1zm4 0h1v2h-1zm4 0h1v2h-1zm4 0h1v2h-1zm5 0h1v2h-1zm4 0h1v2h-1zm4 0h1v2h-1zm4 0h1v2h-1zm5 0h1v2h-1zm3 0h1v2h-1zm5 0h1v2h-1zm4 0h1v2h-1zm5 0h1v2h-1zm3 0h1v2h-1zm5 0h1v2h-1zm4 0h1v2h-1zm4 0h1v2h-1zm4 0h1v2h-1zm5 0h1v2h-1zm4 0h1v2h-1zm4 0h1v2h-1zm4 0h1v2h-1zm5 0h1v2h-1zm3 0h1v2h-1zm5 0h1v2h-1zm4 0h1v2h-1zm5 0h1v2h-1zm3 0h1v2h-1zm5 0h1v2h-1zm4 0h1v2h-1zm4 0h1v2h-1zm4 0h1v2h-1zm5 0h1v2h-1zm4 0h1v2h-1zm4 0h1v2h-1zm4 0h1v2h-1zm5 0h1v2h-1zm3 0h1v2h-1zm5 0h1v2h-1zm4 0h1v2h-1zm5 0h1v2h-1zm3 0h1v2h-1zm5 0h1v2h-1zm4 0h1v2h-1zm4 0h1v2h-1zm4 0h1v2h-1zm5 0h1v2h-1zm4 0h1v2h-1zm4 0h1v2h-1zm4 0h1v2h-1zm5 0h1v2h-1zm3 0h1v2h-1zm5 0h1v2h-1zm4 0h1v2h-1zm5 0h1v2h-1zm3 0h1v2h-1zm5 0h1v2h-1zm4 0h1v2h-1zM11 575h1v1h-1zm4 0h1v1h-1zm5 0h1v1h-1zm3 0h1v1h-1zm5 0h1v1h-1zm4 0h1v1h-1zm5 0h1v1h-1zm3 0h1v1h-1zm5 0h1v1h-1zm4 0h1v1h-1zm5 0h1v1h-1zm3 0h1v1h-1zm5 0h1v1h-1zm4 0h1v1h-1zm4 0h1v1h-1zm4 0h1v1h-1zm5 0h1v1h-1zm4 0h1v1h-1zm4 0h1v1h-1zm4 0h1v1h-1zm5 0h1v1h-1zm3 0h1v1h-1zm5 0h1v1h-1zm4 0h1v1h-1zm5 0h1v1h-1zm3 0h1v1h-1zm5 0h1v1h-1zm4 0h1v1h-1zm4 0h1v1h-1zm4 0h1v1h-1zm5 0h1v1h-1zm4 0h1v1h-1zm4 0h1v1h-1zm4 0h1v1h-1zm5 0h1v1h-1zm3 0h1v1h-1zm5 0h1v1h-1zm4 0h1v1h-1zm5 0h1v1h-1zm3 0h1v1h-1zm5 0h1v1h-1zm4 0h1v1h-1zm4 0h1v1h-1zm4 0h1v1h-1zm5 0h1v1h-1zm4 0h1v1h-1zm4 0h1v1h-1zm4 0h1v1h-1zm5 0h1v1h-1zm3 0h1v1h-1zm5 0h1v1h-1zm4 0h1v1h-1zm5 0h1v1h-1zm3 0h1v1h-1zm5 0h1v1h-1zm4 0h1v1h-1zm4 0h1v1h-1zm4 0h1v1h-1zm5 0h1v1h-1zm4 0h1v1h-1zm4 0h1v1h-1zm4 0h1v1h-1zm5 0h1v1h-1zm3 0h1v1h-1zm5 0h1v1h-1zm4 0h1v1h-1zm5 0h1v1h-1zm3 0h1v1h-1zm5 0h1v1h-1zm4 0h1v1h-1zm5 0h1v1h-1zm3 0h1v1h-1zm5 0h1v1h-1zm4 0h1v1h-1zm4 0h1v1h-1zm4 0h1v1h-1zm5 0h1v1h-1zm3 0h1v1h-1zm5 0h1v1h-1zm4 0h1v1h-1zm5 0h1v1h-1zm3 0h1v1h-1zm5 0h1v1h-1zm4 0h1v1h-1zm5 0h1v1h-1zm3 0h1v1h-1zm5 0h1v1h-1zm4 0h1v1h-1zm4 0h1v1h-1zm4 0h1v1h-1zm5 0h1v1h-1zm4 0h1v1h-1zm4 0h1v1h-1zm4 0h1v1h-1zm5 0h1v1h-1zm3 0h1v1h-1zm5 0h1v1h-1zm4 0h1v1h-1zm5 0h1v1h-1zm3 0h1v1h-1zm5 0h1v1h-1zm4 0h1v1h-1zm4 0h1v1h-1zm4 0h1v1h-1zm5 0h1v1h-1zm4 0h1v1h-1zm4 0h1v1h-1zm4 0h1v1h-1zm5 0h1v1h-1zm3 0h1v1h-1zm5 0h1v1h-1zm4 0h1v1h-1zm5 0h1v1h-1zm3 0h1v1h-1zm5 0h1v1h-1zm4 0h1v1h-1zm4 0h1v1h-1zm4 0h1v1h-1zm5 0h1v1h-1zm4 0h1v1h-1zm4 0h1v1h-1zm4 0h1v1h-1zm5 0h1v1h-1zm3 0h1v1h-1zm5 0h1v1h-1zm4 0h1v1h-1zm5 0h1v1h-1zm3 0h1v1h-1zm5 0h1v1h-1zm4 0h1v1h-1zm4 0h1v1h-1zm4 0h1v1h-1zm5 0h1v1h-1zm4 0h1v1h-1zm4 0h1v1h-1zm4 0h1v1h-1zm5 0h1v1h-1zm3 0h1v1h-1zm5 0h1v1h-1zm4 0h1v1h-1zm5 0h1v1h-1zm3 0h1v1h-1zm5 0h1v1h-1zm4 0h1v1h-1zM11 580h1v2h-1zm4 0h1v2h-1zm5 0h1v2h-1zm3 0h1v2h-1zm5 0h1v2h-1zm4 0h1v2h-1zm5 0h1v2h-1zm3 0h1v2h-1zm5 0h1v2h-1zm4 0h1v2h-1zm5 0h1v2h-1zm3 0h1v2h-1zm5 0h1v2h-1zm4 0h1v2h-1zm4 0h1v2h-1zm4 0h1v2h-1zm5 0h1v2h-1zm4 0h1v2h-1zm4 0h1v2h-1zm4 0h1v2h-1zm5 0h1v2h-1zm3 0h1v2h-1zm5 0h1v2h-1zm4 0h1v2h-1zm5 0h1v2h-1zm3 0h1v2h-1zm5 0h1v2h-1zm4 0h1v2h-1zm4 0h1v2h-1zm4 0h1v2h-1zm5 0h1v2h-1zm4 0h1v2h-1zm4 0h1v2h-1zm4 0h1v2h-1zm5 0h1v2h-1zm3 0h1v2h-1zm5 0h1v2h-1zm4 0h1v2h-1zm5 0h1v2h-1zm3 0h1v2h-1zm5 0h1v2h-1zm4 0h1v2h-1zm4 0h1v2h-1zm4 0h1v2h-1zm5 0h1v2h-1zm4 0h1v2h-1zm4 0h1v2h-1zm4 0h1v2h-1zm5 0h1v2h-1zm3 0h1v2h-1zm5 0h1v2h-1zm4 0h1v2h-1zm5 0h1v2h-1zm3 0h1v2h-1zm5 0h1v2h-1zm4 0h1v2h-1zm4 0h1v2h-1zm4 0h1v2h-1zm5 0h1v2h-1zm4 0h1v2h-1zm4 0h1v2h-1zm4 0h1v2h-1zm5 0h1v2h-1zm3 0h1v2h-1zm5 0h1v2h-1zm4 0h1v2h-1zm5 0h1v2h-1zm3 0h1v2h-1zm5 0h1v2h-1zm4 0h1v2h-1zm5 0h1v2h-1zm3 0h1v2h-1zm5 0h1v2h-1zm4 0h1v2h-1zm4 0h1v2h-1zm4 0h1v2h-1zm5 0h1v2h-1zm3 0h1v2h-1zm5 0h1v2h-1zm4 0h1v2h-1zm5 0h1v2h-1zm3 0h1v2h-1zm5 0h1v2h-1zm4 0h1v2h-1zm5 0h1v2h-1zm3 0h1v2h-1zm5 0h1v2h-1zm4 0h1v2h-1zm4 0h1v2h-1zm4 0h1v2h-1zm5 0h1v2h-1zm4 0h1v2h-1zm4 0h1v2h-1zm4 0h1v2h-1zm5 0h1v2h-1zm3 0h1v2h-1zm5 0h1v2h-1zm4 0h1v2h-1zm5 0h1v2h-1zm3 0h1v2h-1zm5 0h1v2h-1zm4 0h1v2h-1zm4 0h1v2h-1zm4 0h1v2h-1zm5 0h1v2h-1zm4 0h1v2h-1zm4 0h1v2h-1zm4 0h1v2h-1zm5 0h1v2h-1zm3 0h1v2h-1zm5 0h1v2h-1zm4 0h1v2h-1zm5 0h1v2h-1zm3 0h1v2h-1zm5 0h1v2h-1zm4 0h1v2h-1zm4 0h1v2h-1zm4 0h1v2h-1zm5 0h1v2h-1zm4 0h1v2h-1zm4 0h1v2h-1zm4 0h1v2h-1zm5 0h1v2h-1zm3 0h1v2h-1zm5 0h1v2h-1zm4 0h1v2h-1zm5 0h1v2h-1zm3 0h1v2h-1zm5 0h1v2h-1zm4 0h1v2h-1zm4 0h1v2h-1zm4 0h1v2h-1zm5 0h1v2h-1zm4 0h1v2h-1zm4 0h1v2h-1zm4 0h1v2h-1zm5 0h1v2h-1zm3 0h1v2h-1zm5 0h1v2h-1zm4 0h1v2h-1zm5 0h1v2h-1zm3 0h1v2h-1zm5 0h1v2h-1zm4 0h1v2h-1zM11 584h1v2h-1zm4 0h1v2h-1zm5 0h1v2h-1zm3 0h1v2h-1zm5 0h1v2h-1zm4 0h1v2h-1zm5 0h1v2h-1zm3 0h1v2h-1zm5 0h1v2h-1zm4 0h1v2h-1zm5 0h1v2h-1zm3 0h1v2h-1zm5 0h1v2h-1zm4 0h1v2h-1zm4 0h1v2h-1zm4 0h1v2h-1zm5 0h1v2h-1zm4 0h1v2h-1zm4 0h1v2h-1zm4 0h1v2h-1zm5 0h1v2h-1zm3 0h1v2h-1zm5 0h1v2h-1zm4 0h1v2h-1zm5 0h1v2h-1zm3 0h1v2h-1zm5 0h1v2h-1zm4 0h1v2h-1zm4 0h1v2h-1zm4 0h1v2h-1zm5 0h1v2h-1zm4 0h1v2h-1zm4 0h1v2h-1zm4 0h1v2h-1zm5 0h1v2h-1zm3 0h1v2h-1zm5 0h1v2h-1zm4 0h1v2h-1zm5 0h1v2h-1zm3 0h1v2h-1zm5 0h1v2h-1zm4 0h1v2h-1zm4 0h1v2h-1zm4 0h1v2h-1zm5 0h1v2h-1zm4 0h1v2h-1zm4 0h1v2h-1zm4 0h1v2h-1zm5 0h1v2h-1zm3 0h1v2h-1zm5 0h1v2h-1zm4 0h1v2h-1zm5 0h1v2h-1zm3 0h1v2h-1zm5 0h1v2h-1zm4 0h1v2h-1zm4 0h1v2h-1zm4 0h1v2h-1zm5 0h1v2h-1zm4 0h1v2h-1zm4 0h1v2h-1zm4 0h1v2h-1zm5 0h1v2h-1zm3 0h1v2h-1zm5 0h1v2h-1zm4 0h1v2h-1zm5 0h1v2h-1zm3 0h1v2h-1zm5 0h1v2h-1zm4 0h1v2h-1zm5 0h1v2h-1zm3 0h1v2h-1zm5 0h1v2h-1zm4 0h1v2h-1zm4 0h1v2h-1zm4 0h1v2h-1zm5 0h1v2h-1zm3 0h1v2h-1zm5 0h1v2h-1zm4 0h1v2h-1zm5 0h1v2h-1zm3 0h1v2h-1zm5 0h1v2h-1zm4 0h1v2h-1zm5 0h1v2h-1zm3 0h1v2h-1zm5 0h1v2h-1zm4 0h1v2h-1zm4 0h1v2h-1zm4 0h1v2h-1zm5 0h1v2h-1zm4 0h1v2h-1zm4 0h1v2h-1zm4 0h1v2h-1zm5 0h1v2h-1zm3 0h1v2h-1zm5 0h1v2h-1zm4 0h1v2h-1zm5 0h1v2h-1zm3 0h1v2h-1zm5 0h1v2h-1zm4 0h1v2h-1zm4 0h1v2h-1zm4 0h1v2h-1zm5 0h1v2h-1zm4 0h1v2h-1zm4 0h1v2h-1zm4 0h1v2h-1zm5 0h1v2h-1zm3 0h1v2h-1zm5 0h1v2h-1zm4 0h1v2h-1zm5 0h1v2h-1zm3 0h1v2h-1zm5 0h1v2h-1zm4 0h1v2h-1zm4 0h1v2h-1zm4 0h1v2h-1zm5 0h1v2h-1zm4 0h1v2h-1zm4 0h1v2h-1zm4 0h1v2h-1zm5 0h1v2h-1zm3 0h1v2h-1zm5 0h1v2h-1zm4 0h1v2h-1zm5 0h1v2h-1zm3 0h1v2h-1zm5 0h1v2h-1zm4 0h1v2h-1zm4 0h1v2h-1zm4 0h1v2h-1zm5 0h1v2h-1zm4 0h1v2h-1zm4 0h1v2h-1zm4 0h1v2h-1zm5 0h1v2h-1zm3 0h1v2h-1zm5 0h1v2h-1zm4 0h1v2h-1zm5 0h1v2h-1zm3 0h1v2h-1zm5 0h1v2h-1zm4 0h1v2h-1zM11 588h1v2h-1zm4 0h1v2h-1zm5 0h1v2h-1zm3 0h1v2h-1zm5 0h1v2h-1zm4 0h1v2h-1zm5 0h1v2h-1zm3 0h1v2h-1zm5 0h1v2h-1zm4 0h1v2h-1zm5 0h1v2h-1zm3 0h1v2h-1zm5 0h1v2h-1zm4 0h1v2h-1zm4 0h1v2h-1zm4 0h1v2h-1zm5 0h1v2h-1zm4 0h1v2h-1zm4 0h1v2h-1zm4 0h1v2h-1zm5 0h1v2h-1zm3 0h1v2h-1zm5 0h1v2h-1zm4 0h1v2h-1zm5 0h1v2h-1zm3 0h1v2h-1zm5 0h1v2h-1zm4 0h1v2h-1zm4 0h1v2h-1zm4 0h1v2h-1zm5 0h1v2h-1zm4 0h1v2h-1zm4 0h1v2h-1zm4 0h1v2h-1zm5 0h1v2h-1zm3 0h1v2h-1zm5 0h1v2h-1zm4 0h1v2h-1zm5 0h1v2h-1zm3 0h1v2h-1zm5 0h1v2h-1zm4 0h1v2h-1zm4 0h1v2h-1zm4 0h1v2h-1zm5 0h1v2h-1zm4 0h1v2h-1zm4 0h1v2h-1zm4 0h1v2h-1zm5 0h1v2h-1zm3 0h1v2h-1zm5 0h1v2h-1zm4 0h1v2h-1zm5 0h1v2h-1zm3 0h1v2h-1zm5 0h1v2h-1zm4 0h1v2h-1zm4 0h1v2h-1zm4 0h1v2h-1zm5 0h1v2h-1zm4 0h1v2h-1zm4 0h1v2h-1zm4 0h1v2h-1zm5 0h1v2h-1zm3 0h1v2h-1zm5 0h1v2h-1zm4 0h1v2h-1zm5 0h1v2h-1zm3 0h1v2h-1zm5 0h1v2h-1zm4 0h1v2h-1zm5 0h1v2h-1zm3 0h1v2h-1zm5 0h1v2h-1zm4 0h1v2h-1zm4 0h1v2h-1zm4 0h1v2h-1zm5 0h1v2h-1zm3 0h1v2h-1zm5 0h1v2h-1zm4 0h1v2h-1zm5 0h1v2h-1zm3 0h1v2h-1zm5 0h1v2h-1zm4 0h1v2h-1zm5 0h1v2h-1zm3 0h1v2h-1zm5 0h1v2h-1zm4 0h1v2h-1zm4 0h1v2h-1zm4 0h1v2h-1zm5 0h1v2h-1zm4 0h1v2h-1zm4 0h1v2h-1zm4 0h1v2h-1zm5 0h1v2h-1zm3 0h1v2h-1zm5 0h1v2h-1zm4 0h1v2h-1zm5 0h1v2h-1zm3 0h1v2h-1zm5 0h1v2h-1zm4 0h1v2h-1zm4 0h1v2h-1zm4 0h1v2h-1zm5 0h1v2h-1zm4 0h1v2h-1zm4 0h1v2h-1zm4 0h1v2h-1zm5 0h1v2h-1zm3 0h1v2h-1zm5 0h1v2h-1zm4 0h1v2h-1zm5 0h1v2h-1zm3 0h1v2h-1zm5 0h1v2h-1zm4 0h1v2h-1zm4 0h1v2h-1zm4 0h1v2h-1zm5 0h1v2h-1zm4 0h1v2h-1zm4 0h1v2h-1zm4 0h1v2h-1zm5 0h1v2h-1zm3 0h1v2h-1zm5 0h1v2h-1zm4 0h1v2h-1zm5 0h1v2h-1zm3 0h1v2h-1zm5 0h1v2h-1zm4 0h1v2h-1zm4 0h1v2h-1zm4 0h1v2h-1zm5 0h1v2h-1zm4 0h1v2h-1zm4 0h1v2h-1zm4 0h1v2h-1zm5 0h1v2h-1zm3 0h1v2h-1zm5 0h1v2h-1zm4 0h1v2h-1zm5 0h1v2h-1zm3 0h1v2h-1zm5 0h1v2h-1zm4 0h1v2h-1zM11 591h1v2h-1zm4 0h1v2h-1zm5 0h1v2h-1zm3 0h1v2h-1zm5 0h1v2h-1zm4 0h1v2h-1zm5 0h1v2h-1zm3 0h1v2h-1zm5 0h1v2h-1zm4 0h1v2h-1zm5 0h1v2h-1zm3 0h1v2h-1zm5 0h1v2h-1zm4 0h1v2h-1zm4 0h1v2h-1zm4 0h1v2h-1zm5 0h1v2h-1zm4 0h1v2h-1zm4 0h1v2h-1zm4 0h1v2h-1zm5 0h1v2h-1zm3 0h1v2h-1zm5 0h1v2h-1zm4 0h1v2h-1zm5 0h1v2h-1zm3 0h1v2h-1zm5 0h1v2h-1zm4 0h1v2h-1zm4 0h1v2h-1zm4 0h1v2h-1zm5 0h1v2h-1zm4 0h1v2h-1zm4 0h1v2h-1zm4 0h1v2h-1zm5 0h1v2h-1zm3 0h1v2h-1zm5 0h1v2h-1zm4 0h1v2h-1zm5 0h1v2h-1zm3 0h1v2h-1zm5 0h1v2h-1zm4 0h1v2h-1zm4 0h1v2h-1zm4 0h1v2h-1zm5 0h1v2h-1zm4 0h1v2h-1zm4 0h1v2h-1zm4 0h1v2h-1zm5 0h1v2h-1zm3 0h1v2h-1zm5 0h1v2h-1zm4 0h1v2h-1zm5 0h1v2h-1zm3 0h1v2h-1zm5 0h1v2h-1zm4 0h1v2h-1zm4 0h1v2h-1zm4 0h1v2h-1zm5 0h1v2h-1zm4 0h1v2h-1zm4 0h1v2h-1zm4 0h1v2h-1zm5 0h1v2h-1zm3 0h1v2h-1zm5 0h1v2h-1zm4 0h1v2h-1zm5 0h1v2h-1zm3 0h1v2h-1zm5 0h1v2h-1zm4 0h1v2h-1zm5 0h1v2h-1zm3 0h1v2h-1zm5 0h1v2h-1zm4 0h1v2h-1zm4 0h1v2h-1zm4 0h1v2h-1zm5 0h1v2h-1zm3 0h1v2h-1zm5 0h1v2h-1zm4 0h1v2h-1zm5 0h1v2h-1zm3 0h1v2h-1zm5 0h1v2h-1zm4 0h1v2h-1zm5 0h1v2h-1zm3 0h1v2h-1zm5 0h1v2h-1zm4 0h1v2h-1zm4 0h1v2h-1zm4 0h1v2h-1zm5 0h1v2h-1zm4 0h1v2h-1zm4 0h1v2h-1zm4 0h1v2h-1zm5 0h1v2h-1zm3 0h1v2h-1zm5 0h1v2h-1zm4 0h1v2h-1zm5 0h1v2h-1zm3 0h1v2h-1zm5 0h1v2h-1zm4 0h1v2h-1zm4 0h1v2h-1zm4 0h1v2h-1zm5 0h1v2h-1zm4 0h1v2h-1zm4 0h1v2h-1zm4 0h1v2h-1zm5 0h1v2h-1zm3 0h1v2h-1zm5 0h1v2h-1zm4 0h1v2h-1zm5 0h1v2h-1zm3 0h1v2h-1zm5 0h1v2h-1zm4 0h1v2h-1zm4 0h1v2h-1zm4 0h1v2h-1zm5 0h1v2h-1zm4 0h1v2h-1zm4 0h1v2h-1zm4 0h1v2h-1zm5 0h1v2h-1zm3 0h1v2h-1zm5 0h1v2h-1zm4 0h1v2h-1zm5 0h1v2h-1zm3 0h1v2h-1zm5 0h1v2h-1zm4 0h1v2h-1zm4 0h1v2h-1zm4 0h1v2h-1zm5 0h1v2h-1zm4 0h1v2h-1zm4 0h1v2h-1zm4 0h1v2h-1zm5 0h1v2h-1zm3 0h1v2h-1zm5 0h1v2h-1zm4 0h1v2h-1zm5 0h1v2h-1zm3 0h1v2h-1zm5 0h1v2h-1zm4 0h1v2h-1zM11 597h1v2h-1zm4 0h1v2h-1zm5 0h1v2h-1zm3 0h1v2h-1zm5 0h1v2h-1zm4 0h1v2h-1zm5 0h1v2h-1zm3 0h1v2h-1zm5 0h1v2h-1zm4 0h1v2h-1zm5 0h1v2h-1zm3 0h1v2h-1zm5 0h1v2h-1zm4 0h1v2h-1zm4 0h1v2h-1zm4 0h1v2h-1zm5 0h1v2h-1zm4 0h1v2h-1zm4 0h1v2h-1zm4 0h1v2h-1zm5 0h1v2h-1zm3 0h1v2h-1zm5 0h1v2h-1zm4 0h1v2h-1zm5 0h1v2h-1zm3 0h1v2h-1zm5 0h1v2h-1zm4 0h1v2h-1zm4 0h1v2h-1zm4 0h1v2h-1zm5 0h1v2h-1zm4 0h1v2h-1zm4 0h1v2h-1zm4 0h1v2h-1zm5 0h1v2h-1zm3 0h1v2h-1zm5 0h1v2h-1zm4 0h1v2h-1zm5 0h1v2h-1zm3 0h1v2h-1zm5 0h1v2h-1zm4 0h1v2h-1zm4 0h1v2h-1zm4 0h1v2h-1zm5 0h1v2h-1zm4 0h1v2h-1zm4 0h1v2h-1zm4 0h1v2h-1zm5 0h1v2h-1zm3 0h1v2h-1zm5 0h1v2h-1zm4 0h1v2h-1zm5 0h1v2h-1zm3 0h1v2h-1zm5 0h1v2h-1zm4 0h1v2h-1zm4 0h1v2h-1zm4 0h1v2h-1zm5 0h1v2h-1zm4 0h1v2h-1zm4 0h1v2h-1zm4 0h1v2h-1zm5 0h1v2h-1zm3 0h1v2h-1zm5 0h1v2h-1zm4 0h1v2h-1zm5 0h1v2h-1zm3 0h1v2h-1zm5 0h1v2h-1zm4 0h1v2h-1zm5 0h1v2h-1zm3 0h1v2h-1zm5 0h1v2h-1zm4 0h1v2h-1zm4 0h1v2h-1zm4 0h1v2h-1zm5 0h1v2h-1zm3 0h1v2h-1zm5 0h1v2h-1zm4 0h1v2h-1zm5 0h1v2h-1zm3 0h1v2h-1zm5 0h1v2h-1zm4 0h1v2h-1zm5 0h1v2h-1zm3 0h1v2h-1zm5 0h1v2h-1zm4 0h1v2h-1zm4 0h1v2h-1zm4 0h1v2h-1zm5 0h1v2h-1zm4 0h1v2h-1zm4 0h1v2h-1zm4 0h1v2h-1zm5 0h1v2h-1zm3 0h1v2h-1zm5 0h1v2h-1zm4 0h1v2h-1zm5 0h1v2h-1zm3 0h1v2h-1zm5 0h1v2h-1zm4 0h1v2h-1zm4 0h1v2h-1zm4 0h1v2h-1zm5 0h1v2h-1zm4 0h1v2h-1zm4 0h1v2h-1zm4 0h1v2h-1zm5 0h1v2h-1zm3 0h1v2h-1zm5 0h1v2h-1zm4 0h1v2h-1zm5 0h1v2h-1zm3 0h1v2h-1zm5 0h1v2h-1zm4 0h1v2h-1zm4 0h1v2h-1zm4 0h1v2h-1zm5 0h1v2h-1zm4 0h1v2h-1zm4 0h1v2h-1zm4 0h1v2h-1zm5 0h1v2h-1zm3 0h1v2h-1zm5 0h1v2h-1zm4 0h1v2h-1zm5 0h1v2h-1zm3 0h1v2h-1zm5 0h1v2h-1zm4 0h1v2h-1zm4 0h1v2h-1zm4 0h1v2h-1zm5 0h1v2h-1zm4 0h1v2h-1zm4 0h1v2h-1zm4 0h1v2h-1zm5 0h1v2h-1zm3 0h1v2h-1zm5 0h1v2h-1zm4 0h1v2h-1zm5 0h1v2h-1zm3 0h1v2h-1zm5 0h1v2h-1zm4 0h1v2h-1zM11 601h1v2h-1zm4 0h1v2h-1zm5 0h1v2h-1zm3 0h1v2h-1zm5 0h1v2h-1zm4 0h1v2h-1zm5 0h1v2h-1zm3 0h1v2h-1zm5 0h1v2h-1zm4 0h1v2h-1zm5 0h1v2h-1zm3 0h1v2h-1zm5 0h1v2h-1zm4 0h1v2h-1zm4 0h1v2h-1zm4 0h1v2h-1zm5 0h1v2h-1zm4 0h1v2h-1zm4 0h1v2h-1zm4 0h1v2h-1zm5 0h1v2h-1zm3 0h1v2h-1zm5 0h1v2h-1zm4 0h1v2h-1zm5 0h1v2h-1zm3 0h1v2h-1zm5 0h1v2h-1zm4 0h1v2h-1zm4 0h1v2h-1zm4 0h1v2h-1zm5 0h1v2h-1zm4 0h1v2h-1zm4 0h1v2h-1zm4 0h1v2h-1zm5 0h1v2h-1zm3 0h1v2h-1zm5 0h1v2h-1zm4 0h1v2h-1zm5 0h1v2h-1zm3 0h1v2h-1zm5 0h1v2h-1zm4 0h1v2h-1zm4 0h1v2h-1zm4 0h1v2h-1zm5 0h1v2h-1zm4 0h1v2h-1zm4 0h1v2h-1zm4 0h1v2h-1zm5 0h1v2h-1zm3 0h1v2h-1zm5 0h1v2h-1zm4 0h1v2h-1zm5 0h1v2h-1zm3 0h1v2h-1zm5 0h1v2h-1zm4 0h1v2h-1zm4 0h1v2h-1zm4 0h1v2h-1zm5 0h1v2h-1zm4 0h1v2h-1zm4 0h1v2h-1zm4 0h1v2h-1zm5 0h1v2h-1zm3 0h1v2h-1zm5 0h1v2h-1zm4 0h1v2h-1zm5 0h1v2h-1zm3 0h1v2h-1zm5 0h1v2h-1zm4 0h1v2h-1zm5 0h1v2h-1zm3 0h1v2h-1zm5 0h1v2h-1zm4 0h1v2h-1zm4 0h1v2h-1zm4 0h1v2h-1zm5 0h1v2h-1zm3 0h1v2h-1zm5 0h1v2h-1zm4 0h1v2h-1zm5 0h1v2h-1zm3 0h1v2h-1zm5 0h1v2h-1zm4 0h1v2h-1zm5 0h1v2h-1zm3 0h1v2h-1zm5 0h1v2h-1zm4 0h1v2h-1zm4 0h1v2h-1zm4 0h1v2h-1zm5 0h1v2h-1zm4 0h1v2h-1zm4 0h1v2h-1zm4 0h1v2h-1zm5 0h1v2h-1zm3 0h1v2h-1zm5 0h1v2h-1zm4 0h1v2h-1zm5 0h1v2h-1zm3 0h1v2h-1zm5 0h1v2h-1zm4 0h1v2h-1zm4 0h1v2h-1zm4 0h1v2h-1zm5 0h1v2h-1zm4 0h1v2h-1zm4 0h1v2h-1zm4 0h1v2h-1zm5 0h1v2h-1zm3 0h1v2h-1zm5 0h1v2h-1zm4 0h1v2h-1zm5 0h1v2h-1zm3 0h1v2h-1zm5 0h1v2h-1zm4 0h1v2h-1zm4 0h1v2h-1zm4 0h1v2h-1zm5 0h1v2h-1zm4 0h1v2h-1zm4 0h1v2h-1zm4 0h1v2h-1zm5 0h1v2h-1zm3 0h1v2h-1zm5 0h1v2h-1zm4 0h1v2h-1zm5 0h1v2h-1zm3 0h1v2h-1zm5 0h1v2h-1zm4 0h1v2h-1zm4 0h1v2h-1zm4 0h1v2h-1zm5 0h1v2h-1zm4 0h1v2h-1zm4 0h1v2h-1zm4 0h1v2h-1zm5 0h1v2h-1zm3 0h1v2h-1zm5 0h1v2h-1zm4 0h1v2h-1zm5 0h1v2h-1zm3 0h1v2h-1zm5 0h1v2h-1zm4 0h1v2h-1zM11 605h1v1h-1zm4 0h1v1h-1zm5 0h1v1h-1zm3 0h1v1h-1zm5 0h1v1h-1zm4 0h1v1h-1zm5 0h1v1h-1zm3 0h1v1h-1zm5 0h1v1h-1zm4 0h1v1h-1zm5 0h1v1h-1zm3 0h1v1h-1zm5 0h1v1h-1zm4 0h1v1h-1zm4 0h1v1h-1zm4 0h1v1h-1zm5 0h1v1h-1zm4 0h1v1h-1zm4 0h1v1h-1zm4 0h1v1h-1zm5 0h1v1h-1zm3 0h1v1h-1zm5 0h1v1h-1zm4 0h1v1h-1zm5 0h1v1h-1zm3 0h1v1h-1zm5 0h1v1h-1zm4 0h1v1h-1zm4 0h1v1h-1zm4 0h1v1h-1zm5 0h1v1h-1zm4 0h1v1h-1zm4 0h1v1h-1zm4 0h1v1h-1zm5 0h1v1h-1zm3 0h1v1h-1zm5 0h1v1h-1zm4 0h1v1h-1zm5 0h1v1h-1zm3 0h1v1h-1zm5 0h1v1h-1zm4 0h1v1h-1zm4 0h1v1h-1zm4 0h1v1h-1zm5 0h1v1h-1zm4 0h1v1h-1zm4 0h1v1h-1zm4 0h1v1h-1zm5 0h1v1h-1zm3 0h1v1h-1zm5 0h1v1h-1zm4 0h1v1h-1zm5 0h1v1h-1zm3 0h1v1h-1zm5 0h1v1h-1zm4 0h1v1h-1zm4 0h1v1h-1zm4 0h1v1h-1zm5 0h1v1h-1zm4 0h1v1h-1zm4 0h1v1h-1zm4 0h1v1h-1zm5 0h1v1h-1zm3 0h1v1h-1zm5 0h1v1h-1zm4 0h1v1h-1zm5 0h1v1h-1zm3 0h1v1h-1zm5 0h1v1h-1zm4 0h1v1h-1zm5 0h1v1h-1zm3 0h1v1h-1zm5 0h1v1h-1zm4 0h1v1h-1zm4 0h1v1h-1zm4 0h1v1h-1zm5 0h1v1h-1zm3 0h1v1h-1zm5 0h1v1h-1zm4 0h1v1h-1zm5 0h1v1h-1zm3 0h1v1h-1zm5 0h1v1h-1zm4 0h1v1h-1zm5 0h1v1h-1zm3 0h1v1h-1zm5 0h1v1h-1zm4 0h1v1h-1zm4 0h1v1h-1zm4 0h1v1h-1zm5 0h1v1h-1zm4 0h1v1h-1zm4 0h1v1h-1zm4 0h1v1h-1zm5 0h1v1h-1zm3 0h1v1h-1zm5 0h1v1h-1zm4 0h1v1h-1zm5 0h1v1h-1zm3 0h1v1h-1zm5 0h1v1h-1zm4 0h1v1h-1zm4 0h1v1h-1zm4 0h1v1h-1zm5 0h1v1h-1zm4 0h1v1h-1zm4 0h1v1h-1zm4 0h1v1h-1zm5 0h1v1h-1zm3 0h1v1h-1zm5 0h1v1h-1zm4 0h1v1h-1zm5 0h1v1h-1zm3 0h1v1h-1zm5 0h1v1h-1zm4 0h1v1h-1zm4 0h1v1h-1zm4 0h1v1h-1zm5 0h1v1h-1zm4 0h1v1h-1zm4 0h1v1h-1zm4 0h1v1h-1zm5 0h1v1h-1zm3 0h1v1h-1zm5 0h1v1h-1zm4 0h1v1h-1zm5 0h1v1h-1zm3 0h1v1h-1zm5 0h1v1h-1zm4 0h1v1h-1zm4 0h1v1h-1zm4 0h1v1h-1zm5 0h1v1h-1zm4 0h1v1h-1zm4 0h1v1h-1zm4 0h1v1h-1zm5 0h1v1h-1zm3 0h1v1h-1zm5 0h1v1h-1zm4 0h1v1h-1zm5 0h1v1h-1zm3 0h1v1h-1zm5 0h1v1h-1zm4 0h1v1h-1zM11 608h1v2h-1zm4 0h1v2h-1zm5 0h1v2h-1zm3 0h1v2h-1zm5 0h1v2h-1zm4 0h1v2h-1zm5 0h1v2h-1zm3 0h1v2h-1zm5 0h1v2h-1zm4 0h1v2h-1zm5 0h1v2h-1zm3 0h1v2h-1zm5 0h1v2h-1zm4 0h1v2h-1zm4 0h1v2h-1zm4 0h1v2h-1zm5 0h1v2h-1zm4 0h1v2h-1zm4 0h1v2h-1zm4 0h1v2h-1zm5 0h1v2h-1zm3 0h1v2h-1zm5 0h1v2h-1zm4 0h1v2h-1zm5 0h1v2h-1zm3 0h1v2h-1zm5 0h1v2h-1zm4 0h1v2h-1zm4 0h1v2h-1zm4 0h1v2h-1zm5 0h1v2h-1zm4 0h1v2h-1zm4 0h1v2h-1zm4 0h1v2h-1zm5 0h1v2h-1zm3 0h1v2h-1zm5 0h1v2h-1zm4 0h1v2h-1zm5 0h1v2h-1zm3 0h1v2h-1zm5 0h1v2h-1zm4 0h1v2h-1zm4 0h1v2h-1zm4 0h1v2h-1zm5 0h1v2h-1zm4 0h1v2h-1zm4 0h1v2h-1zm4 0h1v2h-1zm5 0h1v2h-1zm3 0h1v2h-1zm5 0h1v2h-1zm4 0h1v2h-1zm5 0h1v2h-1zm3 0h1v2h-1zm5 0h1v2h-1zm4 0h1v2h-1zm4 0h1v2h-1zm4 0h1v2h-1zm5 0h1v2h-1zm4 0h1v2h-1zm4 0h1v2h-1zm4 0h1v2h-1zm5 0h1v2h-1zm3 0h1v2h-1zm5 0h1v2h-1zm4 0h1v2h-1zm5 0h1v2h-1zm3 0h1v2h-1zm5 0h1v2h-1zm4 0h1v2h-1zm5 0h1v2h-1zm3 0h1v2h-1zm5 0h1v2h-1zm4 0h1v2h-1zm4 0h1v2h-1zm4 0h1v2h-1zm5 0h1v2h-1zm3 0h1v2h-1zm5 0h1v2h-1zm4 0h1v2h-1zm5 0h1v2h-1zm3 0h1v2h-1zm5 0h1v2h-1zm4 0h1v2h-1zm5 0h1v2h-1zm3 0h1v2h-1zm5 0h1v2h-1zm4 0h1v2h-1zm4 0h1v2h-1zm4 0h1v2h-1zm5 0h1v2h-1zm4 0h1v2h-1zm4 0h1v2h-1zm4 0h1v2h-1zm5 0h1v2h-1zm3 0h1v2h-1zm5 0h1v2h-1zm4 0h1v2h-1zm5 0h1v2h-1zm3 0h1v2h-1zm5 0h1v2h-1zm4 0h1v2h-1zm4 0h1v2h-1zm4 0h1v2h-1zm5 0h1v2h-1zm4 0h1v2h-1zm4 0h1v2h-1zm4 0h1v2h-1zm5 0h1v2h-1zm3 0h1v2h-1zm5 0h1v2h-1zm4 0h1v2h-1zm5 0h1v2h-1zm3 0h1v2h-1zm5 0h1v2h-1zm4 0h1v2h-1zm4 0h1v2h-1zm4 0h1v2h-1zm5 0h1v2h-1zm4 0h1v2h-1zm4 0h1v2h-1zm4 0h1v2h-1zm5 0h1v2h-1zm3 0h1v2h-1zm5 0h1v2h-1zm4 0h1v2h-1zm5 0h1v2h-1zm3 0h1v2h-1zm5 0h1v2h-1zm4 0h1v2h-1zm4 0h1v2h-1zm4 0h1v2h-1zm5 0h1v2h-1zm4 0h1v2h-1zm4 0h1v2h-1zm4 0h1v2h-1zm5 0h1v2h-1zm3 0h1v2h-1zm5 0h1v2h-1zm4 0h1v2h-1zm5 0h1v2h-1zm3 0h1v2h-1zm5 0h1v2h-1zm4 0h1v2h-1z" fill="#c87cff"/><path transform="translate(2 0)" d="M1209 304h1v2h-1zM1200 310h1v2h-1zm4 0h1v2h-1zm5 0h1v2h-1zm3 0h1v2h-1zm5 0h1v2h-1zm4 0h1v2h-1zm25 0h1v2h-1zm5 0h1v2h-1zm4 0h1v2h-1zM681 314h1v2h-1zm9 0h1v2h-1zm506 0h1v2h-1zm4 0h1v2h-1zm4 0h1v2h-1zm5 0h1v2h-1zm3 0h1v2h-1zm5 0h1v2h-1zm4 0h1v2h-1zm5 0h1v2h-1zm3 0h1v2h-1zm17 0h1v2h-1zm5 0h1v2h-1zm4 0h1v2h-1zM96 318h1v2h-1zm236 0h1v2h-1zm3 0h1v2h-1zm31 0h1v2h-1zm25 0h1v2h-1zm101 0h1v2h-1zm135 0h1v2h-1zm4 0h1v2h-1zm4 0h1v2h-1zm38 0h1v2h-1zm5 0h1v2h-1zm3 0h1v2h-1zm5 0h1v2h-1zm4 0h1v2h-1zm4 0h1v2h-1zm4 0h1v2h-1zm64 0h1v2h-1zm4 0h1v2h-1zm59 0h1v2h-1zm101 0h1v2h-1zm55 0h1v2h-1zm4 0h1v2h-1zm5 0h1v2h-1zm16 0h1v2h-1zm4 0h1v2h-1zm5 0h1v2h-1zm130 0h1v2h-1zm47 0h1v2h-1zm4 0h1v2h-1zm4 0h1v2h-1zm4 0h1v2h-1zm5 0h1v2h-1zm3 0h1v2h-1zm5 0h1v2h-1zm4 0h1v2h-1zm5 0h1v2h-1zm3 0h1v2h-1zm5 0h1v2h-1zm4 0h1v2h-1zm4 0h1v2h-1zm4 0h1v2h-1zm5 0h1v2h-1zm4 0h1v2h-1zM11 321h1v2h-1zm4 0h1v2h-1zm5 0h1v2h-1zm3 0h1v2h-1zm5 0h1v2h-1zm9 0h1v2h-1zm17 0h1v2h-1zm8 0h1v2h-1zm4 0h1v2h-1zm4 0h1v2h-1zm17 0h1v2h-1zm4 0h1v2h-1zm5 0h1v2h-1zm3 0h1v2h-1zm5 0h1v2h-1zm42 0h1v2h-1zm4 0h1v2h-1zm5 0h1v2h-1zm17 0h1v2h-1zm3 0h1v2h-1zm5 0h1v2h-1zm17 0h1v2h-1zm8 0h1v2h-1zm42 0h1v2h-1zm4 0h1v2h-1zm5 0h1v2h-1zm20 0h1v2h-1zm5 0h1v2h-1zm4 0h1v2h-1zm8 0h1v2h-1zm14 0h1v2h-1zm8 0h1v2h-1zm17 0h1v2h-1zm3 0h1v2h-1zm5 0h1v2h-1zm17 0h1v2h-1zm4 0h1v2h-1zm5 0h1v2h-1zm20 0h1v2h-1zm5 0h1v2h-1zm4 0h1v2h-1zm4 0h1v2h-1zm12 0h1v2h-1zm9 0h1v2h-1zm13 0h1v2h-1zm4 0h1v2h-1zm4 0h1v2h-1zm4 0h1v2h-1zm5 0h1v2h-1zm17 0h1v2h-1zm8 0h1v2h-1zm12 0h1v2h-1zm5 0h1v2h-1zm4 0h1v2h-1zm25 0h1v2h-1zm34 0h1v2h-1zm8 0h1v2h-1zm9 0h1v2h-1zm4 0h1v2h-1zm4 0h1v2h-1zm5 0h1v2h-1zm17 0h1v2h-1zm3 0h1v2h-1zm5 0h1v2h-1zm17 0h1v2h-1zm4 0h1v2h-1zm4 0h1v2h-1zm38 0h1v2h-1zm5 0h1v2h-1zm3 0h1v2h-1zm5 0h1v2h-1zm4 0h1v2h-1zm4 0h1v2h-1zm4 0h1v2h-1zm5 0h1v2h-1zm4 0h1v2h-1zm4 0h1v2h-1zm4 0h1v2h-1zm5 0h1v2h-1zm12 0h1v2h-1zm5 0h1v2h-1zm3 0h1v2h-1zm22 0h1v2h-1zm4 0h1v2h-1zm4 0h1v2h-1zm21 0h1v2h-1zm5 0h1v2h-1zm20 0h1v2h-1zm5 0h1v2h-1zm4 0h1v2h-1zm8 0h1v2h-1zm8 0h1v2h-1zm5 0h1v2h-1zm4 0h1v2h-1zm17 0h1v2h-1zm4 0h1v2h-1zm4 0h1v2h-1zm5 0h1v2h-1zm17 0h1v2h-1zm3 0h1v2h-1zm5 0h1v2h-1zm4 0h1v2h-1zm13 0h1v2h-1zm4 0h1v2h-1zm4 0h1v2h-1zm26 0h1v2h-1zm20 0h1v2h-1zm5 0h1v2h-1zm4 0h1v2h-1zm5 0h1v2h-1zm3 0h1v2h-1zm9 0h1v2h-1zm4 0h1v2h-1zm4 0h1v2h-1zm5 0h1v2h-1zm17 0h1v2h-1zm3 0h1v2h-1zm26 0h1v2h-1zm4 0h1v2h-1zm21 0h1v2h-1zm5 0h1v2h-1zm20 0h1v2h-1zm5 0h1v2h-1zm4 0h1v2h-1zm17 0h1v2h-1zm8 0h1v2h-1zm5 0h1v2h-1zm3 0h1v2h-1zm9 0h1v2h-1zm5 0h1v2h-1zm3 0h1v2h-1zm22 0h1v2h-1zm4 0h1v2h-1zm4 0h1v2h-1zm4 0h1v2h-1zm5 0h1v2h-1zm3 0h1v2h-1zm5 0h1v2h-1zm4 0h1v2h-1zm5 0h1v2h-1zm3 0h1v2h-1zm5 0h1v2h-1zm4 0h1v2h-1zm4 0h1v2h-1zm4 0h1v2h-1zm5 0h1v2h-1zm4 0h1v2h-1zM11 327h1v2h-1zm4 0h1v2h-1zm5 0h1v2h-1zm3 0h1v2h-1zm5 0h1v2h-1zm4 0h1v2h-1zm5 0h1v2h-1zm3 0h1v2h-1zm5 0h1v2h-1zm4 0h1v2h-1zm5 0h1v2h-1zm3 0h1v2h-1zm5 0h1v2h-1zm4 0h1v2h-1zm4 0h1v2h-1zm4 0h1v2h-1zm5 0h1v2h-1zm4 0h1v2h-1zm4 0h1v2h-1zm4 0h1v2h-1zm5 0h1v2h-1zm3 0h1v2h-1zm5 0h1v2h-1zm4 0h1v2h-1zm5 0h1v2h-1zm3 0h1v2h-1zm5 0h1v2h-1zm4 0h1v2h-1zm4 0h1v2h-1zm4 0h1v2h-1zm5 0h1v2h-1zm4 0h1v2h-1zm4 0h1v2h-1zm4 0h1v2h-1zm5 0h1v2h-1zm3 0h1v2h-1zm5 0h1v2h-1zm4 0h1v2h-1zm5 0h1v2h-1zm3 0h1v2h-1zm5 0h1v2h-1zm4 0h1v2h-1zm4 0h1v2h-1zm4 0h1v2h-1zm5 0h1v2h-1zm4 0h1v2h-1zm4 0h1v2h-1zm4 0h1v2h-1zm5 0h1v2h-1zm3 0h1v2h-1zm5 0h1v2h-1zm4 0h1v2h-1zm5 0h1v2h-1zm3 0h1v2h-1zm5 0h1v2h-1zm4 0h1v2h-1zm4 0h1v2h-1zm4 0h1v2h-1zm5 0h1v2h-1zm4 0h1v2h-1zm4 0h1v2h-1zm4 0h1v2h-1zm5 0h1v2h-1zm3 0h1v2h-1zm5 0h1v2h-1zm4 0h1v2h-1zm5 0h1v2h-1zm3 0h1v2h-1zm5 0h1v2h-1zm4 0h1v2h-1zm5 0h1v2h-1zm3 0h1v2h-1zm5 0h1v2h-1zm4 0h1v2h-1zm4 0h1v2h-1zm4 0h1v2h-1zm5 0h1v2h-1zm3 0h1v2h-1zm5 0h1v2h-1zm4 0h1v2h-1zm5 0h1v2h-1zm3 0h1v2h-1zm5 0h1v2h-1zm4 0h1v2h-1zm5 0h1v2h-1zm3 0h1v2h-1zm5 0h1v2h-1zm4 0h1v2h-1zm4 0h1v2h-1zm4 0h1v2h-1zm5 0h1v2h-1zm4 0h1v2h-1zm4 0h1v2h-1zm4 0h1v2h-1zm5 0h1v2h-1zm3 0h1v2h-1zm5 0h1v2h-1zm4 0h1v2h-1zm5 0h1v2h-1zm3 0h1v2h-1zm5 0h1v2h-1zm4 0h1v2h-1zm4 0h1v2h-1zm4 0h1v2h-1zm5 0h1v2h-1zm4 0h1v2h-1zm4 0h1v2h-1zm4 0h1v2h-1zm5 0h1v2h-1zm3 0h1v2h-1zm5 0h1v2h-1zm4 0h1v2h-1zm5 0h1v2h-1zm3 0h1v2h-1zm5 0h1v2h-1zm4 0h1v2h-1zm4 0h1v2h-1zm4 0h1v2h-1zm5 0h1v2h-1zm4 0h1v2h-1zm4 0h1v2h-1zm4 0h1v2h-1zm5 0h1v2h-1zm3 0h1v2h-1zm5 0h1v2h-1zm4 0h1v2h-1zm5 0h1v2h-1zm3 0h1v2h-1zm5 0h1v2h-1zm4 0h1v2h-1zm4 0h1v2h-1zm4 0h1v2h-1zm5 0h1v2h-1zm4 0h1v2h-1zm4 0h1v2h-1zm4 0h1v2h-1zm5 0h1v2h-1zm3 0h1v2h-1zm5 0h1v2h-1zm4 0h1v2h-1zm5 0h1v2h-1zm3 0h1v2h-1zm5 0h1v2h-1zm4 0h1v2h-1zm5 0h1v2h-1zm3 0h1v2h-1zm5 0h1v2h-1zm4 0h1v2h-1zm4 0h1v2h-1zm4 0h1v2h-1zm5 0h1v2h-1zm3 0h1v2h-1zm5 0h1v2h-1zm4 0h1v2h-1zm5 0h1v2h-1zm3 0h1v2h-1zm5 0h1v2h-1zm4 0h1v2h-1zm5 0h1v2h-1zm3 0h1v2h-1zm5 0h1v2h-1zm4 0h1v2h-1zm4 0h1v2h-1zm4 0h1v2h-1zm5 0h1v2h-1zm4 0h1v2h-1zm4 0h1v2h-1zm4 0h1v2h-1zm5 0h1v2h-1zm3 0h1v2h-1zm5 0h1v2h-1zm4 0h1v2h-1zm5 0h1v2h-1zm3 0h1v2h-1zm5 0h1v2h-1zm4 0h1v2h-1zm4 0h1v2h-1zm4 0h1v2h-1zm5 0h1v2h-1zm4 0h1v2h-1zm4 0h1v2h-1zm4 0h1v2h-1zm5 0h1v2h-1zm3 0h1v2h-1zm5 0h1v2h-1zm4 0h1v2h-1zm5 0h1v2h-1zm3 0h1v2h-1zm5 0h1v2h-1zm4 0h1v2h-1zm4 0h1v2h-1zm4 0h1v2h-1zm5 0h1v2h-1zm4 0h1v2h-1zm4 0h1v2h-1zm4 0h1v2h-1zm5 0h1v2h-1zm3 0h1v2h-1zm5 0h1v2h-1zm4 0h1v2h-1zm5 0h1v2h-1zm3 0h1v2h-1zm5 0h1v2h-1zm4 0h1v2h-1zm4 0h1v2h-1zm4 0h1v2h-1zm5 0h1v2h-1zm4 0h1v2h-1zm4 0h1v2h-1zm4 0h1v2h-1zm5 0h1v2h-1zm3 0h1v2h-1zm5 0h1v2h-1zm4 0h1v2h-1zm5 0h1v2h-1zm3 0h1v2h-1zm5 0h1v2h-1zm4 0h1v2h-1zm4 0h1v2h-1zm4 0h1v2h-1zm5 0h1v2h-1zm4 0h1v2h-1zm4 0h1v2h-1zm4 0h1v2h-1zm5 0h1v2h-1zm3 0h1v2h-1zm5 0h1v2h-1zm4 0h1v2h-1zm5 0h1v2h-1zm3 0h1v2h-1zm5 0h1v2h-1zm4 0h1v2h-1zm5 0h1v2h-1zm3 0h1v2h-1zm5 0h1v2h-1zm4 0h1v2h-1zm4 0h1v2h-1zm4 0h1v2h-1zm5 0h1v2h-1zm4 0h1v2h-1zm4 0h1v2h-1zm4 0h1v2h-1zm5 0h1v2h-1zm3 0h1v2h-1zm5 0h1v2h-1zm4 0h1v2h-1zm8 0h1v2h-1zm5 0h1v2h-1zm4 0h1v2h-1zm4 0h1v2h-1zm4 0h1v2h-1zm5 0h1v2h-1zm4 0h1v2h-1zm4 0h1v2h-1zm4 0h1v2h-1zm5 0h1v2h-1zm3 0h1v2h-1zm5 0h1v2h-1zm4 0h1v2h-1zm5 0h1v2h-1zm3 0h1v2h-1zm5 0h1v2h-1zm4 0h1v2h-1zm4 0h1v2h-1zm4 0h1v2h-1zm5 0h1v2h-1zm4 0h1v2h-1zm4 0h1v2h-1zm4 0h1v2h-1zm5 0h1v2h-1zm3 0h1v2h-1zm5 0h1v2h-1zm4 0h1v2h-1zm5 0h1v2h-1zm3 0h1v2h-1zm5 0h1v2h-1zm4 0h1v2h-1zm4 0h1v2h-1zm4 0h1v2h-1zm5 0h1v2h-1zm4 0h1v2h-1zm4 0h1v2h-1zm4 0h1v2h-1zm5 0h1v2h-1zm3 0h1v2h-1zm5 0h1v2h-1zm4 0h1v2h-1zm5 0h1v2h-1zm3 0h1v2h-1zm5 0h1v2h-1zm4 0h1v2h-1zm4 0h1v2h-1zm4 0h1v2h-1zm5 0h1v2h-1zm4 0h1v2h-1zM11 331h1v2h-1zm4 0h1v2h-1zm5 0h1v2h-1zm3 0h1v2h-1zm5 0h1v2h-1zm4 0h1v2h-1zm5 0h1v2h-1zm3 0h1v2h-1zm5 0h1v2h-1zm4 0h1v2h-1zm5 0h1v2h-1zm3 0h1v2h-1zm5 0h1v2h-1zm4 0h1v2h-1zm4 0h1v2h-1zm4 0h1v2h-1zm5 0h1v2h-1zm4 0h1v2h-1zm4 0h1v2h-1zm4 0h1v2h-1zm5 0h1v2h-1zm3 0h1v2h-1zm5 0h1v2h-1zm4 0h1v2h-1zm5 0h1v2h-1zm3 0h1v2h-1zm5 0h1v2h-1zm4 0h1v2h-1zm4 0h1v2h-1zm4 0h1v2h-1zm5 0h1v2h-1zm4 0h1v2h-1zm4 0h1v2h-1zm4 0h1v2h-1zm5 0h1v2h-1zm3 0h1v2h-1zm5 0h1v2h-1zm4 0h1v2h-1zm5 0h1v2h-1zm3 0h1v2h-1zm5 0h1v2h-1zm4 0h1v2h-1zm4 0h1v2h-1zm4 0h1v2h-1zm5 0h1v2h-1zm4 0h1v2h-1zm4 0h1v2h-1zm4 0h1v2h-1zm5 0h1v2h-1zm3 0h1v2h-1zm5 0h1v2h-1zm4 0h1v2h-1zm5 0h1v2h-1zm3 0h1v2h-1zm5 0h1v2h-1zm4 0h1v2h-1zm4 0h1v2h-1zm4 0h1v2h-1zm5 0h1v2h-1zm4 0h1v2h-1zm4 0h1v2h-1zm4 0h1v2h-1zm5 0h1v2h-1zm3 0h1v2h-1zm5 0h1v2h-1zm4 0h1v2h-1zm5 0h1v2h-1zm3 0h1v2h-1zm5 0h1v2h-1zm4 0h1v2h-1zm5 0h1v2h-1zm3 0h1v2h-1zm5 0h1v2h-1zm4 0h1v2h-1zm4 0h1v2h-1zm4 0h1v2h-1zm5 0h1v2h-1zm3 0h1v2h-1zm5 0h1v2h-1zm4 0h1v2h-1zm5 0h1v2h-1zm3 0h1v2h-1zm5 0h1v2h-1zm4 0h1v2h-1zm5 0h1v2h-1zm3 0h1v2h-1zm5 0h1v2h-1zm4 0h1v2h-1zm4 0h1v2h-1zm4 0h1v2h-1zm5 0h1v2h-1zm4 0h1v2h-1zm4 0h1v2h-1zm4 0h1v2h-1zm5 0h1v2h-1zm3 0h1v2h-1zm5 0h1v2h-1zm4 0h1v2h-1zm5 0h1v2h-1zm3 0h1v2h-1zm5 0h1v2h-1zm4 0h1v2h-1zm4 0h1v2h-1zm4 0h1v2h-1zm5 0h1v2h-1zm4 0h1v2h-1zm4 0h1v2h-1zm4 0h1v2h-1zm5 0h1v2h-1zm3 0h1v2h-1zm5 0h1v2h-1zm4 0h1v2h-1zm5 0h1v2h-1zm3 0h1v2h-1zm5 0h1v2h-1zm4 0h1v2h-1zm4 0h1v2h-1zm4 0h1v2h-1zm5 0h1v2h-1zm4 0h1v2h-1zm4 0h1v2h-1zm4 0h1v2h-1zm5 0h1v2h-1zm3 0h1v2h-1zm5 0h1v2h-1zm4 0h1v2h-1zm5 0h1v2h-1zm3 0h1v2h-1zm5 0h1v2h-1zm4 0h1v2h-1zm4 0h1v2h-1zm4 0h1v2h-1zm5 0h1v2h-1zm4 0h1v2h-1zm4 0h1v2h-1zm4 0h1v2h-1zm5 0h1v2h-1zm3 0h1v2h-1zm5 0h1v2h-1zm4 0h1v2h-1zm5 0h1v2h-1zm3 0h1v2h-1zm5 0h1v2h-1zm4 0h1v2h-1zm5 0h1v2h-1zm3 0h1v2h-1zm5 0h1v2h-1zm4 0h1v2h-1zm4 0h1v2h-1zm4 0h1v2h-1zm5 0h1v2h-1zm3 0h1v2h-1zm5 0h1v2h-1zm4 0h1v2h-1zm5 0h1v2h-1zm3 0h1v2h-1zm5 0h1v2h-1zm4 0h1v2h-1zm5 0h1v2h-1zm3 0h1v2h-1zm5 0h1v2h-1zm4 0h1v2h-1zm4 0h1v2h-1zm4 0h1v2h-1zm5 0h1v2h-1zm4 0h1v2h-1zm4 0h1v2h-1zm4 0h1v2h-1zm5 0h1v2h-1zm3 0h1v2h-1zm5 0h1v2h-1zm4 0h1v2h-1zm5 0h1v2h-1zm3 0h1v2h-1zm5 0h1v2h-1zm4 0h1v2h-1zm4 0h1v2h-1zm4 0h1v2h-1zm5 0h1v2h-1zm4 0h1v2h-1zm4 0h1v2h-1zm4 0h1v2h-1zm5 0h1v2h-1zm3 0h1v2h-1zm5 0h1v2h-1zm4 0h1v2h-1zm5 0h1v2h-1zm3 0h1v2h-1zm5 0h1v2h-1zm4 0h1v2h-1zm4 0h1v2h-1zm4 0h1v2h-1zm5 0h1v2h-1zm4 0h1v2h-1zm4 0h1v2h-1zm4 0h1v2h-1zm5 0h1v2h-1zm3 0h1v2h-1zm5 0h1v2h-1zm4 0h1v2h-1zm5 0h1v2h-1zm3 0h1v2h-1zm5 0h1v2h-1zm4 0h1v2h-1zm4 0h1v2h-1zm4 0h1v2h-1zm5 0h1v2h-1zm4 0h1v2h-1zm4 0h1v2h-1zm4 0h1v2h-1zm5 0h1v2h-1zm3 0h1v2h-1zm5 0h1v2h-1zm4 0h1v2h-1zm5 0h1v2h-1zm3 0h1v2h-1zm5 0h1v2h-1zm4 0h1v2h-1zm4 0h1v2h-1zm4 0h1v2h-1zm5 0h1v2h-1zm4 0h1v2h-1zm4 0h1v2h-1zm4 0h1v2h-1zm5 0h1v2h-1zm3 0h1v2h-1zm5 0h1v2h-1zm4 0h1v2h-1zm5 0h1v2h-1zm3 0h1v2h-1zm5 0h1v2h-1zm4 0h1v2h-1zm5 0h1v2h-1zm3 0h1v2h-1zm5 0h1v2h-1zm4 0h1v2h-1zm4 0h1v2h-1zm4 0h1v2h-1zm5 0h1v2h-1zm4 0h1v2h-1zm4 0h1v2h-1zm4 0h1v2h-1zm5 0h1v2h-1zm3 0h1v2h-1zm5 0h1v2h-1zm4 0h1v2h-1zm5 0h1v2h-1zm3 0h1v2h-1zm5 0h1v2h-1zm4 0h1v2h-1zm4 0h1v2h-1zm4 0h1v2h-1zm5 0h1v2h-1zm4 0h1v2h-1zm4 0h1v2h-1zm4 0h1v2h-1zm5 0h1v2h-1zm3 0h1v2h-1zm5 0h1v2h-1zm4 0h1v2h-1zm5 0h1v2h-1zm3 0h1v2h-1zm5 0h1v2h-1zm4 0h1v2h-1zm4 0h1v2h-1zm4 0h1v2h-1zm5 0h1v2h-1zm4 0h1v2h-1zm4 0h1v2h-1zm4 0h1v2h-1zm5 0h1v2h-1zm3 0h1v2h-1zm5 0h1v2h-1zm4 0h1v2h-1zm5 0h1v2h-1zm3 0h1v2h-1zm5 0h1v2h-1zm4 0h1v2h-1zm4 0h1v2h-1zm4 0h1v2h-1zm5 0h1v2h-1zm4 0h1v2h-1zm4 0h1v2h-1zm4 0h1v2h-1zm5 0h1v2h-1zm3 0h1v2h-1zm5 0h1v2h-1zm4 0h1v2h-1zm5 0h1v2h-1zm3 0h1v2h-1zm5 0h1v2h-1zm4 0h1v2h-1zm4 0h1v2h-1zm4 0h1v2h-1zm5 0h1v2h-1zm4 0h1v2h-1zM11 335h1v1h-1zm4 0h1v1h-1zm5 0h1v1h-1zm3 0h1v1h-1zm5 0h1v1h-1zm4 0h1v1h-1zm5 0h1v1h-1zm3 0h1v1h-1zm5 0h1v1h-1zm4 0h1v1h-1zm5 0h1v1h-1zm3 0h1v1h-1zm5 0h1v1h-1zm4 0h1v1h-1zm4 0h1v1h-1zm4 0h1v1h-1zm5 0h1v1h-1zm4 0h1v1h-1zm4 0h1v1h-1zm4 0h1v1h-1zm5 0h1v1h-1zm3 0h1v1h-1zm5 0h1v1h-1zm4 0h1v1h-1zm5 0h1v1h-1zm3 0h1v1h-1zm5 0h1v1h-1zm4 0h1v1h-1zm4 0h1v1h-1zm4 0h1v1h-1zm5 0h1v1h-1zm4 0h1v1h-1zm4 0h1v1h-1zm4 0h1v1h-1zm5 0h1v1h-1zm3 0h1v1h-1zm5 0h1v1h-1zm4 0h1v1h-1zm5 0h1v1h-1zm3 0h1v1h-1zm5 0h1v1h-1zm4 0h1v1h-1zm4 0h1v1h-1zm4 0h1v1h-1zm5 0h1v1h-1zm4 0h1v1h-1zm4 0h1v1h-1zm4 0h1v1h-1zm5 0h1v1h-1zm3 0h1v1h-1zm5 0h1v1h-1zm4 0h1v1h-1zm5 0h1v1h-1zm3 0h1v1h-1zm5 0h1v1h-1zm4 0h1v1h-1zm4 0h1v1h-1zm4 0h1v1h-1zm5 0h1v1h-1zm4 0h1v1h-1zm4 0h1v1h-1zm4 0h1v1h-1zm5 0h1v1h-1zm3 0h1v1h-1zm5 0h1v1h-1zm4 0h1v1h-1zm5 0h1v1h-1zm3 0h1v1h-1zm5 0h1v1h-1zm4 0h1v1h-1zm5 0h1v1h-1zm3 0h1v1h-1zm5 0h1v1h-1zm4 0h1v1h-1zm4 0h1v1h-1zm4 0h1v1h-1zm5 0h1v1h-1zm3 0h1v1h-1zm5 0h1v1h-1zm4 0h1v1h-1zm5 0h1v1h-1zm3 0h1v1h-1zm5 0h1v1h-1zm4 0h1v1h-1zm5 0h1v1h-1zm3 0h1v1h-1zm5 0h1v1h-1zm4 0h1v1h-1zm4 0h1v1h-1zm4 0h1v1h-1zm5 0h1v1h-1zm4 0h1v1h-1zm4 0h1v1h-1zm4 0h1v1h-1zm5 0h1v1h-1zm3 0h1v1h-1zm5 0h1v1h-1zm4 0h1v1h-1zm5 0h1v1h-1zm3 0h1v1h-1zm5 0h1v1h-1zm4 0h1v1h-1zm4 0h1v1h-1zm4 0h1v1h-1zm5 0h1v1h-1zm4 0h1v1h-1zm4 0h1v1h-1zm4 0h1v1h-1zm5 0h1v1h-1zm3 0h1v1h-1zm5 0h1v1h-1zm4 0h1v1h-1zm5 0h1v1h-1zm3 0h1v1h-1zm5 0h1v1h-1zm4 0h1v1h-1zm4 0h1v1h-1zm4 0h1v1h-1zm5 0h1v1h-1zm4 0h1v1h-1zm4 0h1v1h-1zm4 0h1v1h-1zm5 0h1v1h-1zm3 0h1v1h-1zm5 0h1v1h-1zm4 0h1v1h-1zm5 0h1v1h-1zm3 0h1v1h-1zm5 0h1v1h-1zm4 0h1v1h-1zm4 0h1v1h-1zm4 0h1v1h-1zm5 0h1v1h-1zm4 0h1v1h-1zm4 0h1v1h-1zm4 0h1v1h-1zm5 0h1v1h-1zm3 0h1v1h-1zm5 0h1v1h-1zm4 0h1v1h-1zm5 0h1v1h-1zm3 0h1v1h-1zm5 0h1v1h-1zm4 0h1v1h-1zm5 0h1v1h-1zm3 0h1v1h-1zm5 0h1v1h-1zm4 0h1v1h-1zm4 0h1v1h-1zm4 0h1v1h-1zm5 0h1v1h-1zm3 0h1v1h-1zm5 0h1v1h-1zm4 0h1v1h-1zm5 0h1v1h-1zm3 0h1v1h-1zm5 0h1v1h-1zm4 0h1v1h-1zm5 0h1v1h-1zm3 0h1v1h-1zm5 0h1v1h-1zm4 0h1v1h-1zm4 0h1v1h-1zm4 0h1v1h-1zm5 0h1v1h-1zm4 0h1v1h-1zm4 0h1v1h-1zm4 0h1v1h-1zm5 0h1v1h-1zm3 0h1v1h-1zm5 0h1v1h-1zm4 0h1v1h-1zm5 0h1v1h-1zm3 0h1v1h-1zm5 0h1v1h-1zm4 0h1v1h-1zm4 0h1v1h-1zm4 0h1v1h-1zm5 0h1v1h-1zm4 0h1v1h-1zm4 0h1v1h-1zm4 0h1v1h-1zm5 0h1v1h-1zm3 0h1v1h-1zm5 0h1v1h-1zm4 0h1v1h-1zm5 0h1v1h-1zm3 0h1v1h-1zm5 0h1v1h-1zm4 0h1v1h-1zm4 0h1v1h-1zm4 0h1v1h-1zm5 0h1v1h-1zm4 0h1v1h-1zm4 0h1v1h-1zm4 0h1v1h-1zm5 0h1v1h-1zm3 0h1v1h-1zm5 0h1v1h-1zm4 0h1v1h-1zm5 0h1v1h-1zm3 0h1v1h-1zm5 0h1v1h-1zm4 0h1v1h-1zm4 0h1v1h-1zm4 0h1v1h-1zm5 0h1v1h-1zm4 0h1v1h-1zm4 0h1v1h-1zm4 0h1v1h-1zm5 0h1v1h-1zm3 0h1v1h-1zm5 0h1v1h-1zm4 0h1v1h-1zm5 0h1v1h-1zm3 0h1v1h-1zm5 0h1v1h-1zm4 0h1v1h-1zm4 0h1v1h-1zm4 0h1v1h-1zm5 0h1v1h-1zm4 0h1v1h-1zm4 0h1v1h-1zm4 0h1v1h-1zm5 0h1v1h-1zm3 0h1v1h-1zm5 0h1v1h-1zm4 0h1v1h-1zm5 0h1v1h-1zm3 0h1v1h-1zm5 0h1v1h-1zm4 0h1v1h-1zm5 0h1v1h-1zm3 0h1v1h-1zm5 0h1v1h-1zm4 0h1v1h-1zm4 0h1v1h-1zm4 0h1v1h-1zm5 0h1v1h-1zm4 0h1v1h-1zm4 0h1v1h-1zm4 0h1v1h-1zm5 0h1v1h-1zm3 0h1v1h-1zm5 0h1v1h-1zm4 0h1v1h-1zm5 0h1v1h-1zm3 0h1v1h-1zm5 0h1v1h-1zm4 0h1v1h-1zm4 0h1v1h-1zm4 0h1v1h-1zm5 0h1v1h-1zm4 0h1v1h-1zm4 0h1v1h-1zm4 0h1v1h-1zm5 0h1v1h-1zm3 0h1v1h-1zm5 0h1v1h-1zm4 0h1v1h-1zm5 0h1v1h-1zm3 0h1v1h-1zm5 0h1v1h-1zm4 0h1v1h-1zm4 0h1v1h-1zm4 0h1v1h-1zm5 0h1v1h-1zm4 0h1v1h-1zm4 0h1v1h-1zm4 0h1v1h-1zm5 0h1v1h-1zm3 0h1v1h-1zm5 0h1v1h-1zm4 0h1v1h-1zm5 0h1v1h-1zm3 0h1v1h-1zm5 0h1v1h-1zm4 0h1v1h-1zm4 0h1v1h-1zm4 0h1v1h-1zm5 0h1v1h-1zm4 0h1v1h-1zm4 0h1v1h-1zm4 0h1v1h-1zm5 0h1v1h-1zm3 0h1v1h-1zm5 0h1v1h-1zm4 0h1v1h-1zm5 0h1v1h-1zm3 0h1v1h-1zm5 0h1v1h-1zm4 0h1v1h-1zm4 0h1v1h-1zm4 0h1v1h-1zm5 0h1v1h-1zm4 0h1v1h-1zM11 338h1v2h-1zm4 0h1v2h-1zm5 0h1v2h-1zm3 0h1v2h-1zm5 0h1v2h-1zm4 0h1v2h-1zm5 0h1v2h-1zm3 0h1v2h-1zm5 0h1v2h-1zm4 0h1v2h-1zm5 0h1v2h-1zm3 0h1v2h-1zm5 0h1v2h-1zm4 0h1v2h-1zm4 0h1v2h-1zm4 0h1v2h-1zm5 0h1v2h-1zm4 0h1v2h-1zm4 0h1v2h-1zm4 0h1v2h-1zm5 0h1v2h-1zm3 0h1v2h-1zm5 0h1v2h-1zm4 0h1v2h-1zm5 0h1v2h-1zm3 0h1v2h-1zm5 0h1v2h-1zm4 0h1v2h-1zm4 0h1v2h-1zm4 0h1v2h-1zm5 0h1v2h-1zm4 0h1v2h-1zm4 0h1v2h-1zm4 0h1v2h-1zm5 0h1v2h-1zm3 0h1v2h-1zm5 0h1v2h-1zm4 0h1v2h-1zm5 0h1v2h-1zm3 0h1v2h-1zm5 0h1v2h-1zm4 0h1v2h-1zm4 0h1v2h-1zm4 0h1v2h-1zm5 0h1v2h-1zm4 0h1v2h-1zm4 0h1v2h-1zm4 0h1v2h-1zm5 0h1v2h-1zm3 0h1v2h-1zm5 0h1v2h-1zm4 0h1v2h-1zm5 0h1v2h-1zm3 0h1v2h-1zm5 0h1v2h-1zm4 0h1v2h-1zm4 0h1v2h-1zm4 0h1v2h-1zm5 0h1v2h-1zm4 0h1v2h-1zm4 0h1v2h-1zm4 0h1v2h-1zm5 0h1v2h-1zm3 0h1v2h-1zm5 0h1v2h-1zm4 0h1v2h-1zm5 0h1v2h-1zm3 0h1v2h-1zm5 0h1v2h-1zm4 0h1v2h-1zm5 0h1v2h-1zm3 0h1v2h-1zm5 0h1v2h-1zm4 0h1v2h-1zm4 0h1v2h-1zm4 0h1v2h-1zm5 0h1v2h-1zm3 0h1v2h-1zm5 0h1v2h-1zm4 0h1v2h-1zm5 0h1v2h-1zm3 0h1v2h-1zm5 0h1v2h-1zm4 0h1v2h-1zm5 0h1v2h-1zm3 0h1v2h-1zm5 0h1v2h-1zm4 0h1v2h-1zm4 0h1v2h-1zm4 0h1v2h-1zm5 0h1v2h-1zm4 0h1v2h-1zm4 0h1v2h-1zm4 0h1v2h-1zm5 0h1v2h-1zm3 0h1v2h-1zm5 0h1v2h-1zm4 0h1v2h-1zm5 0h1v2h-1zm3 0h1v2h-1zm5 0h1v2h-1zm4 0h1v2h-1zm4 0h1v2h-1zm4 0h1v2h-1zm5 0h1v2h-1zm4 0h1v2h-1zm4 0h1v2h-1zm4 0h1v2h-1zm5 0h1v2h-1zm3 0h1v2h-1zm5 0h1v2h-1zm4 0h1v2h-1zm5 0h1v2h-1zm3 0h1v2h-1zm5 0h1v2h-1zm4 0h1v2h-1zm4 0h1v2h-1zm4 0h1v2h-1zm5 0h1v2h-1zm4 0h1v2h-1zm4 0h1v2h-1zm4 0h1v2h-1zm5 0h1v2h-1zm3 0h1v2h-1zm5 0h1v2h-1zm4 0h1v2h-1zm5 0h1v2h-1zm3 0h1v2h-1zm5 0h1v2h-1zm4 0h1v2h-1zm4 0h1v2h-1zm4 0h1v2h-1zm5 0h1v2h-1zm4 0h1v2h-1zm4 0h1v2h-1zm4 0h1v2h-1zm5 0h1v2h-1zm3 0h1v2h-1zm5 0h1v2h-1zm4 0h1v2h-1zm5 0h1v2h-1zm3 0h1v2h-1zm5 0h1v2h-1zm4 0h1v2h-1zm5 0h1v2h-1zm3 0h1v2h-1zm5 0h1v2h-1zm4 0h1v2h-1zm4 0h1v2h-1zm4 0h1v2h-1zm5 0h1v2h-1zm3 0h1v2h-1zm5 0h1v2h-1zm4 0h1v2h-1zm5 0h1v2h-1zm3 0h1v2h-1zm5 0h1v2h-1zm4 0h1v2h-1zm5 0h1v2h-1zm3 0h1v2h-1zm5 0h1v2h-1zm4 0h1v2h-1zm4 0h1v2h-1zm4 0h1v2h-1zm5 0h1v2h-1zm4 0h1v2h-1zm4 0h1v2h-1zm4 0h1v2h-1zm5 0h1v2h-1zm3 0h1v2h-1zm5 0h1v2h-1zm4 0h1v2h-1zm5 0h1v2h-1zm3 0h1v2h-1zm5 0h1v2h-1zm4 0h1v2h-1zm4 0h1v2h-1zm4 0h1v2h-1zm5 0h1v2h-1zm4 0h1v2h-1zm4 0h1v2h-1zm4 0h1v2h-1zm5 0h1v2h-1zm3 0h1v2h-1zm5 0h1v2h-1zm4 0h1v2h-1zm5 0h1v2h-1zm3 0h1v2h-1zm5 0h1v2h-1zm4 0h1v2h-1zm4 0h1v2h-1zm4 0h1v2h-1zm5 0h1v2h-1zm4 0h1v2h-1zm4 0h1v2h-1zm4 0h1v2h-1zm5 0h1v2h-1zm3 0h1v2h-1zm5 0h1v2h-1zm4 0h1v2h-1zm5 0h1v2h-1zm3 0h1v2h-1zm5 0h1v2h-1zm4 0h1v2h-1zm4 0h1v2h-1zm4 0h1v2h-1zm5 0h1v2h-1zm4 0h1v2h-1zm4 0h1v2h-1zm4 0h1v2h-1zm5 0h1v2h-1zm3 0h1v2h-1zm5 0h1v2h-1zm4 0h1v2h-1zm5 0h1v2h-1zm3 0h1v2h-1zm5 0h1v2h-1zm4 0h1v2h-1zm4 0h1v2h-1zm4 0h1v2h-1zm5 0h1v2h-1zm4 0h1v2h-1zm4 0h1v2h-1zm4 0h1v2h-1zm5 0h1v2h-1zm3 0h1v2h-1zm5 0h1v2h-1zm4 0h1v2h-1zm5 0h1v2h-1zm3 0h1v2h-1zm5 0h1v2h-1zm4 0h1v2h-1zm5 0h1v2h-1zm3 0h1v2h-1zm5 0h1v2h-1zm4 0h1v2h-1zm4 0h1v2h-1zm4 0h1v2h-1zm5 0h1v2h-1zm4 0h1v2h-1zm4 0h1v2h-1zm4 0h1v2h-1zm5 0h1v2h-1zm3 0h1v2h-1zm5 0h1v2h-1zm4 0h1v2h-1zm5 0h1v2h-1zm3 0h1v2h-1zm5 0h1v2h-1zm4 0h1v2h-1zm4 0h1v2h-1zm4 0h1v2h-1zm5 0h1v2h-1zm4 0h1v2h-1zm4 0h1v2h-1zm4 0h1v2h-1zm5 0h1v2h-1zm3 0h1v2h-1zm5 0h1v2h-1zm4 0h1v2h-1zm5 0h1v2h-1zm3 0h1v2h-1zm5 0h1v2h-1zm4 0h1v2h-1zm4 0h1v2h-1zm4 0h1v2h-1zm5 0h1v2h-1zm4 0h1v2h-1zm4 0h1v2h-1zm4 0h1v2h-1zm5 0h1v2h-1zm3 0h1v2h-1zm5 0h1v2h-1zm4 0h1v2h-1zm5 0h1v2h-1zm3 0h1v2h-1zm5 0h1v2h-1zm4 0h1v2h-1zm4 0h1v2h-1zm4 0h1v2h-1zm5 0h1v2h-1zm4 0h1v2h-1zm4 0h1v2h-1zm4 0h1v2h-1zm5 0h1v2h-1zm3 0h1v2h-1zm5 0h1v2h-1zm4 0h1v2h-1zm5 0h1v2h-1zm3 0h1v2h-1zm5 0h1v2h-1zm4 0h1v2h-1zm4 0h1v2h-1zm4 0h1v2h-1zm5 0h1v2h-1zm4 0h1v2h-1zM11 541h1v2h-1zm4 0h1v2h-1zm5 0h1v2h-1zm3 0h1v2h-1zm5 0h1v2h-1zm4 0h1v2h-1zm5 0h1v2h-1zm3 0h1v2h-1zm5 0h1v2h-1zm4 0h1v2h-1zm5 0h1v2h-1zm3 0h1v2h-1zm5 0h1v2h-1zm4 0h1v2h-1zm4 0h1v2h-1zm4 0h1v2h-1zm5 0h1v2h-1zm4 0h1v2h-1zm4 0h1v2h-1zm4 0h1v2h-1zm5 0h1v2h-1zm3 0h1v2h-1zm5 0h1v2h-1zm4 0h1v2h-1zm5 0h1v2h-1zm3 0h1v2h-1zm5 0h1v2h-1zm4 0h1v2h-1zm4 0h1v2h-1zm4 0h1v2h-1zm5 0h1v2h-1zm4 0h1v2h-1zm4 0h1v2h-1zm4 0h1v2h-1zm5 0h1v2h-1zm3 0h1v2h-1zm5 0h1v2h-1zm4 0h1v2h-1zm5 0h1v2h-1zm3 0h1v2h-1zm5 0h1v2h-1zm4 0h1v2h-1zm4 0h1v2h-1zm4 0h1v2h-1zm5 0h1v2h-1zm4 0h1v2h-1zm4 0h1v2h-1zm4 0h1v2h-1zm5 0h1v2h-1zm3 0h1v2h-1zm5 0h1v2h-1zm4 0h1v2h-1zm5 0h1v2h-1zm3 0h1v2h-1zm5 0h1v2h-1zm4 0h1v2h-1zm4 0h1v2h-1zm4 0h1v2h-1zm5 0h1v2h-1zm4 0h1v2h-1zm4 0h1v2h-1zm4 0h1v2h-1zm5 0h1v2h-1zm3 0h1v2h-1zm5 0h1v2h-1zm4 0h1v2h-1zm5 0h1v2h-1zm3 0h1v2h-1zm5 0h1v2h-1zm4 0h1v2h-1zm5 0h1v2h-1zm3 0h1v2h-1zm5 0h1v2h-1zm4 0h1v2h-1zm4 0h1v2h-1zm4 0h1v2h-1zm5 0h1v2h-1zm3 0h1v2h-1zm5 0h1v2h-1zm4 0h1v2h-1zm5 0h1v2h-1zm3 0h1v2h-1zm5 0h1v2h-1zm4 0h1v2h-1zm5 0h1v2h-1zm3 0h1v2h-1zm5 0h1v2h-1zm4 0h1v2h-1zm4 0h1v2h-1zm4 0h1v2h-1zm5 0h1v2h-1zm4 0h1v2h-1zm4 0h1v2h-1zm4 0h1v2h-1zm5 0h1v2h-1zm3 0h1v2h-1zm5 0h1v2h-1zm4 0h1v2h-1zm5 0h1v2h-1zm3 0h1v2h-1zm5 0h1v2h-1zm4 0h1v2h-1zm4 0h1v2h-1zm4 0h1v2h-1zm5 0h1v2h-1zm4 0h1v2h-1zm4 0h1v2h-1zm4 0h1v2h-1zm5 0h1v2h-1zm3 0h1v2h-1zm5 0h1v2h-1zm4 0h1v2h-1zm5 0h1v2h-1zm3 0h1v2h-1zm5 0h1v2h-1zm4 0h1v2h-1zm4 0h1v2h-1zm4 0h1v2h-1zm5 0h1v2h-1zm4 0h1v2h-1zm4 0h1v2h-1zm4 0h1v2h-1zm5 0h1v2h-1zm3 0h1v2h-1zm5 0h1v2h-1zm4 0h1v2h-1zm5 0h1v2h-1zm3 0h1v2h-1zm5 0h1v2h-1zm4 0h1v2h-1zm4 0h1v2h-1zm4 0h1v2h-1zm5 0h1v2h-1zm4 0h1v2h-1zm4 0h1v2h-1zm4 0h1v2h-1zm5 0h1v2h-1zm3 0h1v2h-1zm5 0h1v2h-1zm4 0h1v2h-1zm5 0h1v2h-1zm3 0h1v2h-1zm5 0h1v2h-1zm4 0h1v2h-1zM11 546h1v2h-1zm4 0h1v2h-1zm5 0h1v2h-1zm3 0h1v2h-1zm5 0h1v2h-1zm4 0h1v2h-1zm5 0h1v2h-1zm3 0h1v2h-1zm5 0h1v2h-1zm4 0h1v2h-1zm5 0h1v2h-1zm3 0h1v2h-1zm5 0h1v2h-1zm4 0h1v2h-1zm4 0h1v2h-1zm4 0h1v2h-1zm5 0h1v2h-1zm4 0h1v2h-1zm4 0h1v2h-1zm4 0h1v2h-1zm5 0h1v2h-1zm3 0h1v2h-1zm5 0h1v2h-1zm4 0h1v2h-1zm5 0h1v2h-1zm3 0h1v2h-1zm5 0h1v2h-1zm4 0h1v2h-1zm4 0h1v2h-1zm4 0h1v2h-1zm5 0h1v2h-1zm4 0h1v2h-1zm4 0h1v2h-1zm4 0h1v2h-1zm5 0h1v2h-1zm3 0h1v2h-1zm5 0h1v2h-1zm4 0h1v2h-1zm5 0h1v2h-1zm3 0h1v2h-1zm5 0h1v2h-1zm4 0h1v2h-1zm4 0h1v2h-1zm4 0h1v2h-1zm5 0h1v2h-1zm4 0h1v2h-1zm4 0h1v2h-1zm4 0h1v2h-1zm5 0h1v2h-1zm3 0h1v2h-1zm5 0h1v2h-1zm4 0h1v2h-1zm5 0h1v2h-1zm3 0h1v2h-1zm5 0h1v2h-1zm4 0h1v2h-1zm4 0h1v2h-1zm4 0h1v2h-1zm5 0h1v2h-1zm4 0h1v2h-1zm4 0h1v2h-1zm4 0h1v2h-1zm5 0h1v2h-1zm3 0h1v2h-1zm5 0h1v2h-1zm4 0h1v2h-1zm5 0h1v2h-1zm3 0h1v2h-1zm5 0h1v2h-1zm4 0h1v2h-1zm5 0h1v2h-1zm3 0h1v2h-1zm5 0h1v2h-1zm4 0h1v2h-1zm4 0h1v2h-1zm4 0h1v2h-1zm5 0h1v2h-1zm3 0h1v2h-1zm5 0h1v2h-1zm4 0h1v2h-1zm5 0h1v2h-1zm3 0h1v2h-1zm5 0h1v2h-1zm4 0h1v2h-1zm5 0h1v2h-1zm3 0h1v2h-1zm5 0h1v2h-1zm4 0h1v2h-1zm4 0h1v2h-1zm4 0h1v2h-1zm5 0h1v2h-1zm4 0h1v2h-1zm4 0h1v2h-1zm4 0h1v2h-1zm5 0h1v2h-1zm3 0h1v2h-1zm5 0h1v2h-1zm4 0h1v2h-1zm5 0h1v2h-1zm3 0h1v2h-1zm5 0h1v2h-1zm4 0h1v2h-1zm4 0h1v2h-1zm4 0h1v2h-1zm5 0h1v2h-1zm4 0h1v2h-1zm4 0h1v2h-1zm4 0h1v2h-1zm5 0h1v2h-1zm3 0h1v2h-1zm5 0h1v2h-1zm4 0h1v2h-1zm5 0h1v2h-1zm3 0h1v2h-1zm5 0h1v2h-1zm4 0h1v2h-1zm4 0h1v2h-1zm4 0h1v2h-1zm5 0h1v2h-1zm4 0h1v2h-1zm4 0h1v2h-1zm4 0h1v2h-1zm5 0h1v2h-1zm3 0h1v2h-1zm5 0h1v2h-1zm4 0h1v2h-1zm5 0h1v2h-1zm3 0h1v2h-1zm5 0h1v2h-1zm4 0h1v2h-1zm4 0h1v2h-1zm4 0h1v2h-1zm5 0h1v2h-1zm4 0h1v2h-1zm4 0h1v2h-1zm4 0h1v2h-1zm5 0h1v2h-1zm3 0h1v2h-1zm5 0h1v2h-1zm4 0h1v2h-1zm5 0h1v2h-1zm3 0h1v2h-1zm5 0h1v2h-1zm4 0h1v2h-1zM11 550h1v2h-1zm4 0h1v2h-1zm5 0h1v2h-1zm3 0h1v2h-1zm5 0h1v2h-1zm4 0h1v2h-1zm5 0h1v2h-1zm3 0h1v2h-1zm5 0h1v2h-1zm4 0h1v2h-1zm5 0h1v2h-1zm3 0h1v2h-1zm5 0h1v2h-1zm4 0h1v2h-1zm4 0h1v2h-1zm4 0h1v2h-1zm5 0h1v2h-1zm4 0h1v2h-1zm4 0h1v2h-1zm4 0h1v2h-1zm5 0h1v2h-1zm3 0h1v2h-1zm5 0h1v2h-1zm4 0h1v2h-1zm5 0h1v2h-1zm3 0h1v2h-1zm5 0h1v2h-1zm4 0h1v2h-1zm4 0h1v2h-1zm4 0h1v2h-1zm5 0h1v2h-1zm4 0h1v2h-1zm4 0h1v2h-1zm4 0h1v2h-1zm5 0h1v2h-1zm3 0h1v2h-1zm5 0h1v2h-1zm4 0h1v2h-1zm5 0h1v2h-1zm3 0h1v2h-1zm5 0h1v2h-1zm4 0h1v2h-1zm4 0h1v2h-1zm4 0h1v2h-1zm5 0h1v2h-1zm4 0h1v2h-1zm4 0h1v2h-1zm4 0h1v2h-1zm5 0h1v2h-1zm3 0h1v2h-1zm5 0h1v2h-1zm4 0h1v2h-1zm5 0h1v2h-1zm3 0h1v2h-1zm5 0h1v2h-1zm4 0h1v2h-1zm4 0h1v2h-1zm4 0h1v2h-1zm5 0h1v2h-1zm4 0h1v2h-1zm4 0h1v2h-1zm4 0h1v2h-1zm5 0h1v2h-1zm3 0h1v2h-1zm5 0h1v2h-1zm4 0h1v2h-1zm5 0h1v2h-1zm3 0h1v2h-1zm5 0h1v2h-1zm4 0h1v2h-1zm5 0h1v2h-1zm3 0h1v2h-1zm5 0h1v2h-1zm4 0h1v2h-1zm4 0h1v2h-1zm4 0h1v2h-1zm5 0h1v2h-1zm3 0h1v2h-1zm5 0h1v2h-1zm4 0h1v2h-1zm5 0h1v2h-1zm3 0h1v2h-1zm5 0h1v2h-1zm4 0h1v2h-1zm5 0h1v2h-1zm3 0h1v2h-1zm5 0h1v2h-1zm4 0h1v2h-1zm4 0h1v2h-1zm4 0h1v2h-1zm5 0h1v2h-1zm4 0h1v2h-1zm4 0h1v2h-1zm4 0h1v2h-1zm5 0h1v2h-1zm3 0h1v2h-1zm5 0h1v2h-1zm4 0h1v2h-1zm5 0h1v2h-1zm3 0h1v2h-1zm5 0h1v2h-1zm4 0h1v2h-1zm4 0h1v2h-1zm4 0h1v2h-1zm5 0h1v2h-1zm4 0h1v2h-1zm4 0h1v2h-1zm4 0h1v2h-1zm5 0h1v2h-1zm3 0h1v2h-1zm5 0h1v2h-1zm4 0h1v2h-1zm5 0h1v2h-1zm3 0h1v2h-1zm5 0h1v2h-1zm4 0h1v2h-1zm4 0h1v2h-1zm4 0h1v2h-1zm5 0h1v2h-1zm4 0h1v2h-1zm4 0h1v2h-1zm4 0h1v2h-1zm5 0h1v2h-1zm3 0h1v2h-1zm5 0h1v2h-1zm4 0h1v2h-1zm5 0h1v2h-1zm3 0h1v2h-1zm5 0h1v2h-1zm4 0h1v2h-1zm4 0h1v2h-1zm4 0h1v2h-1zm5 0h1v2h-1zm4 0h1v2h-1zm4 0h1v2h-1zm4 0h1v2h-1zm5 0h1v2h-1zm3 0h1v2h-1zm5 0h1v2h-1zm4 0h1v2h-1zm5 0h1v2h-1zm3 0h1v2h-1zm5 0h1v2h-1zm4 0h1v2h-1zM11 554h1v2h-1zm4 0h1v2h-1zm5 0h1v2h-1zm3 0h1v2h-1zm5 0h1v2h-1zm4 0h1v2h-1zm5 0h1v2h-1zm3 0h1v2h-1zm5 0h1v2h-1zm4 0h1v2h-1zm5 0h1v2h-1zm3 0h1v2h-1zm5 0h1v2h-1zm4 0h1v2h-1zm4 0h1v2h-1zm4 0h1v2h-1zm5 0h1v2h-1zm4 0h1v2h-1zm4 0h1v2h-1zm4 0h1v2h-1zm5 0h1v2h-1zm3 0h1v2h-1zm5 0h1v2h-1zm4 0h1v2h-1zm5 0h1v2h-1zm3 0h1v2h-1zm5 0h1v2h-1zm4 0h1v2h-1zm4 0h1v2h-1zm4 0h1v2h-1zm5 0h1v2h-1zm4 0h1v2h-1zm4 0h1v2h-1zm4 0h1v2h-1zm5 0h1v2h-1zm3 0h1v2h-1zm5 0h1v2h-1zm4 0h1v2h-1zm5 0h1v2h-1zm3 0h1v2h-1zm5 0h1v2h-1zm4 0h1v2h-1zm4 0h1v2h-1zm4 0h1v2h-1zm5 0h1v2h-1zm4 0h1v2h-1zm4 0h1v2h-1zm4 0h1v2h-1zm5 0h1v2h-1zm3 0h1v2h-1zm5 0h1v2h-1zm4 0h1v2h-1zm5 0h1v2h-1zm3 0h1v2h-1zm5 0h1v2h-1zm4 0h1v2h-1zm4 0h1v2h-1zm4 0h1v2h-1zm5 0h1v2h-1zm4 0h1v2h-1zm4 0h1v2h-1zm4 0h1v2h-1zm5 0h1v2h-1zm3 0h1v2h-1zm5 0h1v2h-1zm4 0h1v2h-1zm5 0h1v2h-1zm3 0h1v2h-1zm5 0h1v2h-1zm4 0h1v2h-1zm5 0h1v2h-1zm3 0h1v2h-1zm5 0h1v2h-1zm4 0h1v2h-1zm4 0h1v2h-1zm4 0h1v2h-1zm5 0h1v2h-1zm3 0h1v2h-1zm5 0h1v2h-1zm4 0h1v2h-1zm5 0h1v2h-1zm3 0h1v2h-1zm5 0h1v2h-1zm4 0h1v2h-1zm5 0h1v2h-1zm3 0h1v2h-1zm5 0h1v2h-1zm4 0h1v2h-1zm4 0h1v2h-1zm4 0h1v2h-1zm5 0h1v2h-1zm4 0h1v2h-1zm4 0h1v2h-1zm4 0h1v2h-1zm5 0h1v2h-1zm3 0h1v2h-1zm5 0h1v2h-1zm4 0h1v2h-1zm5 0h1v2h-1zm3 0h1v2h-1zm5 0h1v2h-1zm4 0h1v2h-1zm4 0h1v2h-1zm4 0h1v2h-1zm5 0h1v2h-1zm4 0h1v2h-1zm4 0h1v2h-1zm4 0h1v2h-1zm5 0h1v2h-1zm3 0h1v2h-1zm5 0h1v2h-1zm4 0h1v2h-1zm5 0h1v2h-1zm3 0h1v2h-1zm5 0h1v2h-1zm4 0h1v2h-1zm4 0h1v2h-1zm4 0h1v2h-1zm5 0h1v2h-1zm4 0h1v2h-1zm4 0h1v2h-1zm4 0h1v2h-1zm5 0h1v2h-1zm3 0h1v2h-1zm5 0h1v2h-1zm4 0h1v2h-1zm5 0h1v2h-1zm3 0h1v2h-1zm5 0h1v2h-1zm4 0h1v2h-1zm4 0h1v2h-1zm4 0h1v2h-1zm5 0h1v2h-1zm4 0h1v2h-1zm4 0h1v2h-1zm4 0h1v2h-1zm5 0h1v2h-1zm3 0h1v2h-1zm5 0h1v2h-1zm4 0h1v2h-1zm5 0h1v2h-1zm3 0h1v2h-1zm5 0h1v2h-1zm4 0h1v2h-1zM11 558h1v2h-1zm4 0h1v2h-1zm5 0h1v2h-1zm3 0h1v2h-1zm5 0h1v2h-1zm4 0h1v2h-1zm5 0h1v2h-1zm3 0h1v2h-1zm5 0h1v2h-1zm4 0h1v2h-1zm5 0h1v2h-1zm3 0h1v2h-1zm5 0h1v2h-1zm4 0h1v2h-1zm4 0h1v2h-1zm4 0h1v2h-1zm5 0h1v2h-1zm4 0h1v2h-1zm4 0h1v2h-1zm4 0h1v2h-1zm5 0h1v2h-1zm3 0h1v2h-1zm5 0h1v2h-1zm4 0h1v2h-1zm5 0h1v2h-1zm3 0h1v2h-1zm5 0h1v2h-1zm4 0h1v2h-1zm4 0h1v2h-1zm4 0h1v2h-1zm5 0h1v2h-1zm4 0h1v2h-1zm4 0h1v2h-1zm4 0h1v2h-1zm5 0h1v2h-1zm3 0h1v2h-1zm5 0h1v2h-1zm4 0h1v2h-1zm5 0h1v2h-1zm3 0h1v2h-1zm5 0h1v2h-1zm4 0h1v2h-1zm4 0h1v2h-1zm4 0h1v2h-1zm5 0h1v2h-1zm4 0h1v2h-1zm4 0h1v2h-1zm4 0h1v2h-1zm5 0h1v2h-1zm3 0h1v2h-1zm5 0h1v2h-1zm4 0h1v2h-1zm5 0h1v2h-1zm3 0h1v2h-1zm5 0h1v2h-1zm4 0h1v2h-1zm4 0h1v2h-1zm4 0h1v2h-1zm5 0h1v2h-1zm4 0h1v2h-1zm4 0h1v2h-1zm4 0h1v2h-1zm5 0h1v2h-1zm3 0h1v2h-1zm5 0h1v2h-1zm4 0h1v2h-1zm5 0h1v2h-1zm3 0h1v2h-1zm5 0h1v2h-1zm4 0h1v2h-1zm5 0h1v2h-1zm3 0h1v2h-1zm5 0h1v2h-1zm4 0h1v2h-1zm4 0h1v2h-1zm4 0h1v2h-1zm5 0h1v2h-1zm3 0h1v2h-1zm5 0h1v2h-1zm4 0h1v2h-1zm5 0h1v2h-1zm3 0h1v2h-1zm5 0h1v2h-1zm4 0h1v2h-1zm5 0h1v2h-1zm3 0h1v2h-1zm5 0h1v2h-1zm4 0h1v2h-1zm4 0h1v2h-1zm4 0h1v2h-1zm5 0h1v2h-1zm4 0h1v2h-1zm4 0h1v2h-1zm4 0h1v2h-1zm5 0h1v2h-1zm3 0h1v2h-1zm5 0h1v2h-1zm4 0h1v2h-1zm5 0h1v2h-1zm3 0h1v2h-1zm5 0h1v2h-1zm4 0h1v2h-1zm4 0h1v2h-1zm4 0h1v2h-1zm5 0h1v2h-1zm4 0h1v2h-1zm4 0h1v2h-1zm4 0h1v2h-1zm5 0h1v2h-1zm3 0h1v2h-1zm5 0h1v2h-1zm4 0h1v2h-1zm5 0h1v2h-1zm3 0h1v2h-1zm5 0h1v2h-1zm4 0h1v2h-1zm4 0h1v2h-1zm4 0h1v2h-1zm5 0h1v2h-1zm4 0h1v2h-1zm4 0h1v2h-1zm4 0h1v2h-1zm5 0h1v2h-1zm3 0h1v2h-1zm5 0h1v2h-1zm4 0h1v2h-1zm5 0h1v2h-1zm3 0h1v2h-1zm5 0h1v2h-1zm4 0h1v2h-1zm4 0h1v2h-1zm4 0h1v2h-1zm5 0h1v2h-1zm4 0h1v2h-1zm4 0h1v2h-1zm4 0h1v2h-1zm5 0h1v2h-1zm3 0h1v2h-1zm5 0h1v2h-1zm4 0h1v2h-1zm5 0h1v2h-1zm3 0h1v2h-1zm5 0h1v2h-1zm4 0h1v2h-1zM11 563h1v2h-1zm4 0h1v2h-1zm5 0h1v2h-1zm3 0h1v2h-1zm5 0h1v2h-1zm4 0h1v2h-1zm5 0h1v2h-1zm3 0h1v2h-1zm5 0h1v2h-1zm4 0h1v2h-1zm5 0h1v2h-1zm3 0h1v2h-1zm5 0h1v2h-1zm4 0h1v2h-1zm4 0h1v2h-1zm4 0h1v2h-1zm5 0h1v2h-1zm4 0h1v2h-1zm4 0h1v2h-1zm4 0h1v2h-1zm5 0h1v2h-1zm3 0h1v2h-1zm5 0h1v2h-1zm4 0h1v2h-1zm5 0h1v2h-1zm3 0h1v2h-1zm5 0h1v2h-1zm4 0h1v2h-1zm4 0h1v2h-1zm4 0h1v2h-1zm5 0h1v2h-1zm4 0h1v2h-1zm4 0h1v2h-1zm4 0h1v2h-1zm5 0h1v2h-1zm3 0h1v2h-1zm5 0h1v2h-1zm4 0h1v2h-1zm5 0h1v2h-1zm3 0h1v2h-1zm5 0h1v2h-1zm4 0h1v2h-1zm4 0h1v2h-1zm4 0h1v2h-1zm5 0h1v2h-1zm4 0h1v2h-1zm4 0h1v2h-1zm4 0h1v2h-1zm5 0h1v2h-1zm3 0h1v2h-1zm5 0h1v2h-1zm4 0h1v2h-1zm5 0h1v2h-1zm3 0h1v2h-1zm5 0h1v2h-1zm4 0h1v2h-1zm4 0h1v2h-1zm4 0h1v2h-1zm5 0h1v2h-1zm4 0h1v2h-1zm4 0h1v2h-1zm4 0h1v2h-1zm5 0h1v2h-1zm3 0h1v2h-1zm5 0h1v2h-1zm4 0h1v2h-1zm5 0h1v2h-1zm3 0h1v2h-1zm5 0h1v2h-1zm4 0h1v2h-1zm5 0h1v2h-1zm3 0h1v2h-1zm5 0h1v2h-1zm4 0h1v2h-1zm4 0h1v2h-1zm4 0h1v2h-1zm5 0h1v2h-1zm3 0h1v2h-1zm5 0h1v2h-1zm4 0h1v2h-1zm5 0h1v2h-1zm3 0h1v2h-1zm5 0h1v2h-1zm4 0h1v2h-1zm5 0h1v2h-1zm3 0h1v2h-1zm5 0h1v2h-1zm4 0h1v2h-1zm4 0h1v2h-1zm4 0h1v2h-1zm5 0h1v2h-1zm4 0h1v2h-1zm4 0h1v2h-1zm4 0h1v2h-1zm5 0h1v2h-1zm3 0h1v2h-1zm5 0h1v2h-1zm4 0h1v2h-1zm5 0h1v2h-1zm3 0h1v2h-1zm5 0h1v2h-1zm4 0h1v2h-1zm4 0h1v2h-1zm4 0h1v2h-1zm5 0h1v2h-1zm4 0h1v2h-1zm4 0h1v2h-1zm4 0h1v2h-1zm5 0h1v2h-1zm3 0h1v2h-1zm5 0h1v2h-1zm4 0h1v2h-1zm5 0h1v2h-1zm3 0h1v2h-1zm5 0h1v2h-1zm4 0h1v2h-1zm4 0h1v2h-1zm4 0h1v2h-1zm5 0h1v2h-1zm4 0h1v2h-1zm4 0h1v2h-1zm4 0h1v2h-1zm5 0h1v2h-1zm3 0h1v2h-1zm5 0h1v2h-1zm4 0h1v2h-1zm5 0h1v2h-1zm3 0h1v2h-1zm5 0h1v2h-1zm4 0h1v2h-1zm4 0h1v2h-1zm4 0h1v2h-1zm5 0h1v2h-1zm4 0h1v2h-1zm4 0h1v2h-1zm4 0h1v2h-1zm5 0h1v2h-1zm3 0h1v2h-1zm5 0h1v2h-1zm4 0h1v2h-1zm5 0h1v2h-1zm3 0h1v2h-1zm5 0h1v2h-1zm4 0h1v2h-1zM11 567h1v2h-1zm4 0h1v2h-1zm5 0h1v2h-1zm3 0h1v2h-1zm5 0h1v2h-1zm4 0h1v2h-1zm5 0h1v2h-1zm3 0h1v2h-1zm5 0h1v2h-1zm4 0h1v2h-1zm5 0h1v2h-1zm3 0h1v2h-1zm5 0h1v2h-1zm4 0h1v2h-1zm4 0h1v2h-1zm4 0h1v2h-1zm5 0h1v2h-1zm4 0h1v2h-1zm4 0h1v2h-1zm4 0h1v2h-1zm5 0h1v2h-1zm3 0h1v2h-1zm5 0h1v2h-1zm4 0h1v2h-1zm5 0h1v2h-1zm3 0h1v2h-1zm5 0h1v2h-1zm4 0h1v2h-1zm4 0h1v2h-1zm4 0h1v2h-1zm5 0h1v2h-1zm4 0h1v2h-1zm4 0h1v2h-1zm4 0h1v2h-1zm5 0h1v2h-1zm3 0h1v2h-1zm5 0h1v2h-1zm4 0h1v2h-1zm5 0h1v2h-1zm3 0h1v2h-1zm5 0h1v2h-1zm4 0h1v2h-1zm4 0h1v2h-1zm4 0h1v2h-1zm5 0h1v2h-1zm4 0h1v2h-1zm4 0h1v2h-1zm4 0h1v2h-1zm5 0h1v2h-1zm3 0h1v2h-1zm5 0h1v2h-1zm4 0h1v2h-1zm5 0h1v2h-1zm3 0h1v2h-1zm5 0h1v2h-1zm4 0h1v2h-1zm4 0h1v2h-1zm4 0h1v2h-1zm5 0h1v2h-1zm4 0h1v2h-1zm4 0h1v2h-1zm4 0h1v2h-1zm5 0h1v2h-1zm3 0h1v2h-1zm5 0h1v2h-1zm4 0h1v2h-1zm5 0h1v2h-1zm3 0h1v2h-1zm5 0h1v2h-1zm4 0h1v2h-1zm5 0h1v2h-1zm3 0h1v2h-1zm5 0h1v2h-1zm4 0h1v2h-1zm4 0h1v2h-1zm4 0h1v2h-1zm5 0h1v2h-1zm3 0h1v2h-1zm5 0h1v2h-1zm4 0h1v2h-1zm5 0h1v2h-1zm3 0h1v2h-1zm5 0h1v2h-1zm4 0h1v2h-1zm5 0h1v2h-1zm3 0h1v2h-1zm5 0h1v2h-1zm4 0h1v2h-1zm4 0h1v2h-1zm4 0h1v2h-1zm5 0h1v2h-1zm4 0h1v2h-1zm4 0h1v2h-1zm4 0h1v2h-1zm5 0h1v2h-1zm3 0h1v2h-1zm5 0h1v2h-1zm4 0h1v2h-1zm5 0h1v2h-1zm3 0h1v2h-1zm5 0h1v2h-1zm4 0h1v2h-1zm4 0h1v2h-1zm4 0h1v2h-1zm5 0h1v2h-1zm4 0h1v2h-1zm4 0h1v2h-1zm4 0h1v2h-1zm5 0h1v2h-1zm3 0h1v2h-1zm5 0h1v2h-1zm4 0h1v2h-1zm5 0h1v2h-1zm3 0h1v2h-1zm5 0h1v2h-1zm4 0h1v2h-1zm4 0h1v2h-1zm4 0h1v2h-1zm5 0h1v2h-1zm4 0h1v2h-1zm4 0h1v2h-1zm4 0h1v2h-1zm5 0h1v2h-1zm3 0h1v2h-1zm5 0h1v2h-1zm4 0h1v2h-1zm5 0h1v2h-1zm3 0h1v2h-1zm5 0h1v2h-1zm4 0h1v2h-1zm4 0h1v2h-1zm4 0h1v2h-1zm5 0h1v2h-1zm4 0h1v2h-1zm4 0h1v2h-1zm4 0h1v2h-1zm5 0h1v2h-1zm3 0h1v2h-1zm5 0h1v2h-1zm4 0h1v2h-1zm5 0h1v2h-1zm3 0h1v2h-1zm5 0h1v2h-1zm4 0h1v2h-1zM11 571h1v2h-1zm4 0h1v2h-1zm5 0h1v2h-1zm3 0h1v2h-1zm5 0h1v2h-1zm4 0h1v2h-1zm5 0h1v2h-1zm3 0h1v2h-1zm5 0h1v2h-1zm4 0h1v2h-1zm5 0h1v2h-1zm3 0h1v2h-1zm5 0h1v2h-1zm4 0h1v2h-1zm4 0h1v2h-1zm4 0h1v2h-1zm5 0h1v2h-1zm4 0h1v2h-1zm4 0h1v2h-1zm4 0h1v2h-1zm5 0h1v2h-1zm3 0h1v2h-1zm5 0h1v2h-1zm4 0h1v2h-1zm5 0h1v2h-1zm3 0h1v2h-1zm5 0h1v2h-1zm4 0h1v2h-1zm4 0h1v2h-1zm4 0h1v2h-1zm5 0h1v2h-1zm4 0h1v2h-1zm4 0h1v2h-1zm4 0h1v2h-1zm5 0h1v2h-1zm3 0h1v2h-1zm5 0h1v2h-1zm4 0h1v2h-1zm5 0h1v2h-1zm3 0h1v2h-1zm5 0h1v2h-1zm4 0h1v2h-1zm4 0h1v2h-1zm4 0h1v2h-1zm5 0h1v2h-1zm4 0h1v2h-1zm4 0h1v2h-1zm4 0h1v2h-1zm5 0h1v2h-1zm3 0h1v2h-1zm5 0h1v2h-1zm4 0h1v2h-1zm5 0h1v2h-1zm3 0h1v2h-1zm5 0h1v2h-1zm4 0h1v2h-1zm4 0h1v2h-1zm4 0h1v2h-1zm5 0h1v2h-1zm4 0h1v2h-1zm4 0h1v2h-1zm4 0h1v2h-1zm5 0h1v2h-1zm3 0h1v2h-1zm5 0h1v2h-1zm4 0h1v2h-1zm5 0h1v2h-1zm3 0h1v2h-1zm5 0h1v2h-1zm4 0h1v2h-1zm5 0h1v2h-1zm3 0h1v2h-1zm5 0h1v2h-1zm4 0h1v2h-1zm4 0h1v2h-1zm4 0h1v2h-1zm5 0h1v2h-1zm3 0h1v2h-1zm5 0h1v2h-1zm4 0h1v2h-1zm5 0h1v2h-1zm3 0h1v2h-1zm5 0h1v2h-1zm4 0h1v2h-1zm5 0h1v2h-1zm3 0h1v2h-1zm5 0h1v2h-1zm4 0h1v2h-1zm4 0h1v2h-1zm4 0h1v2h-1zm5 0h1v2h-1zm4 0h1v2h-1zm4 0h1v2h-1zm4 0h1v2h-1zm5 0h1v2h-1zm3 0h1v2h-1zm5 0h1v2h-1zm4 0h1v2h-1zm5 0h1v2h-1zm3 0h1v2h-1zm5 0h1v2h-1zm4 0h1v2h-1zm4 0h1v2h-1zm4 0h1v2h-1zm5 0h1v2h-1zm4 0h1v2h-1zm4 0h1v2h-1zm4 0h1v2h-1zm5 0h1v2h-1zm3 0h1v2h-1zm5 0h1v2h-1zm4 0h1v2h-1zm5 0h1v2h-1zm3 0h1v2h-1zm5 0h1v2h-1zm4 0h1v2h-1zm4 0h1v2h-1zm4 0h1v2h-1zm5 0h1v2h-1zm4 0h1v2h-1zm4 0h1v2h-1zm4 0h1v2h-1zm5 0h1v2h-1zm3 0h1v2h-1zm5 0h1v2h-1zm4 0h1v2h-1zm5 0h1v2h-1zm3 0h1v2h-1zm5 0h1v2h-1zm4 0h1v2h-1zm4 0h1v2h-1zm4 0h1v2h-1zm5 0h1v2h-1zm4 0h1v2h-1zm4 0h1v2h-1zm4 0h1v2h-1zm5 0h1v2h-1zm3 0h1v2h-1zm5 0h1v2h-1zm4 0h1v2h-1zm5 0h1v2h-1zm3 0h1v2h-1zm5 0h1v2h-1zm4 0h1v2h-1zM11 575h1v1h-1zm4 0h1v1h-1zm5 0h1v1h-1zm3 0h1v1h-1zm5 0h1v1h-1zm4 0h1v1h-1zm5 0h1v1h-1zm3 0h1v1h-1zm5 0h1v1h-1zm4 0h1v1h-1zm5 0h1v1h-1zm3 0h1v1h-1zm5 0h1v1h-1zm4 0h1v1h-1zm4 0h1v1h-1zm4 0h1v1h-1zm5 0h1v1h-1zm4 0h1v1h-1zm4 0h1v1h-1zm4 0h1v1h-1zm5 0h1v1h-1zm3 0h1v1h-1zm5 0h1v1h-1zm4 0h1v1h-1zm5 0h1v1h-1zm3 0h1v1h-1zm5 0h1v1h-1zm4 0h1v1h-1zm4 0h1v1h-1zm4 0h1v1h-1zm5 0h1v1h-1zm4 0h1v1h-1zm4 0h1v1h-1zm4 0h1v1h-1zm5 0h1v1h-1zm3 0h1v1h-1zm5 0h1v1h-1zm4 0h1v1h-1zm5 0h1v1h-1zm3 0h1v1h-1zm5 0h1v1h-1zm4 0h1v1h-1zm4 0h1v1h-1zm4 0h1v1h-1zm5 0h1v1h-1zm4 0h1v1h-1zm4 0h1v1h-1zm4 0h1v1h-1zm5 0h1v1h-1zm3 0h1v1h-1zm5 0h1v1h-1zm4 0h1v1h-1zm5 0h1v1h-1zm3 0h1v1h-1zm5 0h1v1h-1zm4 0h1v1h-1zm4 0h1v1h-1zm4 0h1v1h-1zm5 0h1v1h-1zm4 0h1v1h-1zm4 0h1v1h-1zm4 0h1v1h-1zm5 0h1v1h-1zm3 0h1v1h-1zm5 0h1v1h-1zm4 0h1v1h-1zm5 0h1v1h-1zm3 0h1v1h-1zm5 0h1v1h-1zm4 0h1v1h-1zm5 0h1v1h-1zm3 0h1v1h-1zm5 0h1v1h-1zm4 0h1v1h-1zm4 0h1v1h-1zm4 0h1v1h-1zm5 0h1v1h-1zm3 0h1v1h-1zm5 0h1v1h-1zm4 0h1v1h-1zm5 0h1v1h-1zm3 0h1v1h-1zm5 0h1v1h-1zm4 0h1v1h-1zm5 0h1v1h-1zm3 0h1v1h-1zm5 0h1v1h-1zm4 0h1v1h-1zm4 0h1v1h-1zm4 0h1v1h-1zm5 0h1v1h-1zm4 0h1v1h-1zm4 0h1v1h-1zm4 0h1v1h-1zm5 0h1v1h-1zm3 0h1v1h-1zm5 0h1v1h-1zm4 0h1v1h-1zm5 0h1v1h-1zm3 0h1v1h-1zm5 0h1v1h-1zm4 0h1v1h-1zm4 0h1v1h-1zm4 0h1v1h-1zm5 0h1v1h-1zm4 0h1v1h-1zm4 0h1v1h-1zm4 0h1v1h-1zm5 0h1v1h-1zm3 0h1v1h-1zm5 0h1v1h-1zm4 0h1v1h-1zm5 0h1v1h-1zm3 0h1v1h-1zm5 0h1v1h-1zm4 0h1v1h-1zm4 0h1v1h-1zm4 0h1v1h-1zm5 0h1v1h-1zm4 0h1v1h-1zm4 0h1v1h-1zm4 0h1v1h-1zm5 0h1v1h-1zm3 0h1v1h-1zm5 0h1v1h-1zm4 0h1v1h-1zm5 0h1v1h-1zm3 0h1v1h-1zm5 0h1v1h-1zm4 0h1v1h-1zm4 0h1v1h-1zm4 0h1v1h-1zm5 0h1v1h-1zm4 0h1v1h-1zm4 0h1v1h-1zm4 0h1v1h-1zm5 0h1v1h-1zm3 0h1v1h-1zm5 0h1v1h-1zm4 0h1v1h-1zm5 0h1v1h-1zm3 0h1v1h-1zm5 0h1v1h-1zm4 0h1v1h-1zM11 580h1v2h-1zm4 0h1v2h-1zm5 0h1v2h-1zm3 0h1v2h-1zm5 0h1v2h-1zm4 0h1v2h-1zm5 0h1v2h-1zm3 0h1v2h-1zm5 0h1v2h-1zm4 0h1v2h-1zm5 0h1v2h-1zm3 0h1v2h-1zm5 0h1v2h-1zm4 0h1v2h-1zm4 0h1v2h-1zm4 0h1v2h-1zm5 0h1v2h-1zm4 0h1v2h-1zm4 0h1v2h-1zm4 0h1v2h-1zm5 0h1v2h-1zm3 0h1v2h-1zm5 0h1v2h-1zm4 0h1v2h-1zm5 0h1v2h-1zm3 0h1v2h-1zm5 0h1v2h-1zm4 0h1v2h-1zm4 0h1v2h-1zm4 0h1v2h-1zm5 0h1v2h-1zm4 0h1v2h-1zm4 0h1v2h-1zm4 0h1v2h-1zm5 0h1v2h-1zm3 0h1v2h-1zm5 0h1v2h-1zm4 0h1v2h-1zm5 0h1v2h-1zm3 0h1v2h-1zm5 0h1v2h-1zm4 0h1v2h-1zm4 0h1v2h-1zm4 0h1v2h-1zm5 0h1v2h-1zm4 0h1v2h-1zm4 0h1v2h-1zm4 0h1v2h-1zm5 0h1v2h-1zm3 0h1v2h-1zm5 0h1v2h-1zm4 0h1v2h-1zm5 0h1v2h-1zm3 0h1v2h-1zm5 0h1v2h-1zm4 0h1v2h-1zm4 0h1v2h-1zm4 0h1v2h-1zm5 0h1v2h-1zm4 0h1v2h-1zm4 0h1v2h-1zm4 0h1v2h-1zm5 0h1v2h-1zm3 0h1v2h-1zm5 0h1v2h-1zm4 0h1v2h-1zm5 0h1v2h-1zm3 0h1v2h-1zm5 0h1v2h-1zm4 0h1v2h-1zm5 0h1v2h-1zm3 0h1v2h-1zm5 0h1v2h-1zm4 0h1v2h-1zm4 0h1v2h-1zm4 0h1v2h-1zm5 0h1v2h-1zm3 0h1v2h-1zm5 0h1v2h-1zm4 0h1v2h-1zm5 0h1v2h-1zm3 0h1v2h-1zm5 0h1v2h-1zm4 0h1v2h-1zm5 0h1v2h-1zm3 0h1v2h-1zm5 0h1v2h-1zm4 0h1v2h-1zm4 0h1v2h-1zm4 0h1v2h-1zm5 0h1v2h-1zm4 0h1v2h-1zm4 0h1v2h-1zm4 0h1v2h-1zm5 0h1v2h-1zm3 0h1v2h-1zm5 0h1v2h-1zm4 0h1v2h-1zm5 0h1v2h-1zm3 0h1v2h-1zm5 0h1v2h-1zm4 0h1v2h-1zm4 0h1v2h-1zm4 0h1v2h-1zm5 0h1v2h-1zm4 0h1v2h-1zm4 0h1v2h-1zm4 0h1v2h-1zm5 0h1v2h-1zm3 0h1v2h-1zm5 0h1v2h-1zm4 0h1v2h-1zm5 0h1v2h-1zm3 0h1v2h-1zm5 0h1v2h-1zm4 0h1v2h-1zm4 0h1v2h-1zm4 0h1v2h-1zm5 0h1v2h-1zm4 0h1v2h-1zm4 0h1v2h-1zm4 0h1v2h-1zm5 0h1v2h-1zm3 0h1v2h-1zm5 0h1v2h-1zm4 0h1v2h-1zm5 0h1v2h-1zm3 0h1v2h-1zm5 0h1v2h-1zm4 0h1v2h-1zm4 0h1v2h-1zm4 0h1v2h-1zm5 0h1v2h-1zm4 0h1v2h-1zm4 0h1v2h-1zm4 0h1v2h-1zm5 0h1v2h-1zm3 0h1v2h-1zm5 0h1v2h-1zm4 0h1v2h-1zm5 0h1v2h-1zm3 0h1v2h-1zm5 0h1v2h-1zm4 0h1v2h-1zM11 584h1v2h-1zm4 0h1v2h-1zm5 0h1v2h-1zm3 0h1v2h-1zm5 0h1v2h-1zm4 0h1v2h-1zm5 0h1v2h-1zm3 0h1v2h-1zm5 0h1v2h-1zm4 0h1v2h-1zm5 0h1v2h-1zm3 0h1v2h-1zm5 0h1v2h-1zm4 0h1v2h-1zm4 0h1v2h-1zm4 0h1v2h-1zm5 0h1v2h-1zm4 0h1v2h-1zm4 0h1v2h-1zm4 0h1v2h-1zm5 0h1v2h-1zm3 0h1v2h-1zm5 0h1v2h-1zm4 0h1v2h-1zm5 0h1v2h-1zm3 0h1v2h-1zm5 0h1v2h-1zm4 0h1v2h-1zm4 0h1v2h-1zm4 0h1v2h-1zm5 0h1v2h-1zm4 0h1v2h-1zm4 0h1v2h-1zm4 0h1v2h-1zm5 0h1v2h-1zm3 0h1v2h-1zm5 0h1v2h-1zm4 0h1v2h-1zm5 0h1v2h-1zm3 0h1v2h-1zm5 0h1v2h-1zm4 0h1v2h-1zm4 0h1v2h-1zm4 0h1v2h-1zm5 0h1v2h-1zm4 0h1v2h-1zm4 0h1v2h-1zm4 0h1v2h-1zm5 0h1v2h-1zm3 0h1v2h-1zm5 0h1v2h-1zm4 0h1v2h-1zm5 0h1v2h-1zm3 0h1v2h-1zm5 0h1v2h-1zm4 0h1v2h-1zm4 0h1v2h-1zm4 0h1v2h-1zm5 0h1v2h-1zm4 0h1v2h-1zm4 0h1v2h-1zm4 0h1v2h-1zm5 0h1v2h-1zm3 0h1v2h-1zm5 0h1v2h-1zm4 0h1v2h-1zm5 0h1v2h-1zm3 0h1v2h-1zm5 0h1v2h-1zm4 0h1v2h-1zm5 0h1v2h-1zm3 0h1v2h-1zm5 0h1v2h-1zm4 0h1v2h-1zm4 0h1v2h-1zm4 0h1v2h-1zm5 0h1v2h-1zm3 0h1v2h-1zm5 0h1v2h-1zm4 0h1v2h-1zm5 0h1v2h-1zm3 0h1v2h-1zm5 0h1v2h-1zm4 0h1v2h-1zm5 0h1v2h-1zm3 0h1v2h-1zm5 0h1v2h-1zm4 0h1v2h-1zm4 0h1v2h-1zm4 0h1v2h-1zm5 0h1v2h-1zm4 0h1v2h-1zm4 0h1v2h-1zm4 0h1v2h-1zm5 0h1v2h-1zm3 0h1v2h-1zm5 0h1v2h-1zm4 0h1v2h-1zm5 0h1v2h-1zm3 0h1v2h-1zm5 0h1v2h-1zm4 0h1v2h-1zm4 0h1v2h-1zm4 0h1v2h-1zm5 0h1v2h-1zm4 0h1v2h-1zm4 0h1v2h-1zm4 0h1v2h-1zm5 0h1v2h-1zm3 0h1v2h-1zm5 0h1v2h-1zm4 0h1v2h-1zm5 0h1v2h-1zm3 0h1v2h-1zm5 0h1v2h-1zm4 0h1v2h-1zm4 0h1v2h-1zm4 0h1v2h-1zm5 0h1v2h-1zm4 0h1v2h-1zm4 0h1v2h-1zm4 0h1v2h-1zm5 0h1v2h-1zm3 0h1v2h-1zm5 0h1v2h-1zm4 0h1v2h-1zm5 0h1v2h-1zm3 0h1v2h-1zm5 0h1v2h-1zm4 0h1v2h-1zm4 0h1v2h-1zm4 0h1v2h-1zm5 0h1v2h-1zm4 0h1v2h-1zm4 0h1v2h-1zm4 0h1v2h-1zm5 0h1v2h-1zm3 0h1v2h-1zm5 0h1v2h-1zm4 0h1v2h-1zm5 0h1v2h-1zm3 0h1v2h-1zm5 0h1v2h-1zm4 0h1v2h-1zM11 588h1v2h-1zm4 0h1v2h-1zm5 0h1v2h-1zm3 0h1v2h-1zm5 0h1v2h-1zm4 0h1v2h-1zm5 0h1v2h-1zm3 0h1v2h-1zm5 0h1v2h-1zm4 0h1v2h-1zm5 0h1v2h-1zm3 0h1v2h-1zm5 0h1v2h-1zm4 0h1v2h-1zm4 0h1v2h-1zm4 0h1v2h-1zm5 0h1v2h-1zm4 0h1v2h-1zm4 0h1v2h-1zm4 0h1v2h-1zm5 0h1v2h-1zm3 0h1v2h-1zm5 0h1v2h-1zm4 0h1v2h-1zm5 0h1v2h-1zm3 0h1v2h-1zm5 0h1v2h-1zm4 0h1v2h-1zm4 0h1v2h-1zm4 0h1v2h-1zm5 0h1v2h-1zm4 0h1v2h-1zm4 0h1v2h-1zm4 0h1v2h-1zm5 0h1v2h-1zm3 0h1v2h-1zm5 0h1v2h-1zm4 0h1v2h-1zm5 0h1v2h-1zm3 0h1v2h-1zm5 0h1v2h-1zm4 0h1v2h-1zm4 0h1v2h-1zm4 0h1v2h-1zm5 0h1v2h-1zm4 0h1v2h-1zm4 0h1v2h-1zm4 0h1v2h-1zm5 0h1v2h-1zm3 0h1v2h-1zm5 0h1v2h-1zm4 0h1v2h-1zm5 0h1v2h-1zm3 0h1v2h-1zm5 0h1v2h-1zm4 0h1v2h-1zm4 0h1v2h-1zm4 0h1v2h-1zm5 0h1v2h-1zm4 0h1v2h-1zm4 0h1v2h-1zm4 0h1v2h-1zm5 0h1v2h-1zm3 0h1v2h-1zm5 0h1v2h-1zm4 0h1v2h-1zm5 0h1v2h-1zm3 0h1v2h-1zm5 0h1v2h-1zm4 0h1v2h-1zm5 0h1v2h-1zm3 0h1v2h-1zm5 0h1v2h-1zm4 0h1v2h-1zm4 0h1v2h-1zm4 0h1v2h-1zm5 0h1v2h-1zm3 0h1v2h-1zm5 0h1v2h-1zm4 0h1v2h-1zm5 0h1v2h-1zm3 0h1v2h-1zm5 0h1v2h-1zm4 0h1v2h-1zm5 0h1v2h-1zm3 0h1v2h-1zm5 0h1v2h-1zm4 0h1v2h-1zm4 0h1v2h-1zm4 0h1v2h-1zm5 0h1v2h-1zm4 0h1v2h-1zm4 0h1v2h-1zm4 0h1v2h-1zm5 0h1v2h-1zm3 0h1v2h-1zm5 0h1v2h-1zm4 0h1v2h-1zm5 0h1v2h-1zm3 0h1v2h-1zm5 0h1v2h-1zm4 0h1v2h-1zm4 0h1v2h-1zm4 0h1v2h-1zm5 0h1v2h-1zm4 0h1v2h-1zm4 0h1v2h-1zm4 0h1v2h-1zm5 0h1v2h-1zm3 0h1v2h-1zm5 0h1v2h-1zm4 0h1v2h-1zm5 0h1v2h-1zm3 0h1v2h-1zm5 0h1v2h-1zm4 0h1v2h-1zm4 0h1v2h-1zm4 0h1v2h-1zm5 0h1v2h-1zm4 0h1v2h-1zm4 0h1v2h-1zm4 0h1v2h-1zm5 0h1v2h-1zm3 0h1v2h-1zm5 0h1v2h-1zm4 0h1v2h-1zm5 0h1v2h-1zm3 0h1v2h-1zm5 0h1v2h-1zm4 0h1v2h-1zm4 0h1v2h-1zm4 0h1v2h-1zm5 0h1v2h-1zm4 0h1v2h-1zm4 0h1v2h-1zm4 0h1v2h-1zm5 0h1v2h-1zm3 0h1v2h-1zm5 0h1v2h-1zm4 0h1v2h-1zm5 0h1v2h-1zm3 0h1v2h-1zm5 0h1v2h-1zm4 0h1v2h-1zM11 591h1v2h-1zm4 0h1v2h-1zm5 0h1v2h-1zm3 0h1v2h-1zm5 0h1v2h-1zm4 0h1v2h-1zm5 0h1v2h-1zm3 0h1v2h-1zm5 0h1v2h-1zm4 0h1v2h-1zm5 0h1v2h-1zm3 0h1v2h-1zm5 0h1v2h-1zm4 0h1v2h-1zm4 0h1v2h-1zm4 0h1v2h-1zm5 0h1v2h-1zm4 0h1v2h-1zm4 0h1v2h-1zm4 0h1v2h-1zm5 0h1v2h-1zm3 0h1v2h-1zm5 0h1v2h-1zm4 0h1v2h-1zm5 0h1v2h-1zm3 0h1v2h-1zm5 0h1v2h-1zm4 0h1v2h-1zm4 0h1v2h-1zm4 0h1v2h-1zm5 0h1v2h-1zm4 0h1v2h-1zm4 0h1v2h-1zm4 0h1v2h-1zm5 0h1v2h-1zm3 0h1v2h-1zm5 0h1v2h-1zm4 0h1v2h-1zm5 0h1v2h-1zm3 0h1v2h-1zm5 0h1v2h-1zm4 0h1v2h-1zm4 0h1v2h-1zm4 0h1v2h-1zm5 0h1v2h-1zm4 0h1v2h-1zm4 0h1v2h-1zm4 0h1v2h-1zm5 0h1v2h-1zm3 0h1v2h-1zm5 0h1v2h-1zm4 0h1v2h-1zm5 0h1v2h-1zm3 0h1v2h-1zm5 0h1v2h-1zm4 0h1v2h-1zm4 0h1v2h-1zm4 0h1v2h-1zm5 0h1v2h-1zm4 0h1v2h-1zm4 0h1v2h-1zm4 0h1v2h-1zm5 0h1v2h-1zm3 0h1v2h-1zm5 0h1v2h-1zm4 0h1v2h-1zm5 0h1v2h-1zm3 0h1v2h-1zm5 0h1v2h-1zm4 0h1v2h-1zm5 0h1v2h-1zm3 0h1v2h-1zm5 0h1v2h-1zm4 0h1v2h-1zm4 0h1v2h-1zm4 0h1v2h-1zm5 0h1v2h-1zm3 0h1v2h-1zm5 0h1v2h-1zm4 0h1v2h-1zm5 0h1v2h-1zm3 0h1v2h-1zm5 0h1v2h-1zm4 0h1v2h-1zm5 0h1v2h-1zm3 0h1v2h-1zm5 0h1v2h-1zm4 0h1v2h-1zm4 0h1v2h-1zm4 0h1v2h-1zm5 0h1v2h-1zm4 0h1v2h-1zm4 0h1v2h-1zm4 0h1v2h-1zm5 0h1v2h-1zm3 0h1v2h-1zm5 0h1v2h-1zm4 0h1v2h-1zm5 0h1v2h-1zm3 0h1v2h-1zm5 0h1v2h-1zm4 0h1v2h-1zm4 0h1v2h-1zm4 0h1v2h-1zm5 0h1v2h-1zm4 0h1v2h-1zm4 0h1v2h-1zm4 0h1v2h-1zm5 0h1v2h-1zm3 0h1v2h-1zm5 0h1v2h-1zm4 0h1v2h-1zm5 0h1v2h-1zm3 0h1v2h-1zm5 0h1v2h-1zm4 0h1v2h-1zm4 0h1v2h-1zm4 0h1v2h-1zm5 0h1v2h-1zm4 0h1v2h-1zm4 0h1v2h-1zm4 0h1v2h-1zm5 0h1v2h-1zm3 0h1v2h-1zm5 0h1v2h-1zm4 0h1v2h-1zm5 0h1v2h-1zm3 0h1v2h-1zm5 0h1v2h-1zm4 0h1v2h-1zm4 0h1v2h-1zm4 0h1v2h-1zm5 0h1v2h-1zm4 0h1v2h-1zm4 0h1v2h-1zm4 0h1v2h-1zm5 0h1v2h-1zm3 0h1v2h-1zm5 0h1v2h-1zm4 0h1v2h-1zm5 0h1v2h-1zm3 0h1v2h-1zm5 0h1v2h-1zm4 0h1v2h-1zM11 597h1v2h-1zm4 0h1v2h-1zm5 0h1v2h-1zm3 0h1v2h-1zm5 0h1v2h-1zm4 0h1v2h-1zm5 0h1v2h-1zm3 0h1v2h-1zm5 0h1v2h-1zm4 0h1v2h-1zm5 0h1v2h-1zm3 0h1v2h-1zm5 0h1v2h-1zm4 0h1v2h-1zm4 0h1v2h-1zm4 0h1v2h-1zm5 0h1v2h-1zm4 0h1v2h-1zm4 0h1v2h-1zm4 0h1v2h-1zm5 0h1v2h-1zm3 0h1v2h-1zm5 0h1v2h-1zm4 0h1v2h-1zm5 0h1v2h-1zm3 0h1v2h-1zm5 0h1v2h-1zm4 0h1v2h-1zm4 0h1v2h-1zm4 0h1v2h-1zm5 0h1v2h-1zm4 0h1v2h-1zm4 0h1v2h-1zm4 0h1v2h-1zm5 0h1v2h-1zm3 0h1v2h-1zm5 0h1v2h-1zm4 0h1v2h-1zm5 0h1v2h-1zm3 0h1v2h-1zm5 0h1v2h-1zm4 0h1v2h-1zm4 0h1v2h-1zm4 0h1v2h-1zm5 0h1v2h-1zm4 0h1v2h-1zm4 0h1v2h-1zm4 0h1v2h-1zm5 0h1v2h-1zm3 0h1v2h-1zm5 0h1v2h-1zm4 0h1v2h-1zm5 0h1v2h-1zm3 0h1v2h-1zm5 0h1v2h-1zm4 0h1v2h-1zm4 0h1v2h-1zm4 0h1v2h-1zm5 0h1v2h-1zm4 0h1v2h-1zm4 0h1v2h-1zm4 0h1v2h-1zm5 0h1v2h-1zm3 0h1v2h-1zm5 0h1v2h-1zm4 0h1v2h-1zm5 0h1v2h-1zm3 0h1v2h-1zm5 0h1v2h-1zm4 0h1v2h-1zm5 0h1v2h-1zm3 0h1v2h-1zm5 0h1v2h-1zm4 0h1v2h-1zm4 0h1v2h-1zm4 0h1v2h-1zm5 0h1v2h-1zm3 0h1v2h-1zm5 0h1v2h-1zm4 0h1v2h-1zm5 0h1v2h-1zm3 0h1v2h-1zm5 0h1v2h-1zm4 0h1v2h-1zm5 0h1v2h-1zm3 0h1v2h-1zm5 0h1v2h-1zm4 0h1v2h-1zm4 0h1v2h-1zm4 0h1v2h-1zm5 0h1v2h-1zm4 0h1v2h-1zm4 0h1v2h-1zm4 0h1v2h-1zm5 0h1v2h-1zm3 0h1v2h-1zm5 0h1v2h-1zm4 0h1v2h-1zm5 0h1v2h-1zm3 0h1v2h-1zm5 0h1v2h-1zm4 0h1v2h-1zm4 0h1v2h-1zm4 0h1v2h-1zm5 0h1v2h-1zm4 0h1v2h-1zm4 0h1v2h-1zm4 0h1v2h-1zm5 0h1v2h-1zm3 0h1v2h-1zm5 0h1v2h-1zm4 0h1v2h-1zm5 0h1v2h-1zm3 0h1v2h-1zm5 0h1v2h-1zm4 0h1v2h-1zm4 0h1v2h-1zm4 0h1v2h-1zm5 0h1v2h-1zm4 0h1v2h-1zm4 0h1v2h-1zm4 0h1v2h-1zm5 0h1v2h-1zm3 0h1v2h-1zm5 0h1v2h-1zm4 0h1v2h-1zm5 0h1v2h-1zm3 0h1v2h-1zm5 0h1v2h-1zm4 0h1v2h-1zm4 0h1v2h-1zm4 0h1v2h-1zm5 0h1v2h-1zm4 0h1v2h-1zm4 0h1v2h-1zm4 0h1v2h-1zm5 0h1v2h-1zm3 0h1v2h-1zm5 0h1v2h-1zm4 0h1v2h-1zm5 0h1v2h-1zm3 0h1v2h-1zm5 0h1v2h-1zm4 0h1v2h-1zM11 601h1v2h-1zm4 0h1v2h-1zm5 0h1v2h-1zm3 0h1v2h-1zm5 0h1v2h-1zm4 0h1v2h-1zm5 0h1v2h-1zm3 0h1v2h-1zm5 0h1v2h-1zm4 0h1v2h-1zm5 0h1v2h-1zm3 0h1v2h-1zm5 0h1v2h-1zm4 0h1v2h-1zm4 0h1v2h-1zm4 0h1v2h-1zm5 0h1v2h-1zm4 0h1v2h-1zm4 0h1v2h-1zm4 0h1v2h-1zm5 0h1v2h-1zm3 0h1v2h-1zm5 0h1v2h-1zm4 0h1v2h-1zm5 0h1v2h-1zm3 0h1v2h-1zm5 0h1v2h-1zm4 0h1v2h-1zm4 0h1v2h-1zm4 0h1v2h-1zm5 0h1v2h-1zm4 0h1v2h-1zm4 0h1v2h-1zm4 0h1v2h-1zm5 0h1v2h-1zm3 0h1v2h-1zm5 0h1v2h-1zm4 0h1v2h-1zm5 0h1v2h-1zm3 0h1v2h-1zm5 0h1v2h-1zm4 0h1v2h-1zm4 0h1v2h-1zm4 0h1v2h-1zm5 0h1v2h-1zm4 0h1v2h-1zm4 0h1v2h-1zm4 0h1v2h-1zm5 0h1v2h-1zm3 0h1v2h-1zm5 0h1v2h-1zm4 0h1v2h-1zm5 0h1v2h-1zm3 0h1v2h-1zm5 0h1v2h-1zm4 0h1v2h-1zm4 0h1v2h-1zm4 0h1v2h-1zm5 0h1v2h-1zm4 0h1v2h-1zm4 0h1v2h-1zm4 0h1v2h-1zm5 0h1v2h-1zm3 0h1v2h-1zm5 0h1v2h-1zm4 0h1v2h-1zm5 0h1v2h-1zm3 0h1v2h-1zm5 0h1v2h-1zm4 0h1v2h-1zm5 0h1v2h-1zm3 0h1v2h-1zm5 0h1v2h-1zm4 0h1v2h-1zm4 0h1v2h-1zm4 0h1v2h-1zm5 0h1v2h-1zm3 0h1v2h-1zm5 0h1v2h-1zm4 0h1v2h-1zm5 0h1v2h-1zm3 0h1v2h-1zm5 0h1v2h-1zm4 0h1v2h-1zm5 0h1v2h-1zm3 0h1v2h-1zm5 0h1v2h-1zm4 0h1v2h-1zm4 0h1v2h-1zm4 0h1v2h-1zm5 0h1v2h-1zm4 0h1v2h-1zm4 0h1v2h-1zm4 0h1v2h-1zm5 0h1v2h-1zm3 0h1v2h-1zm5 0h1v2h-1zm4 0h1v2h-1zm5 0h1v2h-1zm3 0h1v2h-1zm5 0h1v2h-1zm4 0h1v2h-1zm4 0h1v2h-1zm4 0h1v2h-1zm5 0h1v2h-1zm4 0h1v2h-1zm4 0h1v2h-1zm4 0h1v2h-1zm5 0h1v2h-1zm3 0h1v2h-1zm5 0h1v2h-1zm4 0h1v2h-1zm5 0h1v2h-1zm3 0h1v2h-1zm5 0h1v2h-1zm4 0h1v2h-1zm4 0h1v2h-1zm4 0h1v2h-1zm5 0h1v2h-1zm4 0h1v2h-1zm4 0h1v2h-1zm4 0h1v2h-1zm5 0h1v2h-1zm3 0h1v2h-1zm5 0h1v2h-1zm4 0h1v2h-1zm5 0h1v2h-1zm3 0h1v2h-1zm5 0h1v2h-1zm4 0h1v2h-1zm4 0h1v2h-1zm4 0h1v2h-1zm5 0h1v2h-1zm4 0h1v2h-1zm4 0h1v2h-1zm4 0h1v2h-1zm5 0h1v2h-1zm3 0h1v2h-1zm5 0h1v2h-1zm4 0h1v2h-1zm5 0h1v2h-1zm3 0h1v2h-1zm5 0h1v2h-1zm4 0h1v2h-1zM11 605h1v1h-1zm4 0h1v1h-1zm5 0h1v1h-1zm3 0h1v1h-1zm5 0h1v1h-1zm4 0h1v1h-1zm5 0h1v1h-1zm3 0h1v1h-1zm5 0h1v1h-1zm4 0h1v1h-1zm5 0h1v1h-1zm3 0h1v1h-1zm5 0h1v1h-1zm4 0h1v1h-1zm4 0h1v1h-1zm4 0h1v1h-1zm5 0h1v1h-1zm4 0h1v1h-1zm4 0h1v1h-1zm4 0h1v1h-1zm5 0h1v1h-1zm3 0h1v1h-1zm5 0h1v1h-1zm4 0h1v1h-1zm5 0h1v1h-1zm3 0h1v1h-1zm5 0h1v1h-1zm4 0h1v1h-1zm4 0h1v1h-1zm4 0h1v1h-1zm5 0h1v1h-1zm4 0h1v1h-1zm4 0h1v1h-1zm4 0h1v1h-1zm5 0h1v1h-1zm3 0h1v1h-1zm5 0h1v1h-1zm4 0h1v1h-1zm5 0h1v1h-1zm3 0h1v1h-1zm5 0h1v1h-1zm4 0h1v1h-1zm4 0h1v1h-1zm4 0h1v1h-1zm5 0h1v1h-1zm4 0h1v1h-1zm4 0h1v1h-1zm4 0h1v1h-1zm5 0h1v1h-1zm3 0h1v1h-1zm5 0h1v1h-1zm4 0h1v1h-1zm5 0h1v1h-1zm3 0h1v1h-1zm5 0h1v1h-1zm4 0h1v1h-1zm4 0h1v1h-1zm4 0h1v1h-1zm5 0h1v1h-1zm4 0h1v1h-1zm4 0h1v1h-1zm4 0h1v1h-1zm5 0h1v1h-1zm3 0h1v1h-1zm5 0h1v1h-1zm4 0h1v1h-1zm5 0h1v1h-1zm3 0h1v1h-1zm5 0h1v1h-1zm4 0h1v1h-1zm5 0h1v1h-1zm3 0h1v1h-1zm5 0h1v1h-1zm4 0h1v1h-1zm4 0h1v1h-1zm4 0h1v1h-1zm5 0h1v1h-1zm3 0h1v1h-1zm5 0h1v1h-1zm4 0h1v1h-1zm5 0h1v1h-1zm3 0h1v1h-1zm5 0h1v1h-1zm4 0h1v1h-1zm5 0h1v1h-1zm3 0h1v1h-1zm5 0h1v1h-1zm4 0h1v1h-1zm4 0h1v1h-1zm4 0h1v1h-1zm5 0h1v1h-1zm4 0h1v1h-1zm4 0h1v1h-1zm4 0h1v1h-1zm5 0h1v1h-1zm3 0h1v1h-1zm5 0h1v1h-1zm4 0h1v1h-1zm5 0h1v1h-1zm3 0h1v1h-1zm5 0h1v1h-1zm4 0h1v1h-1zm4 0h1v1h-1zm4 0h1v1h-1zm5 0h1v1h-1zm4 0h1v1h-1zm4 0h1v1h-1zm4 0h1v1h-1zm5 0h1v1h-1zm3 0h1v1h-1zm5 0h1v1h-1zm4 0h1v1h-1zm5 0h1v1h-1zm3 0h1v1h-1zm5 0h1v1h-1zm4 0h1v1h-1zm4 0h1v1h-1zm4 0h1v1h-1zm5 0h1v1h-1zm4 0h1v1h-1zm4 0h1v1h-1zm4 0h1v1h-1zm5 0h1v1h-1zm3 0h1v1h-1zm5 0h1v1h-1zm4 0h1v1h-1zm5 0h1v1h-1zm3 0h1v1h-1zm5 0h1v1h-1zm4 0h1v1h-1zm4 0h1v1h-1zm4 0h1v1h-1zm5 0h1v1h-1zm4 0h1v1h-1zm4 0h1v1h-1zm4 0h1v1h-1zm5 0h1v1h-1zm3 0h1v1h-1zm5 0h1v1h-1zm4 0h1v1h-1zm5 0h1v1h-1zm3 0h1v1h-1zm5 0h1v1h-1zm4 0h1v1h-1zM11 608h1v2h-1zm4 0h1v2h-1zm5 0h1v2h-1zm3 0h1v2h-1zm5 0h1v2h-1zm4 0h1v2h-1zm5 0h1v2h-1zm3 0h1v2h-1zm5 0h1v2h-1zm4 0h1v2h-1zm5 0h1v2h-1zm3 0h1v2h-1zm5 0h1v2h-1zm4 0h1v2h-1zm4 0h1v2h-1zm4 0h1v2h-1zm5 0h1v2h-1zm4 0h1v2h-1zm4 0h1v2h-1zm4 0h1v2h-1zm5 0h1v2h-1zm3 0h1v2h-1zm5 0h1v2h-1zm4 0h1v2h-1zm5 0h1v2h-1zm3 0h1v2h-1zm5 0h1v2h-1zm4 0h1v2h-1zm4 0h1v2h-1zm4 0h1v2h-1zm5 0h1v2h-1zm4 0h1v2h-1zm4 0h1v2h-1zm4 0h1v2h-1zm5 0h1v2h-1zm3 0h1v2h-1zm5 0h1v2h-1zm4 0h1v2h-1zm5 0h1v2h-1zm3 0h1v2h-1zm5 0h1v2h-1zm4 0h1v2h-1zm4 0h1v2h-1zm4 0h1v2h-1zm5 0h1v2h-1zm4 0h1v2h-1zm4 0h1v2h-1zm4 0h1v2h-1zm5 0h1v2h-1zm3 0h1v2h-1zm5 0h1v2h-1zm4 0h1v2h-1zm5 0h1v2h-1zm3 0h1v2h-1zm5 0h1v2h-1zm4 0h1v2h-1zm4 0h1v2h-1zm4 0h1v2h-1zm5 0h1v2h-1zm4 0h1v2h-1zm4 0h1v2h-1zm4 0h1v2h-1zm5 0h1v2h-1zm3 0h1v2h-1zm5 0h1v2h-1zm4 0h1v2h-1zm5 0h1v2h-1zm3 0h1v2h-1zm5 0h1v2h-1zm4 0h1v2h-1zm5 0h1v2h-1zm3 0h1v2h-1zm5 0h1v2h-1zm4 0h1v2h-1zm4 0h1v2h-1zm4 0h1v2h-1zm5 0h1v2h-1zm3 0h1v2h-1zm5 0h1v2h-1zm4 0h1v2h-1zm5 0h1v2h-1zm3 0h1v2h-1zm5 0h1v2h-1zm4 0h1v2h-1zm5 0h1v2h-1zm3 0h1v2h-1zm5 0h1v2h-1zm4 0h1v2h-1zm4 0h1v2h-1zm4 0h1v2h-1zm5 0h1v2h-1zm4 0h1v2h-1zm4 0h1v2h-1zm4 0h1v2h-1zm5 0h1v2h-1zm3 0h1v2h-1zm5 0h1v2h-1zm4 0h1v2h-1zm5 0h1v2h-1zm3 0h1v2h-1zm5 0h1v2h-1zm4 0h1v2h-1zm4 0h1v2h-1zm4 0h1v2h-1zm5 0h1v2h-1zm4 0h1v2h-1zm4 0h1v2h-1zm4 0h1v2h-1zm5 0h1v2h-1zm3 0h1v2h-1zm5 0h1v2h-1zm4 0h1v2h-1zm5 0h1v2h-1zm3 0h1v2h-1zm5 0h1v2h-1zm4 0h1v2h-1zm4 0h1v2h-1zm4 0h1v2h-1zm5 0h1v2h-1zm4 0h1v2h-1zm4 0h1v2h-1zm4 0h1v2h-1zm5 0h1v2h-1zm3 0h1v2h-1zm5 0h1v2h-1zm4 0h1v2h-1zm5 0h1v2h-1zm3 0h1v2h-1zm5 0h1v2h-1zm4 0h1v2h-1zm4 0h1v2h-1zm4 0h1v2h-1zm5 0h1v2h-1zm4 0h1v2h-1zm4 0h1v2h-1zm4 0h1v2h-1zm5 0h1v2h-1zm3 0h1v2h-1zm5 0h1v2h-1zm4 0h1v2h-1zm5 0h1v2h-1zm3 0h1v2h-1zm5 0h1v2h-1zm4 0h1v2h-1z" fill="#501a0c"/></svg>
</body></html>
